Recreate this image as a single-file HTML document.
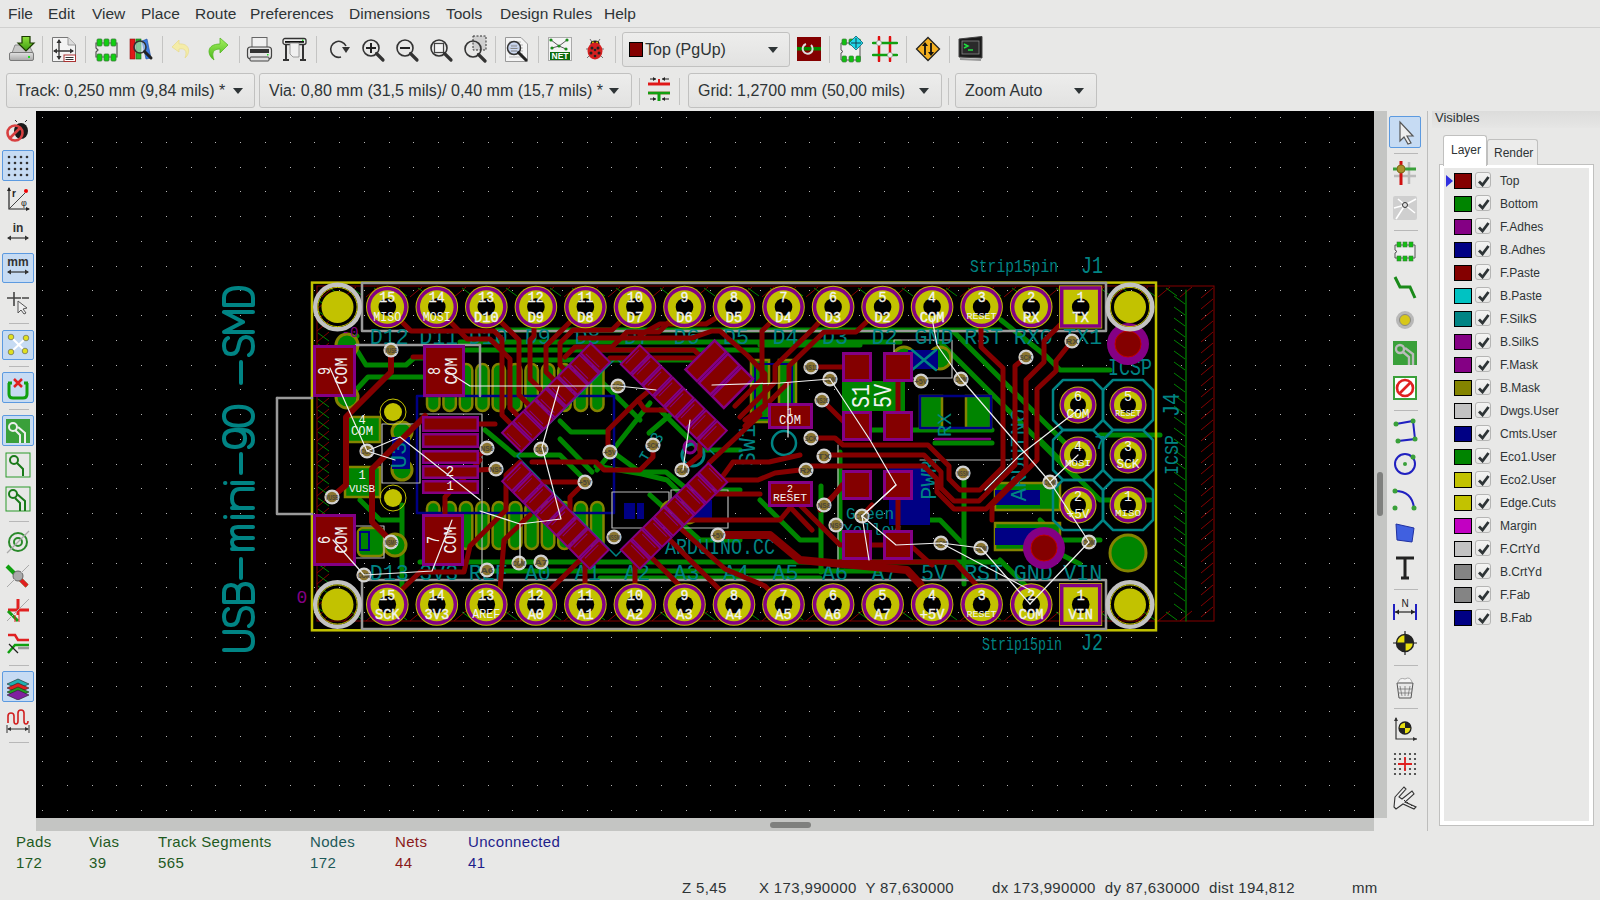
<!DOCTYPE html><html><head><meta charset="utf-8"><style>
*{margin:0;padding:0;box-sizing:border-box}
body{width:1600px;height:900px;overflow:hidden;background:#e8e8e7;font-family:"Liberation Sans",sans-serif;position:relative;color:#2e3436}
.abs{position:absolute}
.menu{position:absolute;top:0;left:0;width:1600px;height:28px;border-bottom:1px solid #d0d0cf;background:#e8e8e7}
.menu span{position:absolute;top:5px;font-size:15.5px;color:#2e3436}
.sep{position:absolute;width:1px;background:#c4c4c3}
.dd{position:absolute;border:1px solid #c1c1c0;border-radius:3px;background:linear-gradient(#ededec,#e2e2e1);font-size:16px;color:#2e3436}
.dd span{position:absolute;left:9px;top:8px;white-space:nowrap}
.dd i{position:absolute;top:14px;width:0;height:0;border-left:5px solid transparent;border-right:5px solid transparent;border-top:6px solid #2e3436}
.lay{position:absolute;left:1454px;height:16px}
.lay b{position:absolute;left:0;top:0;width:18px;height:16px;border:1px solid #000}
.lay u{position:absolute;left:21px;top:-1px;width:16px;height:16px;border:1px solid #b5b5b4;border-radius:3px;background:linear-gradient(#f4f4f3,#e6e6e5)}
.lay span{position:absolute;left:46px;top:1px;font-size:12px;color:#2e3436;white-space:nowrap}
.st{position:absolute;font-size:15px;white-space:nowrap;letter-spacing:0.35px}
</style></head><body>
<div class="menu">
<span style="left:8px">File</span>
<span style="left:48px">Edit</span>
<span style="left:92px">View</span>
<span style="left:141px">Place</span>
<span style="left:195px">Route</span>
<span style="left:250px">Preferences</span>
<span style="left:349px">Dimensions</span>
<span style="left:446px">Tools</span>
<span style="left:500px">Design Rules</span>
<span style="left:604px">Help</span>
</div>
<div class="sep" style="left:42px;top:36px;height:27px"></div>
<div class="sep" style="left:85px;top:36px;height:27px"></div>
<div class="sep" style="left:162px;top:36px;height:27px"></div>
<div class="sep" style="left:239px;top:36px;height:27px"></div>
<div class="sep" style="left:316px;top:36px;height:27px"></div>
<div class="sep" style="left:495px;top:36px;height:27px"></div>
<div class="sep" style="left:538px;top:36px;height:27px"></div>
<div class="sep" style="left:615px;top:36px;height:27px"></div>
<div class="sep" style="left:829px;top:36px;height:27px"></div>
<div class="sep" style="left:906px;top:36px;height:27px"></div>
<div class="sep" style="left:949px;top:36px;height:27px"></div>
<div class="sep" style="left:639px;top:78px;height:27px"></div>
<div class="sep" style="left:679px;top:78px;height:27px"></div>
<div class="sep" style="left:948px;top:78px;height:27px"></div>
<div class="dd" style="left:622px;top:32px;width:168px;height:35px"><b style="position:absolute;left:6px;top:9px;width:14px;height:15px;background:#840000;border:1px solid #000"></b><span style="left:22px;top:8px">Top (PgUp)</span><i style="left:145px"></i></div>
<div class="dd" style="left:6px;top:73px;width:249px;height:35px"><span>Track: 0,250 mm (9,84 mils) *</span><i style="left:226px"></i></div>
<div class="dd" style="left:259px;top:73px;width:373px;height:35px"><span>Via: 0,80 mm (31,5 mils)/ 0,40 mm (15,7 mils) *</span><i style="left:349px"></i></div>
<div class="dd" style="left:688px;top:73px;width:254px;height:35px"><span>Grid: 1,2700 mm (50,00 mils)</span><i style="left:230px"></i></div>
<div class="dd" style="left:955px;top:73px;width:142px;height:35px"><span>Zoom Auto</span><i style="left:118px"></i></div>
<svg class="abs" style="left:8px;top:35px" width="28" height="28" viewBox="0 0 28 28"><defs><linearGradient id="dg" x1="0" y1="0" x2="0" y2="1"><stop offset="0" stop-color="#e2e2e2"/><stop offset="1" stop-color="#a8a8a8"/></linearGradient><linearGradient id="ga" x1="0" y1="0" x2="0" y2="1"><stop offset="0" stop-color="#8ee03c"/><stop offset="1" stop-color="#3c9a10"/></linearGradient></defs><path d="M4 18 L7 10 L21 10 L25 18 Z" fill="#c8c8c8" stroke="#8a8a8a"/><rect x="1.5" y="17.5" width="24" height="8" rx="1.5" fill="url(#dg)" stroke="#7a7a7a"/><rect x="20" y="21" width="2" height="2" fill="#20e020"/><path d="M14 1.5 L22 1.5 L22 8 L26 8 L18 16 L10 8 L14 8 Z" fill="url(#ga)" stroke="#1a3a00" stroke-width="1.2"/></svg>
<svg class="abs" style="left:51px;top:36px" width="27" height="27" viewBox="0 0 27 27"><path d="M1.5 1.5 L17 1.5 L24.5 9 L24.5 25.5 L1.5 25.5 Z" fill="#f4f4f4" stroke="#777"/><path d="M17 1.5 L17 9 L24.5 9" fill="#ddd" stroke="#999"/><path d="M8 4 V23 M3 15 H22" stroke="#333" stroke-width="1.3"/><path d="M8 3 l-2.5 4 h5z M8 24 l-2.5 -4 h5z M2 15 l4 -2.5 v5z M23 15 l-4 -2.5 v5z" fill="#333"/><rect x="13" y="19" width="11.5" height="6.5" fill="#fff" stroke="#a33"/><path d="M14.5 21.5h8M14.5 23.5h8" stroke="#333"/></svg>
<svg class="abs" style="left:93px;top:36px" width="27" height="27" viewBox="0 0 27 27"><path d="M3 7 H24 V21 H3 V16 L5 14 L3 12 Z" fill="#e8e8e8" stroke="#555" stroke-width="1.2"/><rect x="4" y="3" width="5" height="7" rx="1" fill="#10d010" stroke="#3a7a3a" stroke-width=".8"/><rect x="4" y="18" width="5" height="7" rx="1" fill="#10d010" stroke="#3a7a3a" stroke-width=".8"/><rect x="11" y="3" width="5" height="7" rx="1" fill="#10d010" stroke="#3a7a3a" stroke-width=".8"/><rect x="11" y="18" width="5" height="7" rx="1" fill="#10d010" stroke="#3a7a3a" stroke-width=".8"/><rect x="18" y="3" width="5" height="7" rx="1" fill="#10d010" stroke="#3a7a3a" stroke-width=".8"/><rect x="18" y="18" width="5" height="7" rx="1" fill="#10d010" stroke="#3a7a3a" stroke-width=".8"/></svg>
<svg class="abs" style="left:128px;top:37px" width="27" height="26" viewBox="0 0 27 26"><rect x="2" y="2" width="5" height="20" fill="#e01818" stroke="#901010" stroke-width=".6"/><rect x="8" y="2" width="5" height="20" fill="#30b030" stroke="#107010" stroke-width=".6"/><path d="M14 4 L19 2 L23 21 L18 22 Z" fill="#3a7ae0" stroke="#1a4aa0" stroke-width=".6"/><circle cx="12" cy="10" r="6" fill="rgba(200,220,240,.55)" stroke="#333" stroke-width="1.6"/><path d="M16.5 14.5 L23 21" stroke="#222" stroke-width="3" stroke-linecap="round"/></svg>
<svg class="abs" style="left:170px;top:37px" width="24" height="24" viewBox="0 0 24 24"><path d="M9 3 L2 10 L9 15 L9 12 C14 11 18 13 15 21 C21 16 20 6 9 7 Z" fill="#f4eca8" stroke="#e8dc90" stroke-width=".8"/></svg>
<svg class="abs" style="left:205px;top:36px" width="26" height="26" viewBox="0 0 26 26"><defs><linearGradient id="gr" x1="0" y1="0" x2="0" y2="1"><stop offset="0" stop-color="#a6f060"/><stop offset="1" stop-color="#48b818"/></linearGradient></defs><path d="M15 2 L23 9 L15 17 L15 13 C9 13 6 16 9 24 C2 19 1 8 15 8 Z" fill="url(#gr)" stroke="#58b828" stroke-width=".8"/></svg>
<svg class="abs" style="left:246px;top:36px" width="27" height="27" viewBox="0 0 27 27"><rect x="6" y="1.5" width="15" height="12" fill="#f0f0f0" stroke="#666"/><rect x="1.5" y="11" width="24" height="12" rx="3" fill="#e4e4e4" stroke="#444" stroke-width="1.2"/><rect x="4" y="13" width="19" height="4" fill="#333"/><rect x="4" y="21" width="19" height="4" rx="1" fill="#ddd" stroke="#444"/><rect x="21" y="18" width="1.5" height="1.5" fill="#2d2"/></svg>
<svg class="abs" style="left:281px;top:37px" width="27" height="26" viewBox="0 0 27 26"><rect x="2" y="1.5" width="23" height="6" rx="2" fill="#eee" stroke="#333" stroke-width="1.3"/><rect x="4" y="4" width="19" height="1.8" fill="#111"/><rect x="21" y="2.5" width="1.5" height="1.5" fill="#2d2"/><path d="M5 7 V22 M22 7 V22" stroke="#333" stroke-width="2"/><path d="M2 23 H8 M19 23 H25" stroke="#333" stroke-width="2.2"/><path d="M9 6 H18 V20 H12 L9 17 Z" fill="#f0f0f0" stroke="#888" stroke-width=".8"/></svg>
<svg class="abs" style="left:327px;top:38px" width="24" height="24" viewBox="0 0 24 24"><path d="M14 19 A8 8 0 1 1 19 8" fill="none" stroke="#333" stroke-width="1.6"/><path d="M15 9 L23 9 L19 15 Z" fill="#333"/></svg>
<svg class="abs" style="left:361px;top:38px" width="26" height="26" viewBox="0 0 26 26"><circle cx="10" cy="10" r="8" fill="none" stroke="#333" stroke-width="1.6"/><path d="M10 5 V15 M5 10 H15" stroke="#222" stroke-width="2"/><path d="M15.5 15.5 L22 22" stroke="#333" stroke-width="3.2" stroke-linecap="round"/></svg>
<svg class="abs" style="left:395px;top:38px" width="26" height="26" viewBox="0 0 26 26"><circle cx="10" cy="10" r="8" fill="none" stroke="#333" stroke-width="1.6"/><path d="M5 10 H15" stroke="#222" stroke-width="2"/><path d="M15.5 15.5 L22 22" stroke="#333" stroke-width="3.2" stroke-linecap="round"/></svg>
<svg class="abs" style="left:429px;top:38px" width="26" height="26" viewBox="0 0 26 26"><circle cx="10" cy="10" r="8" fill="none" stroke="#333" stroke-width="1.6"/><rect x="5.5" y="5.5" width="9" height="9" fill="#f4f4f4" stroke="#444" stroke-width="1.2"/><path d="M15.5 15.5 L22 22" stroke="#333" stroke-width="3.2" stroke-linecap="round"/></svg>
<svg class="abs" style="left:463px;top:35px" width="28" height="28" viewBox="0 0 28 28"><rect x="10" y="1" width="13" height="14" fill="#cfcfcf" stroke="#333" stroke-dasharray="2 1.5"/><circle cx="10" cy="14" r="8" fill="none" stroke="#333" stroke-width="1.6"/><path d="M15.5 19.5 L22 26" stroke="#333" stroke-width="3.2" stroke-linecap="round"/></svg>
<svg class="abs" style="left:503px;top:36px" width="28" height="28" viewBox="0 0 28 28"><path d="M2.5 1.5 L18 1.5 L24.5 8 L24.5 25.5 L2.5 25.5 Z" fill="#f4f4f4" stroke="#999"/><path d="M6 6h12M6 9h14M6 12h14M6 15h14M6 18h14M6 21h14" stroke="#aaa" stroke-width=".8"/><circle cx="11" cy="12" r="6.5" fill="rgba(180,200,240,.6)" stroke="#333" stroke-width="1.5"/><path d="M8 10h6M7.5 12.5h7M8 15h6" stroke="#888"/><path d="M15.5 16.5 L23 24" stroke="#222" stroke-width="3" stroke-linecap="round"/></svg>
<svg class="abs" style="left:547px;top:36px" width="26" height="26" viewBox="0 0 26 26"><rect x="1.5" y="1.5" width="23" height="23" fill="#f4f4f4" stroke="#aaa"/><path d="M4 4 L12 10 L20 4 M5 12 L12 10 L19 13" stroke="#333" stroke-width=".8" fill="none"/><circle cx="4" cy="4" r="1.6" fill="#1a8a1a"/><circle cx="20" cy="4" r="1.6" fill="#1a8a1a"/><circle cx="12" cy="10" r="1.6" fill="#1a8a1a"/><circle cx="5" cy="12" r="1.6" fill="#1a8a1a"/><circle cx="19" cy="13" r="1.6" fill="#1a8a1a"/><rect x="3" y="16" width="20" height="8" fill="#0c6a0c"/><text x="13" y="23" font-family="Liberation Sans" font-weight="bold" font-size="8.5" fill="#fff" text-anchor="middle">NET</text></svg>
<svg class="abs" style="left:582px;top:36px" width="26" height="26" viewBox="0 0 26 26"><path d="M8 3 L10 6 M18 3 L16 6 M4 13 L7 13 M22 13 L19 13 M5 22 L8 19 M21 22 L18 19" stroke="#555" stroke-width=".8"/><ellipse cx="13" cy="7.5" rx="4.5" ry="3" fill="#222"/><circle cx="11" cy="6.5" r=".9" fill="#ee0"/><circle cx="15" cy="6.5" r=".9" fill="#ee0"/><ellipse cx="13" cy="15" rx="7.5" ry="8.5" fill="#d42020"/><circle cx="10" cy="12" r="1.5" fill="#222"/><circle cx="16" cy="12" r="1.5" fill="#222"/><circle cx="9" cy="17" r="1.5" fill="#222"/><circle cx="17" cy="17" r="1.5" fill="#222"/><circle cx="13" cy="20" r="1.3" fill="#222"/><circle cx="13" cy="14" r="1.3" fill="#222"/></svg>
<svg class="abs" style="left:796px;top:36px" width="26" height="26" viewBox="0 0 26 26"><rect x="1" y="1" width="24" height="24" fill="#840000"/><rect x="1" y="11" width="24" height="3.5" fill="#008a00"/><path d="M10 8 A5 5 0 1 0 15 9" fill="none" stroke="#ddd" stroke-width="2"/></svg>
<svg class="abs" style="left:838px;top:35px" width="28" height="28" viewBox="0 0 28 28"><path d="M3 8 H22 V25 H3 V18 L5 16.5 L3 15 Z" fill="#eee" stroke="#555" stroke-width="1"/><rect x="4" y="4" width="4.5" height="6" rx="1" fill="#10c010" stroke="#3a7a3a" stroke-width=".7"/><rect x="4" y="21" width="4.5" height="6" rx="1" fill="#10c010" stroke="#3a7a3a" stroke-width=".7"/><rect x="11" y="4" width="4.5" height="6" rx="1" fill="#10c010" stroke="#3a7a3a" stroke-width=".7"/><rect x="11" y="21" width="4.5" height="6" rx="1" fill="#10c010" stroke="#3a7a3a" stroke-width=".7"/><rect x="18" y="4" width="4.5" height="6" rx="1" fill="#10c010" stroke="#3a7a3a" stroke-width=".7"/><rect x="18" y="21" width="4.5" height="6" rx="1" fill="#10c010" stroke="#3a7a3a" stroke-width=".7"/><path d="M18 1 L25 8 L18 15 L11 8 Z" fill="#20d8e8" stroke="#106070" stroke-width=".8"/><path d="M18 3 V13 M13 8 H23" stroke="#104050" stroke-width="1"/></svg>
<svg class="abs" style="left:872px;top:36px" width="26" height="26" viewBox="0 0 26 26"><path d="M7 1 V25 M18 1 V25" stroke="#e01010" stroke-width="2.5" stroke-linecap="round"/><path d="M1 7 H25 M1 19 H25" stroke="#10a010" stroke-width="2.5" stroke-linecap="round"/><circle cx="7" cy="7" r="2.6" fill="#eee" stroke="#888" stroke-width=".6"/><circle cx="18" cy="19" r="2.6" fill="#eee" stroke="#888" stroke-width=".6"/></svg>
<svg class="abs" style="left:915px;top:36px" width="26" height="26" viewBox="0 0 26 26"><path d="M13 1.5 L24.5 13 L13 24.5 L1.5 13 Z" fill="#f4b020" stroke="#222" stroke-width="1.3"/><path d="M10 8 V19 M16 7 V18" stroke="#111" stroke-width="1.8"/><path d="M10 6 L7 10 H13Z M16 20 L13 16 H19Z" fill="#111"/></svg>
<svg class="abs" style="left:957px;top:35px" width="28" height="28" viewBox="0 0 28 28"><path d="M2 4 L25 1.5 L25 23 L2 22 Z" fill="#1a1a1a" stroke="#444"/><rect x="5" y="6" width="17" height="13" fill="#2a2a2a" stroke="#888" stroke-width=".8"/><path d="M7 9 L11 11 L7 13" stroke="#20e040" stroke-width="1.5" fill="none"/><path d="M11 15 H16" stroke="#20e040" stroke-width="1.5"/><path d="M3 24 L24 25" stroke="#999" stroke-width="2"/></svg>
<svg class="abs" style="left:646px;top:76px" width="28" height="28" viewBox="0 0 28 28"><path d="M2 8 H24 M2 17 H24" stroke="#e01818" stroke-width="2.6"/><path d="M2 17 H24" stroke="#10a010" stroke-width="2.6"/><path d="M2 8 H24" stroke="#e01818" stroke-width="2.6"/><path d="M13 8 V3" stroke="#e01818" stroke-width="2"/><path d="M13 17 V25" stroke="#10a010" stroke-width="3"/><path d="M4 3 H10 M16 3 H23 M4 23 H10 M16 23 H23" stroke="#222" stroke-width="1.2"/><path d="M10 3 l-3 -2 v4z M16 3 l3 -2 v4z M10 23 l-3 -2 v4z M16 23 l3 -2 v4z" fill="#222"/></svg>
<div class="abs" style="left:2px;top:150px;width:32px;height:31px;background:#c6dbf3;border:1px solid #5c9ae0;border-radius:2px"></div>
<div class="abs" style="left:2px;top:253px;width:32px;height:30px;background:#c6dbf3;border:1px solid #5c9ae0;border-radius:2px"></div>
<div class="abs" style="left:2px;top:330px;width:32px;height:30px;background:#c6dbf3;border:1px solid #5c9ae0;border-radius:2px"></div>
<div class="abs" style="left:2px;top:372px;width:32px;height:31px;background:#c6dbf3;border:1px solid #5c9ae0;border-radius:2px"></div>
<div class="abs" style="left:2px;top:415px;width:32px;height:31px;background:#c6dbf3;border:1px solid #5c9ae0;border-radius:2px"></div>
<div class="abs" style="left:2px;top:671px;width:32px;height:31px;background:#c6dbf3;border:1px solid #5c9ae0;border-radius:2px"></div>
<div class="abs" style="left:9px;top:323px;width:20px;height:1px;background:#b8b8b8"></div>
<div class="abs" style="left:9px;top:366px;width:20px;height:1px;background:#b8b8b8"></div>
<div class="abs" style="left:9px;top:409px;width:20px;height:1px;background:#b8b8b8"></div>
<div class="abs" style="left:9px;top:521px;width:20px;height:1px;background:#b8b8b8"></div>
<div class="abs" style="left:9px;top:665px;width:20px;height:1px;background:#b8b8b8"></div>
<div class="abs" style="left:9px;top:742px;width:20px;height:1px;background:#b8b8b8"></div>
<svg class="abs" style="left:5px;top:119px" width="26" height="26" viewBox="0 0 26 26"><ellipse cx="16" cy="12" rx="7" ry="8" fill="#1a1a1a"/><path d="M12 3 l-2 -2 M20 3 l2 -2" stroke="#333"/><circle cx="10" cy="14" r="7.5" fill="none" stroke="#d84040" stroke-width="2.6"/><path d="M5 19 L15 9" stroke="#d84040" stroke-width="2.6"/></svg>
<svg class="abs" style="left:5px;top:153px" width="26" height="26" viewBox="0 0 26 26"><circle cx="4" cy="4" r="1.3" fill="#333"/><circle cx="4" cy="10" r="1.3" fill="#333"/><circle cx="4" cy="16" r="1.3" fill="#333"/><circle cx="4" cy="22" r="1.3" fill="#333"/><circle cx="10" cy="4" r="1.3" fill="#333"/><circle cx="10" cy="10" r="1.3" fill="#333"/><circle cx="10" cy="16" r="1.3" fill="#333"/><circle cx="10" cy="22" r="1.3" fill="#333"/><circle cx="16" cy="4" r="1.3" fill="#333"/><circle cx="16" cy="10" r="1.3" fill="#333"/><circle cx="16" cy="16" r="1.3" fill="#333"/><circle cx="16" cy="22" r="1.3" fill="#333"/><circle cx="22" cy="4" r="1.3" fill="#333"/><circle cx="22" cy="10" r="1.3" fill="#333"/><circle cx="22" cy="16" r="1.3" fill="#333"/><circle cx="22" cy="22" r="1.3" fill="#333"/></svg>
<svg class="abs" style="left:5px;top:186px" width="26" height="26" viewBox="0 0 26 26"><path d="M4 2 V23 H24" fill="none" stroke="#222" stroke-width="1.2"/><path d="M4 1 l-2 4 h4z M25 23 l-4 -2 v4z" fill="#222"/><path d="M4 23 L20 7" stroke="#444" stroke-width="1"/><circle cx="21" cy="5" r="2" fill="#e00"/><text x="7" y="11" font-family="Liberation Sans" font-size="10" font-weight="bold" fill="#222">r</text><text x="16" y="20" font-family="Liberation Sans" font-size="9" fill="#222">φ</text></svg>
<svg class="abs" style="left:5px;top:220px" width="26" height="26" viewBox="0 0 26 26"><text x="13" y="12" font-family="Liberation Sans" font-size="12" font-weight="bold" fill="#333" text-anchor="middle">in</text><path d="M3 18 H23" stroke="#333" stroke-width="1.2"/><path d="M2 18 l4 -2.5 v5z M24 18 l-4 -2.5 v5z" fill="#333"/></svg>
<svg class="abs" style="left:5px;top:254px" width="26" height="26" viewBox="0 0 26 26"><text x="13" y="12" font-family="Liberation Sans" font-size="12" font-weight="bold" fill="#333" text-anchor="middle">mm</text><path d="M3 18 H23" stroke="#333" stroke-width="1.2"/><path d="M2 18 l4 -2.5 v5z M24 18 l-4 -2.5 v5z" fill="#333"/></svg>
<svg class="abs" style="left:5px;top:289px" width="26" height="26" viewBox="0 0 26 26"><path d="M9 3 V17 M2 9 H16 M17 9 H24" stroke="#444" stroke-width="1.6"/><path d="M13 12 L13 24 L16 21 L19 25 L21 24 L18 20 L22 19 Z" fill="#eee" stroke="#555"/></svg>
<svg class="abs" style="left:5px;top:332px" width="26" height="26" viewBox="0 0 26 26"><path d="M6 5 L20 19 M21 6 L6 20" stroke="#fff" stroke-width="2"/><circle cx="6" cy="5" r="2.8" fill="#e0e020" stroke="#555" stroke-width=".6"/><circle cx="21" cy="6" r="2.8" fill="#e0e020" stroke="#555" stroke-width=".6"/><circle cx="6" cy="20" r="2.8" fill="#e0e020" stroke="#555" stroke-width=".6"/><circle cx="20" cy="19" r="2.8" fill="#e0e020" stroke="#555" stroke-width=".6"/></svg>
<svg class="abs" style="left:5px;top:375px" width="26" height="26" viewBox="0 0 26 26"><path d="M4 8 V19 Q4 23 8 23 H18 Q22 23 22 19 V8" fill="none" stroke="#10a010" stroke-width="3"/><path d="M3 8 H7 M19 8 H23" stroke="#10a010" stroke-width="3"/><path d="M9 4 L17 12 M17 4 L9 12" stroke="#e02020" stroke-width="2.5"/></svg>
<svg class="abs" style="left:5px;top:418px" width="26" height="26" viewBox="0 0 26 26"><rect x="1" y="1" width="24" height="24" fill="#3aa03a"/><circle cx="8" cy="9" r="4" fill="none" stroke="#eee" stroke-width="2"/><path d="M10 12 L15 17 V25 M13 9 L20 15 V25" stroke="#eee" stroke-width="2" fill="none"/></svg>
<svg class="abs" style="left:5px;top:452px" width="26" height="26" viewBox="0 0 26 26"><rect x="1" y="1" width="24" height="24" fill="none" stroke="#2a9a2a"/><circle cx="9" cy="8" r="4" fill="none" stroke="#1a7a1a" stroke-width="2"/><path d="M12 11 L18 17 V24" stroke="#1a7a1a" stroke-width="2" fill="none"/></svg>
<svg class="abs" style="left:5px;top:486px" width="26" height="26" viewBox="0 0 26 26"><rect x="1" y="1" width="24" height="24" fill="none" stroke="#2a9a2a"/><circle cx="8" cy="8" r="4" fill="none" stroke="#1a7a1a" stroke-width="2"/><path d="M10 12 L15 17 V25 M12 8 L20 15 V25" stroke="#1a7a1a" stroke-width="2" fill="none"/></svg>
<svg class="abs" style="left:5px;top:529px" width="26" height="26" viewBox="0 0 26 26"><circle cx="13" cy="13" r="9" fill="none" stroke="#2a8a2a" stroke-width="2"/><circle cx="13" cy="13" r="4" fill="none" stroke="#2a8a2a" stroke-width="2"/><path d="M2 24 L24 2" stroke="#aaa" stroke-width="1.3"/></svg>
<svg class="abs" style="left:5px;top:563px" width="26" height="26" viewBox="0 0 26 26"><path d="M2 3 L22 23" stroke="#10a010" stroke-width="4"/><path d="M13 14 L22 23" stroke="#e02020" stroke-width="4"/><circle cx="13" cy="13" r="5" fill="#aaa" stroke="#666"/><path d="M2 24 L24 2" stroke="#aaa" stroke-width="1"/></svg>
<svg class="abs" style="left:5px;top:597px" width="26" height="26" viewBox="0 0 26 26"><path d="M13 2 V18 M3 13 H24" stroke="#e02020" stroke-width="3"/><path d="M3 14 L13 24" stroke="#10a010" stroke-width="3"/><path d="M10 18 V25 M14 18 V25" stroke="#e02020" stroke-width="1"/><path d="M2 24 L24 2" stroke="#aaa" stroke-width="1"/></svg>
<svg class="abs" style="left:5px;top:631px" width="26" height="26" viewBox="0 0 26 26"><path d="M3 4 L10 4 L13 9 L24 9" stroke="#e02020" stroke-width="2.5" fill="none"/><path d="M3 22 L10 14 L24 14" stroke="#10a010" stroke-width="2.5" fill="none"/><path d="M4 13 L13 22" stroke="#222" stroke-width="1.3"/><path d="M13 17 H24" stroke="#999" stroke-width="2.5"/></svg>
<svg class="abs" style="left:5px;top:674px" width="26" height="26" viewBox="0 0 26 26"><path d="M2 10 L13 5 L24 10 L13 15 Z" fill="#20b0b0" stroke="#222" stroke-width=".6"/><path d="M2 14 L13 9 L24 14 L13 19 Z" fill="#e02020" stroke="#222" stroke-width=".6"/><path d="M2 18 L13 13 L24 18 L13 23 Z" fill="#20a020" stroke="#222" stroke-width=".6"/><path d="M2 21 L13 16 L24 21 L13 26 Z" fill="#8020a0" stroke="#222" stroke-width=".6"/></svg>
<svg class="abs" style="left:5px;top:708px" width="26" height="26" viewBox="0 0 26 26"><path d="M3 15 V8 Q3 5 6 5 Q9 5 9 8 V13 Q9 16 11 16 Q13 16 13 13 V5 Q13 2 16 2 Q19 2 19 5 V13 Q19 16 21 16 Q23 16 23 13" fill="none" stroke="#d02020" stroke-width="1.6"/><path d="M3 21 H23" stroke="#333"/><path d="M2 21 l4 -2 v4z M24 21 l-4 -2 v4z" fill="#333"/><path d="M2 17 V25 M24 17 V25" stroke="#333"/></svg>
<div class="abs" style="left:1389px;top:116px;width:32px;height:32px;background:#c6dbf3;border:1px solid #5c9ae0;border-radius:2px"></div>
<div class="abs" style="left:1394px;top:153px;width:24px;height:1px;background:#b8b8b8"></div>
<div class="abs" style="left:1394px;top:230px;width:24px;height:1px;background:#b8b8b8"></div>
<div class="abs" style="left:1394px;top:410px;width:24px;height:1px;background:#b8b8b8"></div>
<div class="abs" style="left:1394px;top:589px;width:24px;height:1px;background:#b8b8b8"></div>
<div class="abs" style="left:1394px;top:665px;width:24px;height:1px;background:#b8b8b8"></div>
<div class="abs" style="left:1394px;top:708px;width:24px;height:1px;background:#b8b8b8"></div>
<svg class="abs" style="left:1392px;top:119px" width="26" height="26" viewBox="0 0 26 26"><path d="M8 3 L8 22 L12 18 L16 25 L19 24 L15 17 L21 17 Z" fill="#eee" stroke="#555" stroke-width="1.2"/></svg>
<svg class="abs" style="left:1392px;top:160px" width="26" height="26" viewBox="0 0 26 26"><path d="M2 16 H24 M17 2 V24" stroke="#bbb" stroke-width="2.5"/><path d="M9 1 V25" stroke="#d01010" stroke-width="3"/><path d="M1 9 H24" stroke="#3aa03a" stroke-width="3"/><circle cx="9" cy="9" r="4" fill="#a8902a" stroke="#806a1a"/></svg>
<svg class="abs" style="left:1392px;top:195px" width="26" height="26" viewBox="0 0 26 26"><rect x="1" y="1" width="24" height="24" rx="2" fill="#cfcfcf"/><path d="M13 10 L4 24 M13 10 L24 4 M13 10 L23 18 M13 10 L6 4 M13 10 L2 13" stroke="#fff" stroke-width="1.6"/><circle cx="13" cy="10" r="2.5" fill="#ddd" stroke="#333"/></svg>
<svg class="abs" style="left:1392px;top:238px" width="26" height="26" viewBox="0 0 26 26"><path d="M3 7 H23 V20 H3 V15 L5 13.5 L3 12 Z" fill="#eee" stroke="#555"/><rect x="5" y="4" width="4" height="5" fill="#10c010" stroke="#3a7a3a" stroke-width=".6"/><rect x="5" y="18" width="4" height="5" fill="#10c010" stroke="#3a7a3a" stroke-width=".6"/><rect x="11" y="4" width="4" height="5" fill="#10c010" stroke="#3a7a3a" stroke-width=".6"/><rect x="11" y="18" width="4" height="5" fill="#10c010" stroke="#3a7a3a" stroke-width=".6"/><rect x="17" y="4" width="4" height="5" fill="#10c010" stroke="#3a7a3a" stroke-width=".6"/><rect x="17" y="18" width="4" height="5" fill="#10c010" stroke="#3a7a3a" stroke-width=".6"/></svg>
<svg class="abs" style="left:1392px;top:274px" width="26" height="26" viewBox="0 0 26 26"><path d="M3 3 L8 13 L18 13 L23 24" stroke="#1a8a1a" stroke-width="3" fill="none"/></svg>
<svg class="abs" style="left:1392px;top:307px" width="26" height="26" viewBox="0 0 26 26"><circle cx="13" cy="13" r="9" fill="#b8b8b8"/><circle cx="13" cy="13" r="5.5" fill="#d8c818" stroke="#888"/></svg>
<svg class="abs" style="left:1392px;top:340px" width="26" height="26" viewBox="0 0 26 26"><rect x="1" y="1" width="24" height="24" fill="#3aa03a"/><circle cx="8" cy="9" r="4" fill="none" stroke="#bbb" stroke-width="2.4"/><path d="M11 12 L17 17 V25 M13 8 L21 14 V25" stroke="#bbb" stroke-width="2.4" fill="none"/></svg>
<svg class="abs" style="left:1392px;top:375px" width="26" height="26" viewBox="0 0 26 26"><rect x="1" y="1" width="24" height="24" fill="#3aa03a"/><rect x="3" y="3" width="20" height="20" fill="#fff"/><circle cx="13" cy="13" r="8" fill="none" stroke="#e02020" stroke-width="2.6"/><path d="M8 18 L18 8" stroke="#e02020" stroke-width="2.6"/></svg>
<svg class="abs" style="left:1392px;top:418px" width="26" height="26" viewBox="0 0 26 26"><path d="M4 6 L21 3 L23 21 L6 23" stroke="#2020c0" stroke-width="2" fill="none"/><circle cx="4" cy="6" r="2.5" fill="#3aa03a"/><circle cx="21" cy="3" r="2.5" fill="#3aa03a"/><circle cx="23" cy="21" r="2.5" fill="#3aa03a"/><circle cx="6" cy="23" r="2.5" fill="#3aa03a"/></svg>
<svg class="abs" style="left:1392px;top:451px" width="26" height="26" viewBox="0 0 26 26"><circle cx="13" cy="13" r="10" fill="none" stroke="#2020c0" stroke-width="2"/><circle cx="13" cy="13" r="2" fill="#3aa03a"/><circle cx="21" cy="6" r="2.5" fill="#3aa03a"/></svg>
<svg class="abs" style="left:1392px;top:486px" width="26" height="26" viewBox="0 0 26 26"><path d="M3 5 Q20 5 22 22" stroke="#2020c0" stroke-width="2" fill="none"/><circle cx="3" cy="5" r="2.5" fill="#3aa03a"/><circle cx="22" cy="22" r="2.5" fill="#3aa03a"/><circle cx="3" cy="22" r="2.5" fill="#3aa03a"/></svg>
<svg class="abs" style="left:1392px;top:520px" width="26" height="26" viewBox="0 0 26 26"><path d="M4 4 L22 8 L20 22 L5 20 Z" fill="#4060e0" stroke="#2030a0"/></svg>
<svg class="abs" style="left:1392px;top:554px" width="26" height="26" viewBox="0 0 26 26"><path d="M4 4 H22 M13 4 V24 M9 24 H17" stroke="#222" stroke-width="3"/></svg>
<svg class="abs" style="left:1392px;top:596px" width="26" height="26" viewBox="0 0 26 26"><path d="M2 8 V24 M24 8 V24" stroke="#2020c0" stroke-width="2"/><path d="M3 16 H23" stroke="#222" stroke-width="1.2"/><path d="M3 16 l4 -2.5 v5z M23 16 l-4 -2.5 v5z" fill="#222"/><text x="13" y="11" font-family="Liberation Sans" font-size="10" fill="#222" text-anchor="middle">N</text></svg>
<svg class="abs" style="left:1392px;top:630px" width="26" height="26" viewBox="0 0 26 26"><circle cx="13" cy="13" r="8.5" fill="#e8e010" stroke="#222" stroke-width="1.5"/><path d="M13 4.5 A8.5 8.5 0 0 1 21.5 13 H13Z M13 21.5 A8.5 8.5 0 0 1 4.5 13 H13Z" fill="#222"/><path d="M13 1 V25 M1 13 H25" stroke="#222" stroke-width="1.2"/></svg>
<svg class="abs" style="left:1392px;top:674px" width="26" height="26" viewBox="0 0 26 26"><path d="M5 9 H21 L19 24 H7 Z" fill="#e8e8e8" stroke="#555"/><path d="M8 12 L10 22 M13 12 V22 M18 12 L16 22 M6 15 H20 M6 19 H20" stroke="#777" stroke-width=".8"/><path d="M6 8 Q8 3 13 5 Q18 2 20 8" fill="#f4f4f4" stroke="#aaa"/></svg>
<svg class="abs" style="left:1392px;top:716px" width="26" height="26" viewBox="0 0 26 26"><path d="M4 2 V23 H25" stroke="#333" stroke-width="1.2" fill="none"/><path d="M4 1 l-2 4 h4z M25 23 l-4 -2 v4z" fill="#333"/><circle cx="13" cy="12" r="6" fill="#e8e010" stroke="#222" stroke-width="1.3"/><path d="M13 6 A6 6 0 0 1 19 12 H13Z M13 18 A6 6 0 0 1 7 12 H13Z" fill="#222"/></svg>
<svg class="abs" style="left:1392px;top:751px" width="26" height="26" viewBox="0 0 26 26"><circle cx="3" cy="3" r="1.1" fill="#333"/><circle cx="3" cy="8" r="1.1" fill="#333"/><circle cx="3" cy="13" r="1.1" fill="#333"/><circle cx="3" cy="18" r="1.1" fill="#333"/><circle cx="3" cy="23" r="1.1" fill="#333"/><circle cx="8" cy="3" r="1.1" fill="#333"/><circle cx="8" cy="8" r="1.1" fill="#333"/><circle cx="8" cy="13" r="1.1" fill="#333"/><circle cx="8" cy="18" r="1.1" fill="#333"/><circle cx="8" cy="23" r="1.1" fill="#333"/><circle cx="13" cy="3" r="1.1" fill="#333"/><circle cx="13" cy="8" r="1.1" fill="#333"/><circle cx="13" cy="13" r="1.1" fill="#333"/><circle cx="13" cy="18" r="1.1" fill="#333"/><circle cx="13" cy="23" r="1.1" fill="#333"/><circle cx="18" cy="3" r="1.1" fill="#333"/><circle cx="18" cy="8" r="1.1" fill="#333"/><circle cx="18" cy="13" r="1.1" fill="#333"/><circle cx="18" cy="18" r="1.1" fill="#333"/><circle cx="18" cy="23" r="1.1" fill="#333"/><circle cx="23" cy="3" r="1.1" fill="#333"/><circle cx="23" cy="8" r="1.1" fill="#333"/><circle cx="23" cy="13" r="1.1" fill="#333"/><circle cx="23" cy="18" r="1.1" fill="#333"/><circle cx="23" cy="23" r="1.1" fill="#333"/><path d="M13 6 V20 M6 13 H20" stroke="#e02020" stroke-width="1.8"/></svg>
<svg class="abs" style="left:1392px;top:785px" width="26" height="26" viewBox="0 0 26 26"><path d="M3 12 L12 2 L14 4 L7 12 L10 14 L20 6 L22 9 L13 17 L24 22 L22 24 L11 19 L4 24 L2 22 Z" fill="#eee" stroke="#333" stroke-width="1.1"/><path d="M12 15 l2 2 M15 17 l2 2 M18 19 l2 2" stroke="#333"/></svg>
<div class="abs" style="left:36px;top:111px;width:1338px;height:707px;background:#000;overflow:hidden">
<svg width="1338" height="707" viewBox="36 111 1338 707" style="position:absolute;left:0;top:0">
<path fill="#b4b4b4" d="M42 117h1v1h-1zM67 117h1v1h-1zM92 117h1v1h-1zM116 117h1v1h-1zM141 117h1v1h-1zM166 117h1v1h-1zM191 117h1v1h-1zM215 117h1v1h-1zM240 117h1v1h-1zM265 117h1v1h-1zM290 117h1v1h-1zM314 117h1v1h-1zM339 117h1v1h-1zM364 117h1v1h-1zM389 117h1v1h-1zM413 117h1v1h-1zM438 117h1v1h-1zM463 117h1v1h-1zM488 117h1v1h-1zM512 117h1v1h-1zM537 117h1v1h-1zM562 117h1v1h-1zM587 117h1v1h-1zM611 117h1v1h-1zM636 117h1v1h-1zM661 117h1v1h-1zM686 117h1v1h-1zM710 117h1v1h-1zM735 117h1v1h-1zM760 117h1v1h-1zM785 117h1v1h-1zM809 117h1v1h-1zM834 117h1v1h-1zM859 117h1v1h-1zM884 117h1v1h-1zM908 117h1v1h-1zM933 117h1v1h-1zM958 117h1v1h-1zM983 117h1v1h-1zM1007 117h1v1h-1zM1032 117h1v1h-1zM1057 117h1v1h-1zM1082 117h1v1h-1zM1106 117h1v1h-1zM1131 117h1v1h-1zM1156 117h1v1h-1zM1181 117h1v1h-1zM1205 117h1v1h-1zM1230 117h1v1h-1zM1255 117h1v1h-1zM1280 117h1v1h-1zM1305 117h1v1h-1zM1329 117h1v1h-1zM1354 117h1v1h-1zM42 142h1v1h-1zM67 142h1v1h-1zM92 142h1v1h-1zM116 142h1v1h-1zM141 142h1v1h-1zM166 142h1v1h-1zM191 142h1v1h-1zM215 142h1v1h-1zM240 142h1v1h-1zM265 142h1v1h-1zM290 142h1v1h-1zM314 142h1v1h-1zM339 142h1v1h-1zM364 142h1v1h-1zM389 142h1v1h-1zM413 142h1v1h-1zM438 142h1v1h-1zM463 142h1v1h-1zM488 142h1v1h-1zM512 142h1v1h-1zM537 142h1v1h-1zM562 142h1v1h-1zM587 142h1v1h-1zM611 142h1v1h-1zM636 142h1v1h-1zM661 142h1v1h-1zM686 142h1v1h-1zM710 142h1v1h-1zM735 142h1v1h-1zM760 142h1v1h-1zM785 142h1v1h-1zM809 142h1v1h-1zM834 142h1v1h-1zM859 142h1v1h-1zM884 142h1v1h-1zM908 142h1v1h-1zM933 142h1v1h-1zM958 142h1v1h-1zM983 142h1v1h-1zM1007 142h1v1h-1zM1032 142h1v1h-1zM1057 142h1v1h-1zM1082 142h1v1h-1zM1106 142h1v1h-1zM1131 142h1v1h-1zM1156 142h1v1h-1zM1181 142h1v1h-1zM1205 142h1v1h-1zM1230 142h1v1h-1zM1255 142h1v1h-1zM1280 142h1v1h-1zM1305 142h1v1h-1zM1329 142h1v1h-1zM1354 142h1v1h-1zM42 167h1v1h-1zM67 167h1v1h-1zM92 167h1v1h-1zM116 167h1v1h-1zM141 167h1v1h-1zM166 167h1v1h-1zM191 167h1v1h-1zM215 167h1v1h-1zM240 167h1v1h-1zM265 167h1v1h-1zM290 167h1v1h-1zM314 167h1v1h-1zM339 167h1v1h-1zM364 167h1v1h-1zM389 167h1v1h-1zM413 167h1v1h-1zM438 167h1v1h-1zM463 167h1v1h-1zM488 167h1v1h-1zM512 167h1v1h-1zM537 167h1v1h-1zM562 167h1v1h-1zM587 167h1v1h-1zM611 167h1v1h-1zM636 167h1v1h-1zM661 167h1v1h-1zM686 167h1v1h-1zM710 167h1v1h-1zM735 167h1v1h-1zM760 167h1v1h-1zM785 167h1v1h-1zM809 167h1v1h-1zM834 167h1v1h-1zM859 167h1v1h-1zM884 167h1v1h-1zM908 167h1v1h-1zM933 167h1v1h-1zM958 167h1v1h-1zM983 167h1v1h-1zM1007 167h1v1h-1zM1032 167h1v1h-1zM1057 167h1v1h-1zM1082 167h1v1h-1zM1106 167h1v1h-1zM1131 167h1v1h-1zM1156 167h1v1h-1zM1181 167h1v1h-1zM1205 167h1v1h-1zM1230 167h1v1h-1zM1255 167h1v1h-1zM1280 167h1v1h-1zM1305 167h1v1h-1zM1329 167h1v1h-1zM1354 167h1v1h-1zM42 191h1v1h-1zM67 191h1v1h-1zM92 191h1v1h-1zM116 191h1v1h-1zM141 191h1v1h-1zM166 191h1v1h-1zM191 191h1v1h-1zM215 191h1v1h-1zM240 191h1v1h-1zM265 191h1v1h-1zM290 191h1v1h-1zM314 191h1v1h-1zM339 191h1v1h-1zM364 191h1v1h-1zM389 191h1v1h-1zM413 191h1v1h-1zM438 191h1v1h-1zM463 191h1v1h-1zM488 191h1v1h-1zM512 191h1v1h-1zM537 191h1v1h-1zM562 191h1v1h-1zM587 191h1v1h-1zM611 191h1v1h-1zM636 191h1v1h-1zM661 191h1v1h-1zM686 191h1v1h-1zM710 191h1v1h-1zM735 191h1v1h-1zM760 191h1v1h-1zM785 191h1v1h-1zM809 191h1v1h-1zM834 191h1v1h-1zM859 191h1v1h-1zM884 191h1v1h-1zM908 191h1v1h-1zM933 191h1v1h-1zM958 191h1v1h-1zM983 191h1v1h-1zM1007 191h1v1h-1zM1032 191h1v1h-1zM1057 191h1v1h-1zM1082 191h1v1h-1zM1106 191h1v1h-1zM1131 191h1v1h-1zM1156 191h1v1h-1zM1181 191h1v1h-1zM1205 191h1v1h-1zM1230 191h1v1h-1zM1255 191h1v1h-1zM1280 191h1v1h-1zM1305 191h1v1h-1zM1329 191h1v1h-1zM1354 191h1v1h-1zM42 216h1v1h-1zM67 216h1v1h-1zM92 216h1v1h-1zM116 216h1v1h-1zM141 216h1v1h-1zM166 216h1v1h-1zM191 216h1v1h-1zM215 216h1v1h-1zM240 216h1v1h-1zM265 216h1v1h-1zM290 216h1v1h-1zM314 216h1v1h-1zM339 216h1v1h-1zM364 216h1v1h-1zM389 216h1v1h-1zM413 216h1v1h-1zM438 216h1v1h-1zM463 216h1v1h-1zM488 216h1v1h-1zM512 216h1v1h-1zM537 216h1v1h-1zM562 216h1v1h-1zM587 216h1v1h-1zM611 216h1v1h-1zM636 216h1v1h-1zM661 216h1v1h-1zM686 216h1v1h-1zM710 216h1v1h-1zM735 216h1v1h-1zM760 216h1v1h-1zM785 216h1v1h-1zM809 216h1v1h-1zM834 216h1v1h-1zM859 216h1v1h-1zM884 216h1v1h-1zM908 216h1v1h-1zM933 216h1v1h-1zM958 216h1v1h-1zM983 216h1v1h-1zM1007 216h1v1h-1zM1032 216h1v1h-1zM1057 216h1v1h-1zM1082 216h1v1h-1zM1106 216h1v1h-1zM1131 216h1v1h-1zM1156 216h1v1h-1zM1181 216h1v1h-1zM1205 216h1v1h-1zM1230 216h1v1h-1zM1255 216h1v1h-1zM1280 216h1v1h-1zM1305 216h1v1h-1zM1329 216h1v1h-1zM1354 216h1v1h-1zM42 241h1v1h-1zM67 241h1v1h-1zM92 241h1v1h-1zM116 241h1v1h-1zM141 241h1v1h-1zM166 241h1v1h-1zM191 241h1v1h-1zM215 241h1v1h-1zM240 241h1v1h-1zM265 241h1v1h-1zM290 241h1v1h-1zM314 241h1v1h-1zM339 241h1v1h-1zM364 241h1v1h-1zM389 241h1v1h-1zM413 241h1v1h-1zM438 241h1v1h-1zM463 241h1v1h-1zM488 241h1v1h-1zM512 241h1v1h-1zM537 241h1v1h-1zM562 241h1v1h-1zM587 241h1v1h-1zM611 241h1v1h-1zM636 241h1v1h-1zM661 241h1v1h-1zM686 241h1v1h-1zM710 241h1v1h-1zM735 241h1v1h-1zM760 241h1v1h-1zM785 241h1v1h-1zM809 241h1v1h-1zM834 241h1v1h-1zM859 241h1v1h-1zM884 241h1v1h-1zM908 241h1v1h-1zM933 241h1v1h-1zM958 241h1v1h-1zM983 241h1v1h-1zM1007 241h1v1h-1zM1032 241h1v1h-1zM1057 241h1v1h-1zM1082 241h1v1h-1zM1106 241h1v1h-1zM1131 241h1v1h-1zM1156 241h1v1h-1zM1181 241h1v1h-1zM1205 241h1v1h-1zM1230 241h1v1h-1zM1255 241h1v1h-1zM1280 241h1v1h-1zM1305 241h1v1h-1zM1329 241h1v1h-1zM1354 241h1v1h-1zM42 266h1v1h-1zM67 266h1v1h-1zM92 266h1v1h-1zM116 266h1v1h-1zM141 266h1v1h-1zM166 266h1v1h-1zM191 266h1v1h-1zM215 266h1v1h-1zM240 266h1v1h-1zM265 266h1v1h-1zM290 266h1v1h-1zM314 266h1v1h-1zM339 266h1v1h-1zM364 266h1v1h-1zM389 266h1v1h-1zM413 266h1v1h-1zM438 266h1v1h-1zM463 266h1v1h-1zM488 266h1v1h-1zM512 266h1v1h-1zM537 266h1v1h-1zM562 266h1v1h-1zM587 266h1v1h-1zM611 266h1v1h-1zM636 266h1v1h-1zM661 266h1v1h-1zM686 266h1v1h-1zM710 266h1v1h-1zM735 266h1v1h-1zM760 266h1v1h-1zM785 266h1v1h-1zM809 266h1v1h-1zM834 266h1v1h-1zM859 266h1v1h-1zM884 266h1v1h-1zM908 266h1v1h-1zM933 266h1v1h-1zM958 266h1v1h-1zM983 266h1v1h-1zM1007 266h1v1h-1zM1032 266h1v1h-1zM1057 266h1v1h-1zM1082 266h1v1h-1zM1106 266h1v1h-1zM1131 266h1v1h-1zM1156 266h1v1h-1zM1181 266h1v1h-1zM1205 266h1v1h-1zM1230 266h1v1h-1zM1255 266h1v1h-1zM1280 266h1v1h-1zM1305 266h1v1h-1zM1329 266h1v1h-1zM1354 266h1v1h-1zM42 290h1v1h-1zM67 290h1v1h-1zM92 290h1v1h-1zM116 290h1v1h-1zM141 290h1v1h-1zM166 290h1v1h-1zM191 290h1v1h-1zM215 290h1v1h-1zM240 290h1v1h-1zM265 290h1v1h-1zM290 290h1v1h-1zM314 290h1v1h-1zM339 290h1v1h-1zM364 290h1v1h-1zM389 290h1v1h-1zM413 290h1v1h-1zM438 290h1v1h-1zM463 290h1v1h-1zM488 290h1v1h-1zM512 290h1v1h-1zM537 290h1v1h-1zM562 290h1v1h-1zM587 290h1v1h-1zM611 290h1v1h-1zM636 290h1v1h-1zM661 290h1v1h-1zM686 290h1v1h-1zM710 290h1v1h-1zM735 290h1v1h-1zM760 290h1v1h-1zM785 290h1v1h-1zM809 290h1v1h-1zM834 290h1v1h-1zM859 290h1v1h-1zM884 290h1v1h-1zM908 290h1v1h-1zM933 290h1v1h-1zM958 290h1v1h-1zM983 290h1v1h-1zM1007 290h1v1h-1zM1032 290h1v1h-1zM1057 290h1v1h-1zM1082 290h1v1h-1zM1106 290h1v1h-1zM1131 290h1v1h-1zM1156 290h1v1h-1zM1181 290h1v1h-1zM1205 290h1v1h-1zM1230 290h1v1h-1zM1255 290h1v1h-1zM1280 290h1v1h-1zM1305 290h1v1h-1zM1329 290h1v1h-1zM1354 290h1v1h-1zM42 315h1v1h-1zM67 315h1v1h-1zM92 315h1v1h-1zM116 315h1v1h-1zM141 315h1v1h-1zM166 315h1v1h-1zM191 315h1v1h-1zM215 315h1v1h-1zM240 315h1v1h-1zM265 315h1v1h-1zM290 315h1v1h-1zM314 315h1v1h-1zM339 315h1v1h-1zM364 315h1v1h-1zM389 315h1v1h-1zM413 315h1v1h-1zM438 315h1v1h-1zM463 315h1v1h-1zM488 315h1v1h-1zM512 315h1v1h-1zM537 315h1v1h-1zM562 315h1v1h-1zM587 315h1v1h-1zM611 315h1v1h-1zM636 315h1v1h-1zM661 315h1v1h-1zM686 315h1v1h-1zM710 315h1v1h-1zM735 315h1v1h-1zM760 315h1v1h-1zM785 315h1v1h-1zM809 315h1v1h-1zM834 315h1v1h-1zM859 315h1v1h-1zM884 315h1v1h-1zM908 315h1v1h-1zM933 315h1v1h-1zM958 315h1v1h-1zM983 315h1v1h-1zM1007 315h1v1h-1zM1032 315h1v1h-1zM1057 315h1v1h-1zM1082 315h1v1h-1zM1106 315h1v1h-1zM1131 315h1v1h-1zM1156 315h1v1h-1zM1181 315h1v1h-1zM1205 315h1v1h-1zM1230 315h1v1h-1zM1255 315h1v1h-1zM1280 315h1v1h-1zM1305 315h1v1h-1zM1329 315h1v1h-1zM1354 315h1v1h-1zM42 340h1v1h-1zM67 340h1v1h-1zM92 340h1v1h-1zM116 340h1v1h-1zM141 340h1v1h-1zM166 340h1v1h-1zM191 340h1v1h-1zM215 340h1v1h-1zM240 340h1v1h-1zM265 340h1v1h-1zM290 340h1v1h-1zM314 340h1v1h-1zM339 340h1v1h-1zM364 340h1v1h-1zM389 340h1v1h-1zM413 340h1v1h-1zM438 340h1v1h-1zM463 340h1v1h-1zM488 340h1v1h-1zM512 340h1v1h-1zM537 340h1v1h-1zM562 340h1v1h-1zM587 340h1v1h-1zM611 340h1v1h-1zM636 340h1v1h-1zM661 340h1v1h-1zM686 340h1v1h-1zM710 340h1v1h-1zM735 340h1v1h-1zM760 340h1v1h-1zM785 340h1v1h-1zM809 340h1v1h-1zM834 340h1v1h-1zM859 340h1v1h-1zM884 340h1v1h-1zM908 340h1v1h-1zM933 340h1v1h-1zM958 340h1v1h-1zM983 340h1v1h-1zM1007 340h1v1h-1zM1032 340h1v1h-1zM1057 340h1v1h-1zM1082 340h1v1h-1zM1106 340h1v1h-1zM1131 340h1v1h-1zM1156 340h1v1h-1zM1181 340h1v1h-1zM1205 340h1v1h-1zM1230 340h1v1h-1zM1255 340h1v1h-1zM1280 340h1v1h-1zM1305 340h1v1h-1zM1329 340h1v1h-1zM1354 340h1v1h-1zM42 365h1v1h-1zM67 365h1v1h-1zM92 365h1v1h-1zM116 365h1v1h-1zM141 365h1v1h-1zM166 365h1v1h-1zM191 365h1v1h-1zM215 365h1v1h-1zM240 365h1v1h-1zM265 365h1v1h-1zM290 365h1v1h-1zM314 365h1v1h-1zM339 365h1v1h-1zM364 365h1v1h-1zM389 365h1v1h-1zM413 365h1v1h-1zM438 365h1v1h-1zM463 365h1v1h-1zM488 365h1v1h-1zM512 365h1v1h-1zM537 365h1v1h-1zM562 365h1v1h-1zM587 365h1v1h-1zM611 365h1v1h-1zM636 365h1v1h-1zM661 365h1v1h-1zM686 365h1v1h-1zM710 365h1v1h-1zM735 365h1v1h-1zM760 365h1v1h-1zM785 365h1v1h-1zM809 365h1v1h-1zM834 365h1v1h-1zM859 365h1v1h-1zM884 365h1v1h-1zM908 365h1v1h-1zM933 365h1v1h-1zM958 365h1v1h-1zM983 365h1v1h-1zM1007 365h1v1h-1zM1032 365h1v1h-1zM1057 365h1v1h-1zM1082 365h1v1h-1zM1106 365h1v1h-1zM1131 365h1v1h-1zM1156 365h1v1h-1zM1181 365h1v1h-1zM1205 365h1v1h-1zM1230 365h1v1h-1zM1255 365h1v1h-1zM1280 365h1v1h-1zM1305 365h1v1h-1zM1329 365h1v1h-1zM1354 365h1v1h-1zM42 389h1v1h-1zM67 389h1v1h-1zM92 389h1v1h-1zM116 389h1v1h-1zM141 389h1v1h-1zM166 389h1v1h-1zM191 389h1v1h-1zM215 389h1v1h-1zM240 389h1v1h-1zM265 389h1v1h-1zM290 389h1v1h-1zM314 389h1v1h-1zM339 389h1v1h-1zM364 389h1v1h-1zM389 389h1v1h-1zM413 389h1v1h-1zM438 389h1v1h-1zM463 389h1v1h-1zM488 389h1v1h-1zM512 389h1v1h-1zM537 389h1v1h-1zM562 389h1v1h-1zM587 389h1v1h-1zM611 389h1v1h-1zM636 389h1v1h-1zM661 389h1v1h-1zM686 389h1v1h-1zM710 389h1v1h-1zM735 389h1v1h-1zM760 389h1v1h-1zM785 389h1v1h-1zM809 389h1v1h-1zM834 389h1v1h-1zM859 389h1v1h-1zM884 389h1v1h-1zM908 389h1v1h-1zM933 389h1v1h-1zM958 389h1v1h-1zM983 389h1v1h-1zM1007 389h1v1h-1zM1032 389h1v1h-1zM1057 389h1v1h-1zM1082 389h1v1h-1zM1106 389h1v1h-1zM1131 389h1v1h-1zM1156 389h1v1h-1zM1181 389h1v1h-1zM1205 389h1v1h-1zM1230 389h1v1h-1zM1255 389h1v1h-1zM1280 389h1v1h-1zM1305 389h1v1h-1zM1329 389h1v1h-1zM1354 389h1v1h-1zM42 414h1v1h-1zM67 414h1v1h-1zM92 414h1v1h-1zM116 414h1v1h-1zM141 414h1v1h-1zM166 414h1v1h-1zM191 414h1v1h-1zM215 414h1v1h-1zM240 414h1v1h-1zM265 414h1v1h-1zM290 414h1v1h-1zM314 414h1v1h-1zM339 414h1v1h-1zM364 414h1v1h-1zM389 414h1v1h-1zM413 414h1v1h-1zM438 414h1v1h-1zM463 414h1v1h-1zM488 414h1v1h-1zM512 414h1v1h-1zM537 414h1v1h-1zM562 414h1v1h-1zM587 414h1v1h-1zM611 414h1v1h-1zM636 414h1v1h-1zM661 414h1v1h-1zM686 414h1v1h-1zM710 414h1v1h-1zM735 414h1v1h-1zM760 414h1v1h-1zM785 414h1v1h-1zM809 414h1v1h-1zM834 414h1v1h-1zM859 414h1v1h-1zM884 414h1v1h-1zM908 414h1v1h-1zM933 414h1v1h-1zM958 414h1v1h-1zM983 414h1v1h-1zM1007 414h1v1h-1zM1032 414h1v1h-1zM1057 414h1v1h-1zM1082 414h1v1h-1zM1106 414h1v1h-1zM1131 414h1v1h-1zM1156 414h1v1h-1zM1181 414h1v1h-1zM1205 414h1v1h-1zM1230 414h1v1h-1zM1255 414h1v1h-1zM1280 414h1v1h-1zM1305 414h1v1h-1zM1329 414h1v1h-1zM1354 414h1v1h-1zM42 439h1v1h-1zM67 439h1v1h-1zM92 439h1v1h-1zM116 439h1v1h-1zM141 439h1v1h-1zM166 439h1v1h-1zM191 439h1v1h-1zM215 439h1v1h-1zM240 439h1v1h-1zM265 439h1v1h-1zM290 439h1v1h-1zM314 439h1v1h-1zM339 439h1v1h-1zM364 439h1v1h-1zM389 439h1v1h-1zM413 439h1v1h-1zM438 439h1v1h-1zM463 439h1v1h-1zM488 439h1v1h-1zM512 439h1v1h-1zM537 439h1v1h-1zM562 439h1v1h-1zM587 439h1v1h-1zM611 439h1v1h-1zM636 439h1v1h-1zM661 439h1v1h-1zM686 439h1v1h-1zM710 439h1v1h-1zM735 439h1v1h-1zM760 439h1v1h-1zM785 439h1v1h-1zM809 439h1v1h-1zM834 439h1v1h-1zM859 439h1v1h-1zM884 439h1v1h-1zM908 439h1v1h-1zM933 439h1v1h-1zM958 439h1v1h-1zM983 439h1v1h-1zM1007 439h1v1h-1zM1032 439h1v1h-1zM1057 439h1v1h-1zM1082 439h1v1h-1zM1106 439h1v1h-1zM1131 439h1v1h-1zM1156 439h1v1h-1zM1181 439h1v1h-1zM1205 439h1v1h-1zM1230 439h1v1h-1zM1255 439h1v1h-1zM1280 439h1v1h-1zM1305 439h1v1h-1zM1329 439h1v1h-1zM1354 439h1v1h-1zM42 464h1v1h-1zM67 464h1v1h-1zM92 464h1v1h-1zM116 464h1v1h-1zM141 464h1v1h-1zM166 464h1v1h-1zM191 464h1v1h-1zM215 464h1v1h-1zM240 464h1v1h-1zM265 464h1v1h-1zM290 464h1v1h-1zM314 464h1v1h-1zM339 464h1v1h-1zM364 464h1v1h-1zM389 464h1v1h-1zM413 464h1v1h-1zM438 464h1v1h-1zM463 464h1v1h-1zM488 464h1v1h-1zM512 464h1v1h-1zM537 464h1v1h-1zM562 464h1v1h-1zM587 464h1v1h-1zM611 464h1v1h-1zM636 464h1v1h-1zM661 464h1v1h-1zM686 464h1v1h-1zM710 464h1v1h-1zM735 464h1v1h-1zM760 464h1v1h-1zM785 464h1v1h-1zM809 464h1v1h-1zM834 464h1v1h-1zM859 464h1v1h-1zM884 464h1v1h-1zM908 464h1v1h-1zM933 464h1v1h-1zM958 464h1v1h-1zM983 464h1v1h-1zM1007 464h1v1h-1zM1032 464h1v1h-1zM1057 464h1v1h-1zM1082 464h1v1h-1zM1106 464h1v1h-1zM1131 464h1v1h-1zM1156 464h1v1h-1zM1181 464h1v1h-1zM1205 464h1v1h-1zM1230 464h1v1h-1zM1255 464h1v1h-1zM1280 464h1v1h-1zM1305 464h1v1h-1zM1329 464h1v1h-1zM1354 464h1v1h-1zM42 488h1v1h-1zM67 488h1v1h-1zM92 488h1v1h-1zM116 488h1v1h-1zM141 488h1v1h-1zM166 488h1v1h-1zM191 488h1v1h-1zM215 488h1v1h-1zM240 488h1v1h-1zM265 488h1v1h-1zM290 488h1v1h-1zM314 488h1v1h-1zM339 488h1v1h-1zM364 488h1v1h-1zM389 488h1v1h-1zM413 488h1v1h-1zM438 488h1v1h-1zM463 488h1v1h-1zM488 488h1v1h-1zM512 488h1v1h-1zM537 488h1v1h-1zM562 488h1v1h-1zM587 488h1v1h-1zM611 488h1v1h-1zM636 488h1v1h-1zM661 488h1v1h-1zM686 488h1v1h-1zM710 488h1v1h-1zM735 488h1v1h-1zM760 488h1v1h-1zM785 488h1v1h-1zM809 488h1v1h-1zM834 488h1v1h-1zM859 488h1v1h-1zM884 488h1v1h-1zM908 488h1v1h-1zM933 488h1v1h-1zM958 488h1v1h-1zM983 488h1v1h-1zM1007 488h1v1h-1zM1032 488h1v1h-1zM1057 488h1v1h-1zM1082 488h1v1h-1zM1106 488h1v1h-1zM1131 488h1v1h-1zM1156 488h1v1h-1zM1181 488h1v1h-1zM1205 488h1v1h-1zM1230 488h1v1h-1zM1255 488h1v1h-1zM1280 488h1v1h-1zM1305 488h1v1h-1zM1329 488h1v1h-1zM1354 488h1v1h-1zM42 513h1v1h-1zM67 513h1v1h-1zM92 513h1v1h-1zM116 513h1v1h-1zM141 513h1v1h-1zM166 513h1v1h-1zM191 513h1v1h-1zM215 513h1v1h-1zM240 513h1v1h-1zM265 513h1v1h-1zM290 513h1v1h-1zM314 513h1v1h-1zM339 513h1v1h-1zM364 513h1v1h-1zM389 513h1v1h-1zM413 513h1v1h-1zM438 513h1v1h-1zM463 513h1v1h-1zM488 513h1v1h-1zM512 513h1v1h-1zM537 513h1v1h-1zM562 513h1v1h-1zM587 513h1v1h-1zM611 513h1v1h-1zM636 513h1v1h-1zM661 513h1v1h-1zM686 513h1v1h-1zM710 513h1v1h-1zM735 513h1v1h-1zM760 513h1v1h-1zM785 513h1v1h-1zM809 513h1v1h-1zM834 513h1v1h-1zM859 513h1v1h-1zM884 513h1v1h-1zM908 513h1v1h-1zM933 513h1v1h-1zM958 513h1v1h-1zM983 513h1v1h-1zM1007 513h1v1h-1zM1032 513h1v1h-1zM1057 513h1v1h-1zM1082 513h1v1h-1zM1106 513h1v1h-1zM1131 513h1v1h-1zM1156 513h1v1h-1zM1181 513h1v1h-1zM1205 513h1v1h-1zM1230 513h1v1h-1zM1255 513h1v1h-1zM1280 513h1v1h-1zM1305 513h1v1h-1zM1329 513h1v1h-1zM1354 513h1v1h-1zM42 538h1v1h-1zM67 538h1v1h-1zM92 538h1v1h-1zM116 538h1v1h-1zM141 538h1v1h-1zM166 538h1v1h-1zM191 538h1v1h-1zM215 538h1v1h-1zM240 538h1v1h-1zM265 538h1v1h-1zM290 538h1v1h-1zM314 538h1v1h-1zM339 538h1v1h-1zM364 538h1v1h-1zM389 538h1v1h-1zM413 538h1v1h-1zM438 538h1v1h-1zM463 538h1v1h-1zM488 538h1v1h-1zM512 538h1v1h-1zM537 538h1v1h-1zM562 538h1v1h-1zM587 538h1v1h-1zM611 538h1v1h-1zM636 538h1v1h-1zM661 538h1v1h-1zM686 538h1v1h-1zM710 538h1v1h-1zM735 538h1v1h-1zM760 538h1v1h-1zM785 538h1v1h-1zM809 538h1v1h-1zM834 538h1v1h-1zM859 538h1v1h-1zM884 538h1v1h-1zM908 538h1v1h-1zM933 538h1v1h-1zM958 538h1v1h-1zM983 538h1v1h-1zM1007 538h1v1h-1zM1032 538h1v1h-1zM1057 538h1v1h-1zM1082 538h1v1h-1zM1106 538h1v1h-1zM1131 538h1v1h-1zM1156 538h1v1h-1zM1181 538h1v1h-1zM1205 538h1v1h-1zM1230 538h1v1h-1zM1255 538h1v1h-1zM1280 538h1v1h-1zM1305 538h1v1h-1zM1329 538h1v1h-1zM1354 538h1v1h-1zM42 563h1v1h-1zM67 563h1v1h-1zM92 563h1v1h-1zM116 563h1v1h-1zM141 563h1v1h-1zM166 563h1v1h-1zM191 563h1v1h-1zM215 563h1v1h-1zM240 563h1v1h-1zM265 563h1v1h-1zM290 563h1v1h-1zM314 563h1v1h-1zM339 563h1v1h-1zM364 563h1v1h-1zM389 563h1v1h-1zM413 563h1v1h-1zM438 563h1v1h-1zM463 563h1v1h-1zM488 563h1v1h-1zM512 563h1v1h-1zM537 563h1v1h-1zM562 563h1v1h-1zM587 563h1v1h-1zM611 563h1v1h-1zM636 563h1v1h-1zM661 563h1v1h-1zM686 563h1v1h-1zM710 563h1v1h-1zM735 563h1v1h-1zM760 563h1v1h-1zM785 563h1v1h-1zM809 563h1v1h-1zM834 563h1v1h-1zM859 563h1v1h-1zM884 563h1v1h-1zM908 563h1v1h-1zM933 563h1v1h-1zM958 563h1v1h-1zM983 563h1v1h-1zM1007 563h1v1h-1zM1032 563h1v1h-1zM1057 563h1v1h-1zM1082 563h1v1h-1zM1106 563h1v1h-1zM1131 563h1v1h-1zM1156 563h1v1h-1zM1181 563h1v1h-1zM1205 563h1v1h-1zM1230 563h1v1h-1zM1255 563h1v1h-1zM1280 563h1v1h-1zM1305 563h1v1h-1zM1329 563h1v1h-1zM1354 563h1v1h-1zM42 587h1v1h-1zM67 587h1v1h-1zM92 587h1v1h-1zM116 587h1v1h-1zM141 587h1v1h-1zM166 587h1v1h-1zM191 587h1v1h-1zM215 587h1v1h-1zM240 587h1v1h-1zM265 587h1v1h-1zM290 587h1v1h-1zM314 587h1v1h-1zM339 587h1v1h-1zM364 587h1v1h-1zM389 587h1v1h-1zM413 587h1v1h-1zM438 587h1v1h-1zM463 587h1v1h-1zM488 587h1v1h-1zM512 587h1v1h-1zM537 587h1v1h-1zM562 587h1v1h-1zM587 587h1v1h-1zM611 587h1v1h-1zM636 587h1v1h-1zM661 587h1v1h-1zM686 587h1v1h-1zM710 587h1v1h-1zM735 587h1v1h-1zM760 587h1v1h-1zM785 587h1v1h-1zM809 587h1v1h-1zM834 587h1v1h-1zM859 587h1v1h-1zM884 587h1v1h-1zM908 587h1v1h-1zM933 587h1v1h-1zM958 587h1v1h-1zM983 587h1v1h-1zM1007 587h1v1h-1zM1032 587h1v1h-1zM1057 587h1v1h-1zM1082 587h1v1h-1zM1106 587h1v1h-1zM1131 587h1v1h-1zM1156 587h1v1h-1zM1181 587h1v1h-1zM1205 587h1v1h-1zM1230 587h1v1h-1zM1255 587h1v1h-1zM1280 587h1v1h-1zM1305 587h1v1h-1zM1329 587h1v1h-1zM1354 587h1v1h-1zM42 612h1v1h-1zM67 612h1v1h-1zM92 612h1v1h-1zM116 612h1v1h-1zM141 612h1v1h-1zM166 612h1v1h-1zM191 612h1v1h-1zM215 612h1v1h-1zM240 612h1v1h-1zM265 612h1v1h-1zM290 612h1v1h-1zM314 612h1v1h-1zM339 612h1v1h-1zM364 612h1v1h-1zM389 612h1v1h-1zM413 612h1v1h-1zM438 612h1v1h-1zM463 612h1v1h-1zM488 612h1v1h-1zM512 612h1v1h-1zM537 612h1v1h-1zM562 612h1v1h-1zM587 612h1v1h-1zM611 612h1v1h-1zM636 612h1v1h-1zM661 612h1v1h-1zM686 612h1v1h-1zM710 612h1v1h-1zM735 612h1v1h-1zM760 612h1v1h-1zM785 612h1v1h-1zM809 612h1v1h-1zM834 612h1v1h-1zM859 612h1v1h-1zM884 612h1v1h-1zM908 612h1v1h-1zM933 612h1v1h-1zM958 612h1v1h-1zM983 612h1v1h-1zM1007 612h1v1h-1zM1032 612h1v1h-1zM1057 612h1v1h-1zM1082 612h1v1h-1zM1106 612h1v1h-1zM1131 612h1v1h-1zM1156 612h1v1h-1zM1181 612h1v1h-1zM1205 612h1v1h-1zM1230 612h1v1h-1zM1255 612h1v1h-1zM1280 612h1v1h-1zM1305 612h1v1h-1zM1329 612h1v1h-1zM1354 612h1v1h-1zM42 637h1v1h-1zM67 637h1v1h-1zM92 637h1v1h-1zM116 637h1v1h-1zM141 637h1v1h-1zM166 637h1v1h-1zM191 637h1v1h-1zM215 637h1v1h-1zM240 637h1v1h-1zM265 637h1v1h-1zM290 637h1v1h-1zM314 637h1v1h-1zM339 637h1v1h-1zM364 637h1v1h-1zM389 637h1v1h-1zM413 637h1v1h-1zM438 637h1v1h-1zM463 637h1v1h-1zM488 637h1v1h-1zM512 637h1v1h-1zM537 637h1v1h-1zM562 637h1v1h-1zM587 637h1v1h-1zM611 637h1v1h-1zM636 637h1v1h-1zM661 637h1v1h-1zM686 637h1v1h-1zM710 637h1v1h-1zM735 637h1v1h-1zM760 637h1v1h-1zM785 637h1v1h-1zM809 637h1v1h-1zM834 637h1v1h-1zM859 637h1v1h-1zM884 637h1v1h-1zM908 637h1v1h-1zM933 637h1v1h-1zM958 637h1v1h-1zM983 637h1v1h-1zM1007 637h1v1h-1zM1032 637h1v1h-1zM1057 637h1v1h-1zM1082 637h1v1h-1zM1106 637h1v1h-1zM1131 637h1v1h-1zM1156 637h1v1h-1zM1181 637h1v1h-1zM1205 637h1v1h-1zM1230 637h1v1h-1zM1255 637h1v1h-1zM1280 637h1v1h-1zM1305 637h1v1h-1zM1329 637h1v1h-1zM1354 637h1v1h-1zM42 662h1v1h-1zM67 662h1v1h-1zM92 662h1v1h-1zM116 662h1v1h-1zM141 662h1v1h-1zM166 662h1v1h-1zM191 662h1v1h-1zM215 662h1v1h-1zM240 662h1v1h-1zM265 662h1v1h-1zM290 662h1v1h-1zM314 662h1v1h-1zM339 662h1v1h-1zM364 662h1v1h-1zM389 662h1v1h-1zM413 662h1v1h-1zM438 662h1v1h-1zM463 662h1v1h-1zM488 662h1v1h-1zM512 662h1v1h-1zM537 662h1v1h-1zM562 662h1v1h-1zM587 662h1v1h-1zM611 662h1v1h-1zM636 662h1v1h-1zM661 662h1v1h-1zM686 662h1v1h-1zM710 662h1v1h-1zM735 662h1v1h-1zM760 662h1v1h-1zM785 662h1v1h-1zM809 662h1v1h-1zM834 662h1v1h-1zM859 662h1v1h-1zM884 662h1v1h-1zM908 662h1v1h-1zM933 662h1v1h-1zM958 662h1v1h-1zM983 662h1v1h-1zM1007 662h1v1h-1zM1032 662h1v1h-1zM1057 662h1v1h-1zM1082 662h1v1h-1zM1106 662h1v1h-1zM1131 662h1v1h-1zM1156 662h1v1h-1zM1181 662h1v1h-1zM1205 662h1v1h-1zM1230 662h1v1h-1zM1255 662h1v1h-1zM1280 662h1v1h-1zM1305 662h1v1h-1zM1329 662h1v1h-1zM1354 662h1v1h-1zM42 686h1v1h-1zM67 686h1v1h-1zM92 686h1v1h-1zM116 686h1v1h-1zM141 686h1v1h-1zM166 686h1v1h-1zM191 686h1v1h-1zM215 686h1v1h-1zM240 686h1v1h-1zM265 686h1v1h-1zM290 686h1v1h-1zM314 686h1v1h-1zM339 686h1v1h-1zM364 686h1v1h-1zM389 686h1v1h-1zM413 686h1v1h-1zM438 686h1v1h-1zM463 686h1v1h-1zM488 686h1v1h-1zM512 686h1v1h-1zM537 686h1v1h-1zM562 686h1v1h-1zM587 686h1v1h-1zM611 686h1v1h-1zM636 686h1v1h-1zM661 686h1v1h-1zM686 686h1v1h-1zM710 686h1v1h-1zM735 686h1v1h-1zM760 686h1v1h-1zM785 686h1v1h-1zM809 686h1v1h-1zM834 686h1v1h-1zM859 686h1v1h-1zM884 686h1v1h-1zM908 686h1v1h-1zM933 686h1v1h-1zM958 686h1v1h-1zM983 686h1v1h-1zM1007 686h1v1h-1zM1032 686h1v1h-1zM1057 686h1v1h-1zM1082 686h1v1h-1zM1106 686h1v1h-1zM1131 686h1v1h-1zM1156 686h1v1h-1zM1181 686h1v1h-1zM1205 686h1v1h-1zM1230 686h1v1h-1zM1255 686h1v1h-1zM1280 686h1v1h-1zM1305 686h1v1h-1zM1329 686h1v1h-1zM1354 686h1v1h-1zM42 711h1v1h-1zM67 711h1v1h-1zM92 711h1v1h-1zM116 711h1v1h-1zM141 711h1v1h-1zM166 711h1v1h-1zM191 711h1v1h-1zM215 711h1v1h-1zM240 711h1v1h-1zM265 711h1v1h-1zM290 711h1v1h-1zM314 711h1v1h-1zM339 711h1v1h-1zM364 711h1v1h-1zM389 711h1v1h-1zM413 711h1v1h-1zM438 711h1v1h-1zM463 711h1v1h-1zM488 711h1v1h-1zM512 711h1v1h-1zM537 711h1v1h-1zM562 711h1v1h-1zM587 711h1v1h-1zM611 711h1v1h-1zM636 711h1v1h-1zM661 711h1v1h-1zM686 711h1v1h-1zM710 711h1v1h-1zM735 711h1v1h-1zM760 711h1v1h-1zM785 711h1v1h-1zM809 711h1v1h-1zM834 711h1v1h-1zM859 711h1v1h-1zM884 711h1v1h-1zM908 711h1v1h-1zM933 711h1v1h-1zM958 711h1v1h-1zM983 711h1v1h-1zM1007 711h1v1h-1zM1032 711h1v1h-1zM1057 711h1v1h-1zM1082 711h1v1h-1zM1106 711h1v1h-1zM1131 711h1v1h-1zM1156 711h1v1h-1zM1181 711h1v1h-1zM1205 711h1v1h-1zM1230 711h1v1h-1zM1255 711h1v1h-1zM1280 711h1v1h-1zM1305 711h1v1h-1zM1329 711h1v1h-1zM1354 711h1v1h-1zM42 736h1v1h-1zM67 736h1v1h-1zM92 736h1v1h-1zM116 736h1v1h-1zM141 736h1v1h-1zM166 736h1v1h-1zM191 736h1v1h-1zM215 736h1v1h-1zM240 736h1v1h-1zM265 736h1v1h-1zM290 736h1v1h-1zM314 736h1v1h-1zM339 736h1v1h-1zM364 736h1v1h-1zM389 736h1v1h-1zM413 736h1v1h-1zM438 736h1v1h-1zM463 736h1v1h-1zM488 736h1v1h-1zM512 736h1v1h-1zM537 736h1v1h-1zM562 736h1v1h-1zM587 736h1v1h-1zM611 736h1v1h-1zM636 736h1v1h-1zM661 736h1v1h-1zM686 736h1v1h-1zM710 736h1v1h-1zM735 736h1v1h-1zM760 736h1v1h-1zM785 736h1v1h-1zM809 736h1v1h-1zM834 736h1v1h-1zM859 736h1v1h-1zM884 736h1v1h-1zM908 736h1v1h-1zM933 736h1v1h-1zM958 736h1v1h-1zM983 736h1v1h-1zM1007 736h1v1h-1zM1032 736h1v1h-1zM1057 736h1v1h-1zM1082 736h1v1h-1zM1106 736h1v1h-1zM1131 736h1v1h-1zM1156 736h1v1h-1zM1181 736h1v1h-1zM1205 736h1v1h-1zM1230 736h1v1h-1zM1255 736h1v1h-1zM1280 736h1v1h-1zM1305 736h1v1h-1zM1329 736h1v1h-1zM1354 736h1v1h-1zM42 761h1v1h-1zM67 761h1v1h-1zM92 761h1v1h-1zM116 761h1v1h-1zM141 761h1v1h-1zM166 761h1v1h-1zM191 761h1v1h-1zM215 761h1v1h-1zM240 761h1v1h-1zM265 761h1v1h-1zM290 761h1v1h-1zM314 761h1v1h-1zM339 761h1v1h-1zM364 761h1v1h-1zM389 761h1v1h-1zM413 761h1v1h-1zM438 761h1v1h-1zM463 761h1v1h-1zM488 761h1v1h-1zM512 761h1v1h-1zM537 761h1v1h-1zM562 761h1v1h-1zM587 761h1v1h-1zM611 761h1v1h-1zM636 761h1v1h-1zM661 761h1v1h-1zM686 761h1v1h-1zM710 761h1v1h-1zM735 761h1v1h-1zM760 761h1v1h-1zM785 761h1v1h-1zM809 761h1v1h-1zM834 761h1v1h-1zM859 761h1v1h-1zM884 761h1v1h-1zM908 761h1v1h-1zM933 761h1v1h-1zM958 761h1v1h-1zM983 761h1v1h-1zM1007 761h1v1h-1zM1032 761h1v1h-1zM1057 761h1v1h-1zM1082 761h1v1h-1zM1106 761h1v1h-1zM1131 761h1v1h-1zM1156 761h1v1h-1zM1181 761h1v1h-1zM1205 761h1v1h-1zM1230 761h1v1h-1zM1255 761h1v1h-1zM1280 761h1v1h-1zM1305 761h1v1h-1zM1329 761h1v1h-1zM1354 761h1v1h-1zM42 785h1v1h-1zM67 785h1v1h-1zM92 785h1v1h-1zM116 785h1v1h-1zM141 785h1v1h-1zM166 785h1v1h-1zM191 785h1v1h-1zM215 785h1v1h-1zM240 785h1v1h-1zM265 785h1v1h-1zM290 785h1v1h-1zM314 785h1v1h-1zM339 785h1v1h-1zM364 785h1v1h-1zM389 785h1v1h-1zM413 785h1v1h-1zM438 785h1v1h-1zM463 785h1v1h-1zM488 785h1v1h-1zM512 785h1v1h-1zM537 785h1v1h-1zM562 785h1v1h-1zM587 785h1v1h-1zM611 785h1v1h-1zM636 785h1v1h-1zM661 785h1v1h-1zM686 785h1v1h-1zM710 785h1v1h-1zM735 785h1v1h-1zM760 785h1v1h-1zM785 785h1v1h-1zM809 785h1v1h-1zM834 785h1v1h-1zM859 785h1v1h-1zM884 785h1v1h-1zM908 785h1v1h-1zM933 785h1v1h-1zM958 785h1v1h-1zM983 785h1v1h-1zM1007 785h1v1h-1zM1032 785h1v1h-1zM1057 785h1v1h-1zM1082 785h1v1h-1zM1106 785h1v1h-1zM1131 785h1v1h-1zM1156 785h1v1h-1zM1181 785h1v1h-1zM1205 785h1v1h-1zM1230 785h1v1h-1zM1255 785h1v1h-1zM1280 785h1v1h-1zM1305 785h1v1h-1zM1329 785h1v1h-1zM1354 785h1v1h-1zM42 810h1v1h-1zM67 810h1v1h-1zM92 810h1v1h-1zM116 810h1v1h-1zM141 810h1v1h-1zM166 810h1v1h-1zM191 810h1v1h-1zM215 810h1v1h-1zM240 810h1v1h-1zM265 810h1v1h-1zM290 810h1v1h-1zM314 810h1v1h-1zM339 810h1v1h-1zM364 810h1v1h-1zM389 810h1v1h-1zM413 810h1v1h-1zM438 810h1v1h-1zM463 810h1v1h-1zM488 810h1v1h-1zM512 810h1v1h-1zM537 810h1v1h-1zM562 810h1v1h-1zM587 810h1v1h-1zM611 810h1v1h-1zM636 810h1v1h-1zM661 810h1v1h-1zM686 810h1v1h-1zM710 810h1v1h-1zM735 810h1v1h-1zM760 810h1v1h-1zM785 810h1v1h-1zM809 810h1v1h-1zM834 810h1v1h-1zM859 810h1v1h-1zM884 810h1v1h-1zM908 810h1v1h-1zM933 810h1v1h-1zM958 810h1v1h-1zM983 810h1v1h-1zM1007 810h1v1h-1zM1032 810h1v1h-1zM1057 810h1v1h-1zM1082 810h1v1h-1zM1106 810h1v1h-1zM1131 810h1v1h-1zM1156 810h1v1h-1zM1181 810h1v1h-1zM1205 810h1v1h-1zM1230 810h1v1h-1zM1255 810h1v1h-1zM1280 810h1v1h-1zM1305 810h1v1h-1zM1329 810h1v1h-1zM1354 810h1v1h-1z"/>
<rect x="317" y="286" width="897" height="335" fill="none" stroke="#840000" stroke-width="1" />
<path d="M317 298l12 -10M317 309l12 -10M317 320l12 -10M317 331l12 -10M317 342l12 -10M317 353l12 -10M317 364l12 -10M317 375l12 -10M317 386l12 -10M317 397l12 -10M317 408l12 -10M317 419l12 -10M317 430l12 -10M317 441l12 -10M317 452l12 -10M317 463l12 -10M317 474l12 -10M317 485l12 -10M317 496l12 -10M317 507l12 -10M317 518l12 -10M317 529l12 -10M317 540l12 -10M317 551l12 -10M317 562l12 -10M317 573l12 -10M317 584l12 -10M317 595l12 -10M317 606l12 -10M317 617l12 -10M322 297l12 -10M322 621l12 -10M344 297l12 -10M344 621l12 -10M366 297l12 -10M366 621l12 -10M388 297l12 -10M388 621l12 -10M410 297l12 -10M410 621l12 -10M432 297l12 -10M432 621l12 -10M454 297l12 -10M454 621l12 -10M476 297l12 -10M476 621l12 -10M498 297l12 -10M498 621l12 -10M520 297l12 -10M520 621l12 -10M542 297l12 -10M542 621l12 -10M564 297l12 -10M564 621l12 -10M586 297l12 -10M586 621l12 -10M608 297l12 -10M608 621l12 -10M630 297l12 -10M630 621l12 -10M652 297l12 -10M652 621l12 -10M674 297l12 -10M674 621l12 -10M696 297l12 -10M696 621l12 -10M718 297l12 -10M718 621l12 -10M740 297l12 -10M740 621l12 -10M762 297l12 -10M762 621l12 -10M784 297l12 -10M784 621l12 -10M806 297l12 -10M806 621l12 -10M828 297l12 -10M828 621l12 -10M850 297l12 -10M850 621l12 -10M872 297l12 -10M872 621l12 -10M894 297l12 -10M894 621l12 -10M916 297l12 -10M916 621l12 -10M938 297l12 -10M938 621l12 -10M960 297l12 -10M960 621l12 -10M982 297l12 -10M982 621l12 -10M1004 297l12 -10M1004 621l12 -10M1026 297l12 -10M1026 621l12 -10M1048 297l12 -10M1048 621l12 -10M1070 297l12 -10M1070 621l12 -10M1092 297l12 -10M1092 621l12 -10M1114 297l12 -10M1114 621l12 -10M1136 297l12 -10M1136 621l12 -10M1158 297l12 -10M1158 621l12 -10M1180 297l12 -10M1180 621l12 -10M1201 298l12 -10M1201 309l12 -10M1201 320l12 -10M1201 331l12 -10M1201 342l12 -10M1201 353l12 -10M1201 364l12 -10M1201 375l12 -10M1201 386l12 -10M1201 397l12 -10M1201 408l12 -10M1201 419l12 -10M1201 430l12 -10M1201 441l12 -10M1201 452l12 -10M1201 463l12 -10M1201 474l12 -10M1201 485l12 -10M1201 496l12 -10M1201 507l12 -10M1201 518l12 -10M1201 529l12 -10M1201 540l12 -10M1201 551l12 -10M1201 562l12 -10M1201 573l12 -10M1201 584l12 -10M1201 595l12 -10M1201 606l12 -10M1201 617l12 -10" stroke="#840000" stroke-width="1" fill="none"/>
<path d="M1174 296l11 8M1174 307l11 8M1174 318l11 8M1174 329l11 8M1174 340l11 8M1174 351l11 8M1174 362l11 8M1174 373l11 8M1174 384l11 8M1174 395l11 8M1174 406l11 8M1174 417l11 8M1174 428l11 8M1174 439l11 8M1174 450l11 8M1174 461l11 8M1174 472l11 8M1174 483l11 8M1174 494l11 8M1174 505l11 8M1174 516l11 8M1174 527l11 8M1174 538l11 8M1174 549l11 8M1174 560l11 8M1174 571l11 8M1174 582l11 8M1174 593l11 8M1174 604l11 8M330 288l11 8M330 612l11 8M352 288l11 8M352 612l11 8M374 288l11 8M374 612l11 8M396 288l11 8M396 612l11 8M418 288l11 8M418 612l11 8M440 288l11 8M440 612l11 8M462 288l11 8M462 612l11 8M484 288l11 8M484 612l11 8M506 288l11 8M506 612l11 8M528 288l11 8M528 612l11 8M550 288l11 8M550 612l11 8M572 288l11 8M572 612l11 8M594 288l11 8M594 612l11 8M616 288l11 8M616 612l11 8M638 288l11 8M638 612l11 8M660 288l11 8M660 612l11 8M682 288l11 8M682 612l11 8M704 288l11 8M704 612l11 8M726 288l11 8M726 612l11 8M748 288l11 8M748 612l11 8M770 288l11 8M770 612l11 8M792 288l11 8M792 612l11 8M814 288l11 8M814 612l11 8M836 288l11 8M836 612l11 8M858 288l11 8M858 612l11 8M880 288l11 8M880 612l11 8M902 288l11 8M902 612l11 8M924 288l11 8M924 612l11 8M946 288l11 8M946 612l11 8M968 288l11 8M968 612l11 8M990 288l11 8M990 612l11 8M1012 288l11 8M1012 612l11 8M1034 288l11 8M1034 612l11 8M1056 288l11 8M1056 612l11 8M1078 288l11 8M1078 612l11 8M1100 288l11 8M1100 612l11 8M1122 288l11 8M1122 612l11 8M1144 288l11 8M1144 612l11 8M1166 288l11 8M1166 612l11 8M318 300l11 8M318 311l11 8M318 322l11 8M318 333l11 8M318 344l11 8M318 355l11 8M318 366l11 8M318 377l11 8M318 388l11 8M318 399l11 8M318 410l11 8M318 421l11 8M318 432l11 8M318 443l11 8M318 454l11 8M318 465l11 8M318 476l11 8M318 487l11 8M318 498l11 8M318 509l11 8M318 520l11 8M318 531l11 8M318 542l11 8M318 553l11 8M318 564l11 8M318 575l11 8M318 586l11 8M318 597l11 8M318 608l11 8" stroke="#008400" stroke-width="1" fill="none"/>
<path d="M1186.0 290.0 L1186.0 621.0" stroke="#008400" stroke-width="1.2" fill="none" stroke-linejoin="round" stroke-linecap="round" />
<path d="M497.0 330.0 L1000.0 330.0" stroke="#008400" stroke-width="5" fill="none" stroke-linejoin="round" stroke-linecap="round" />
<path d="M460.0 342.0 L900.0 342.0" stroke="#008400" stroke-width="5" fill="none" stroke-linejoin="round" stroke-linecap="round" />
<path d="M465.0 350.0 L760.0 350.0" stroke="#008400" stroke-width="5" fill="none" stroke-linejoin="round" stroke-linecap="round" />
<path d="M522.0 360.0 L700.0 360.0" stroke="#008400" stroke-width="5" fill="none" stroke-linejoin="round" stroke-linecap="round" />
<path d="M760.0 345.0 L860.0 345.0" stroke="#008400" stroke-width="5" fill="none" stroke-linejoin="round" stroke-linecap="round" />
<path d="M357.0 336.0 L340.0 352.0 L340.0 392.0" stroke="#008400" stroke-width="5" fill="none" stroke-linejoin="round" stroke-linecap="round" />
<path d="M358.0 352.0 L366.0 365.0 L406.0 365.0 L414.0 358.0 L423.0 358.0" stroke="#008400" stroke-width="5" fill="none" stroke-linejoin="round" stroke-linecap="round" />
<path d="M356.0 390.0 L368.0 377.0 L422.0 377.0" stroke="#008400" stroke-width="5" fill="none" stroke-linejoin="round" stroke-linecap="round" />
<path d="M350.0 520.0 L350.0 560.0" stroke="#008400" stroke-width="5" fill="none" stroke-linejoin="round" stroke-linecap="round" />
<path d="M402.0 505.0 L402.0 590.0" stroke="#008400" stroke-width="5" fill="none" stroke-linejoin="round" stroke-linecap="round" />
<path d="M360.0 500.0 L380.0 520.0 L400.0 520.0" stroke="#008400" stroke-width="5" fill="none" stroke-linejoin="round" stroke-linecap="round" />
<path d="M420.0 562.0 L1000.0 562.0" stroke="#008400" stroke-width="5" fill="none" stroke-linejoin="round" stroke-linecap="round" />
<path d="M480.0 571.0 L880.0 571.0" stroke="#008400" stroke-width="5" fill="none" stroke-linejoin="round" stroke-linecap="round" />
<path d="M600.0 578.0 L820.0 578.0" stroke="#008400" stroke-width="5" fill="none" stroke-linejoin="round" stroke-linecap="round" />
<path d="M485.0 430.0 L515.0 455.0 L560.0 455.0 L585.0 480.0" stroke="#008400" stroke-width="5" fill="none" stroke-linejoin="round" stroke-linecap="round" />
<path d="M600.0 380.0 L640.0 420.0" stroke="#008400" stroke-width="5" fill="none" stroke-linejoin="round" stroke-linecap="round" />
<path d="M610.0 450.0 L640.0 472.0 L666.0 472.0 L688.0 490.0 L740.0 490.0" stroke="#008400" stroke-width="5" fill="none" stroke-linejoin="round" stroke-linecap="round" />
<path d="M560.0 439.0 L592.0 472.0" stroke="#008400" stroke-width="5" fill="none" stroke-linejoin="round" stroke-linecap="round" />
<path d="M596.0 466.0 L642.0 474.0 L667.0 480.0 L690.0 503.0" stroke="#008400" stroke-width="5" fill="none" stroke-linejoin="round" stroke-linecap="round" />
<path d="M597.0 470.0 L650.0 403.0" stroke="#008400" stroke-width="5" fill="none" stroke-linejoin="round" stroke-linecap="round" />
<path d="M649.0 433.0 L670.0 415.0" stroke="#008400" stroke-width="5" fill="none" stroke-linejoin="round" stroke-linecap="round" />
<path d="M560.0 421.0 L571.0 432.0 L606.0 432.0" stroke="#008400" stroke-width="5" fill="none" stroke-linejoin="round" stroke-linecap="round" />
<path d="M660.0 410.0 L700.0 450.0 L740.0 450.0" stroke="#008400" stroke-width="5" fill="none" stroke-linejoin="round" stroke-linecap="round" />
<path d="M650.0 495.0 L700.0 540.0 L740.0 540.0" stroke="#008400" stroke-width="5" fill="none" stroke-linejoin="round" stroke-linecap="round" />
<path d="M760.0 500.0 L800.0 540.0 L820.0 540.0" stroke="#008400" stroke-width="5" fill="none" stroke-linejoin="round" stroke-linecap="round" />
<path d="M821.0 486.0 L821.0 572.0" stroke="#008400" stroke-width="5" fill="none" stroke-linejoin="round" stroke-linecap="round" />
<path d="M840.0 452.0 L840.0 562.0" stroke="#008400" stroke-width="5" fill="none" stroke-linejoin="round" stroke-linecap="round" />
<path d="M964.0 480.0 L964.0 584.0" stroke="#008400" stroke-width="5" fill="none" stroke-linejoin="round" stroke-linecap="round" />
<path d="M860.0 430.0 L935.0 430.0 L992.0 430.0" stroke="#008400" stroke-width="5" fill="none" stroke-linejoin="round" stroke-linecap="round" />
<path d="M953.0 331.0 L1078.0 456.0" stroke="#008400" stroke-width="5" fill="none" stroke-linejoin="round" stroke-linecap="round" />
<path d="M941.0 343.0 L1060.0 462.0 L1075.0 477.0" stroke="#008400" stroke-width="5" fill="none" stroke-linejoin="round" stroke-linecap="round" />
<path d="M935.0 443.0 L992.0 443.0" stroke="#008400" stroke-width="5" fill="none" stroke-linejoin="round" stroke-linecap="round" />
<path d="M1001.0 320.0 L1046.0 356.0 L1060.0 370.0 L1110.0 370.0" stroke="#008400" stroke-width="5" fill="none" stroke-linejoin="round" stroke-linecap="round" />
<path d="M1040.0 440.0 L1100.0 500.0 L1150.0 500.0" stroke="#008400" stroke-width="5" fill="none" stroke-linejoin="round" stroke-linecap="round" />
<path d="M1100.0 435.0 L1160.0 435.0" stroke="#008400" stroke-width="5" fill="none" stroke-linejoin="round" stroke-linecap="round" />
<path d="M1056.0 552.0 L1080.0 564.0" stroke="#008400" stroke-width="5" fill="none" stroke-linejoin="round" stroke-linecap="round" />
<path d="M1040.0 520.0 L1060.0 540.0 L1100.0 540.0" stroke="#008400" stroke-width="5" fill="none" stroke-linejoin="round" stroke-linecap="round" />
<path d="M900.0 520.0 L940.0 520.0 L964.0 545.0" stroke="#008400" stroke-width="5" fill="none" stroke-linejoin="round" stroke-linecap="round" />
<path d="M1000.0 560.0 L1030.0 590.0" stroke="#008400" stroke-width="5" fill="none" stroke-linejoin="round" stroke-linecap="round" />
<rect x="842" y="381" width="63" height="30" fill="#008400" stroke="none" stroke-width="1" />
<rect x="427.0" y="364" width="12.5" height="47" rx="6.25" fill="#008400" stroke="#848400" stroke-width="2.5"/>
<rect x="443.4" y="364" width="12.5" height="47" rx="6.25" fill="#008400" stroke="#848400" stroke-width="2.5"/>
<rect x="459.8" y="364" width="12.5" height="47" rx="6.25" fill="#008400" stroke="#848400" stroke-width="2.5"/>
<rect x="476.2" y="364" width="12.5" height="47" rx="6.25" fill="#008400" stroke="#848400" stroke-width="2.5"/>
<rect x="492.6" y="364" width="12.5" height="47" rx="6.25" fill="#008400" stroke="#848400" stroke-width="2.5"/>
<rect x="509.0" y="364" width="12.5" height="47" rx="6.25" fill="#008400" stroke="#848400" stroke-width="2.5"/>
<rect x="525.4" y="364" width="12.5" height="47" rx="6.25" fill="#008400" stroke="#848400" stroke-width="2.5"/>
<rect x="541.8" y="364" width="12.5" height="47" rx="6.25" fill="#008400" stroke="#848400" stroke-width="2.5"/>
<rect x="558.2" y="364" width="12.5" height="47" rx="6.25" fill="#008400" stroke="#848400" stroke-width="2.5"/>
<rect x="574.6" y="364" width="12.5" height="47" rx="6.25" fill="#008400" stroke="#848400" stroke-width="2.5"/>
<rect x="591.0" y="364" width="12.5" height="47" rx="6.25" fill="#008400" stroke="#848400" stroke-width="2.5"/>
<rect x="427.0" y="502" width="12.5" height="47" rx="6.25" fill="#008400" stroke="#848400" stroke-width="2.5"/>
<rect x="443.4" y="502" width="12.5" height="47" rx="6.25" fill="#008400" stroke="#848400" stroke-width="2.5"/>
<rect x="459.8" y="502" width="12.5" height="47" rx="6.25" fill="#008400" stroke="#848400" stroke-width="2.5"/>
<rect x="476.2" y="502" width="12.5" height="47" rx="6.25" fill="#008400" stroke="#848400" stroke-width="2.5"/>
<rect x="492.6" y="502" width="12.5" height="47" rx="6.25" fill="#008400" stroke="#848400" stroke-width="2.5"/>
<rect x="509.0" y="502" width="12.5" height="47" rx="6.25" fill="#008400" stroke="#848400" stroke-width="2.5"/>
<rect x="525.4" y="502" width="12.5" height="47" rx="6.25" fill="#008400" stroke="#848400" stroke-width="2.5"/>
<rect x="541.8" y="502" width="12.5" height="47" rx="6.25" fill="#008400" stroke="#848400" stroke-width="2.5"/>
<rect x="558.2" y="502" width="12.5" height="47" rx="6.25" fill="#008400" stroke="#848400" stroke-width="2.5"/>
<rect x="574.6" y="502" width="12.5" height="47" rx="6.25" fill="#008400" stroke="#848400" stroke-width="2.5"/>
<rect x="591.0" y="502" width="12.5" height="47" rx="6.25" fill="#008400" stroke="#848400" stroke-width="2.5"/>
<rect x="347" y="417" width="33" height="25" fill="#008400" stroke="#848400" stroke-width="2.5" />
<rect x="345" y="467" width="35" height="30" fill="#008400" stroke="#848400" stroke-width="2.5" />
<rect x="358" y="528" width="26" height="28" fill="#008400" stroke="#848400" stroke-width="2.5" rx="5"/>
<rect x="360" y="532" width="9" height="18" fill="none" stroke="#000084" stroke-width="2" />
<circle cx="402.0" cy="432.0" r="10" fill="#008400" stroke="#848400" stroke-width="3"/>
<circle cx="402.0" cy="470.0" r="10" fill="#008400" stroke="#848400" stroke-width="3"/>
<rect x="392" y="437" width="18" height="32" fill="#000084" stroke="none" stroke-width="1" />
<rect x="751" y="360" width="18" height="62" fill="#008400" stroke="#848400" stroke-width="2.5" />
<rect x="779" y="360" width="17" height="62" fill="#008400" stroke="#848400" stroke-width="2.5" />
<rect x="755" y="364" width="37" height="54" fill="none" stroke="#000084" stroke-width="2" />
<rect x="920" y="396" width="22" height="32" fill="#008400" stroke="#848400" stroke-width="2.5" />
<rect x="966" y="396" width="25" height="32" fill="#008400" stroke="#848400" stroke-width="2.5" />
<rect x="995" y="483" width="65" height="27" fill="#008400" stroke="#848400" stroke-width="2.5" />
<rect x="995" y="523" width="65" height="27" fill="#008400" stroke="#848400" stroke-width="2.5" />
<circle cx="347.0" cy="345.0" r="11" fill="#008400" stroke="#848400" stroke-width="3"/>
<circle cx="347.0" cy="397.0" r="11" fill="#008400" stroke="#848400" stroke-width="3"/>
<circle cx="395.0" cy="545.0" r="11" fill="#008400" stroke="#848400" stroke-width="3"/>
<circle cx="672.0" cy="512.0" r="11" fill="#008400" stroke="#848400" stroke-width="3"/>
<circle cx="688.0" cy="512.0" r="11" fill="#008400" stroke="#848400" stroke-width="3"/>
<circle cx="1128.0" cy="553.0" r="18" fill="#008400" stroke="#848400" stroke-width="3"/>
<circle cx="904.0" cy="358.0" r="11" fill="#008400" stroke="#848400" stroke-width="3"/>
<circle cx="940.0" cy="358.0" r="11" fill="#008400" stroke="#848400" stroke-width="3"/>
<path d="M417.0 396.0 L614.0 396.0 L614.0 513.0 L417.0 513.0 L417.0 396.0" stroke="#000084" stroke-width="2.5" fill="none" stroke-linejoin="round" stroke-linecap="round" />
<path d="M920.0 396.0 L991.0 396.0 L991.0 428.0 L920.0 428.0 L920.0 396.0" stroke="#000084" stroke-width="2.5" fill="none" stroke-linejoin="round" stroke-linecap="round" />
<rect x="624" y="503" width="11" height="16" fill="#000084" stroke="none" stroke-width="1" />
<rect x="637" y="503" width="7" height="16" fill="#000084" stroke="none" stroke-width="1" />
<rect x="690" y="500" width="22" height="18" fill="#000084" stroke="none" stroke-width="1" />
<rect x="889" y="468" width="41" height="57" fill="#000084" stroke="none" stroke-width="1" />
<rect x="908" y="350" width="30" height="19" fill="#000084" stroke="none" stroke-width="1" />
<path d="M894.0 340.0 L952.0 340.0 L952.0 378.0 L894.0 378.0 L894.0 340.0" stroke="#b8b8b8" stroke-width="1.2" fill="none" stroke-linejoin="round" stroke-linecap="round" />
<path d="M912.0 350.0 L936.0 370.0" stroke="#008484" stroke-width="2.5" fill="none" stroke-linejoin="round" stroke-linecap="round" />
<path d="M936.0 350.0 L912.0 370.0" stroke="#008484" stroke-width="2.5" fill="none" stroke-linejoin="round" stroke-linecap="round" />
<path d="M935.0 439.0 L990.0 439.0" stroke="#840084" stroke-width="2.5" fill="none" stroke-linejoin="round" stroke-linecap="round" />
<rect x="995" y="490" width="45" height="15" fill="#000084" stroke="none" stroke-width="1" />
<rect x="995" y="528" width="45" height="17" fill="#000084" stroke="none" stroke-width="1" />
<rect x="312" y="282.6" width="844" height="347.69999999999993" fill="none" stroke="#c2c200" stroke-width="2.5" />
<path d="M362.0 283.0 L1106.0 283.0" stroke="#9a9a9a" stroke-width="2.5" fill="none" stroke-linejoin="round" stroke-linecap="round" />
<path d="M362.0 283.0 L362.0 331.0 L1106.0 331.0 L1106.0 283.0" stroke="#9a9a9a" stroke-width="2.5" fill="none" stroke-linejoin="round" stroke-linecap="round" />
<path d="M362.0 629.0 L1106.0 629.0" stroke="#9a9a9a" stroke-width="2.5" fill="none" stroke-linejoin="round" stroke-linecap="round" />
<path d="M362.0 629.0 L362.0 580.0 L1106.0 580.0 L1106.0 629.0" stroke="#9a9a9a" stroke-width="2.5" fill="none" stroke-linejoin="round" stroke-linecap="round" />
<path d="M277.0 398.0 L312.0 398.0" stroke="#9a9a9a" stroke-width="2.5" fill="none" stroke-linejoin="round" stroke-linecap="round" />
<path d="M277.0 398.0 L277.0 514.0 L312.0 514.0" stroke="#9a9a9a" stroke-width="2.5" fill="none" stroke-linejoin="round" stroke-linecap="round" />
<path d="M356.0 345.0 L480.0 345.0" stroke="#9a9a9a" stroke-width="2.5" fill="none" stroke-linejoin="round" stroke-linecap="round" />
<path d="M480.0 345.0 L480.0 396.0" stroke="#9a9a9a" stroke-width="2.5" fill="none" stroke-linejoin="round" stroke-linecap="round" />
<path d="M420.0 414.0 L482.0 414.0 L482.0 572.0" stroke="#b8b8b8" stroke-width="1.2" fill="none" stroke-linejoin="round" stroke-linecap="round" />
<path d="M382.0 424.0 L420.0 424.0 L420.0 483.0 L382.0 483.0 L382.0 424.0" stroke="#b8b8b8" stroke-width="1.2" fill="none" stroke-linejoin="round" stroke-linecap="round" />
<path d="M356.0 526.0 L384.0 526.0 L384.0 558.0 L356.0 558.0" stroke="#b8b8b8" stroke-width="1.2" fill="none" stroke-linejoin="round" stroke-linecap="round" />
<path d="M612.0 492.0 L669.0 492.0 L669.0 528.0 L612.0 528.0 L612.0 492.0" stroke="#b8b8b8" stroke-width="1.2" fill="none" stroke-linejoin="round" stroke-linecap="round" />
<path d="M671.0 490.0 L728.0 490.0 L728.0 528.0 L671.0 528.0 L671.0 490.0" stroke="#b8b8b8" stroke-width="1.2" fill="none" stroke-linejoin="round" stroke-linecap="round" />
<path d="M920.0 460.0 L1010.0 460.0" stroke="#b8b8b8" stroke-width="1.2" fill="none" stroke-linejoin="round" stroke-linecap="round" />
<path d="M838.0 445.0 L838.0 572.0" stroke="#b8b8b8" stroke-width="1.2" fill="none" stroke-linejoin="round" stroke-linecap="round" />
<text x="1082.7" y="338" font-family="Liberation Mono" font-size="22" fill="#008484" text-anchor="middle" dominant-baseline="central" textLength="39" lengthAdjust="spacingAndGlyphs" >TX1</text>
<text x="1033.17" y="338" font-family="Liberation Mono" font-size="22" fill="#008484" text-anchor="middle" dominant-baseline="central" textLength="39" lengthAdjust="spacingAndGlyphs" >RX0</text>
<text x="983.6400000000001" y="338" font-family="Liberation Mono" font-size="22" fill="#008484" text-anchor="middle" dominant-baseline="central" textLength="39" lengthAdjust="spacingAndGlyphs" >RST</text>
<text x="934.11" y="338" font-family="Liberation Mono" font-size="22" fill="#008484" text-anchor="middle" dominant-baseline="central" textLength="39" lengthAdjust="spacingAndGlyphs" >GND</text>
<text x="884.58" y="338" font-family="Liberation Mono" font-size="22" fill="#008484" text-anchor="middle" dominant-baseline="central" textLength="26" lengthAdjust="spacingAndGlyphs" >D2</text>
<text x="835.0500000000001" y="338" font-family="Liberation Mono" font-size="22" fill="#008484" text-anchor="middle" dominant-baseline="central" textLength="26" lengthAdjust="spacingAndGlyphs" >D3</text>
<text x="785.52" y="338" font-family="Liberation Mono" font-size="22" fill="#008484" text-anchor="middle" dominant-baseline="central" textLength="26" lengthAdjust="spacingAndGlyphs" >D4</text>
<text x="735.99" y="338" font-family="Liberation Mono" font-size="22" fill="#008484" text-anchor="middle" dominant-baseline="central" textLength="26" lengthAdjust="spacingAndGlyphs" >D5</text>
<text x="686.46" y="338" font-family="Liberation Mono" font-size="22" fill="#008484" text-anchor="middle" dominant-baseline="central" textLength="26" lengthAdjust="spacingAndGlyphs" >D6</text>
<text x="636.9300000000001" y="338" font-family="Liberation Mono" font-size="22" fill="#008484" text-anchor="middle" dominant-baseline="central" textLength="26" lengthAdjust="spacingAndGlyphs" >D7</text>
<text x="587.4000000000001" y="338" font-family="Liberation Mono" font-size="22" fill="#008484" text-anchor="middle" dominant-baseline="central" textLength="26" lengthAdjust="spacingAndGlyphs" >D8</text>
<text x="537.87" y="338" font-family="Liberation Mono" font-size="22" fill="#008484" text-anchor="middle" dominant-baseline="central" textLength="26" lengthAdjust="spacingAndGlyphs" >D9</text>
<text x="488.34000000000003" y="338" font-family="Liberation Mono" font-size="22" fill="#008484" text-anchor="middle" dominant-baseline="central" textLength="39" lengthAdjust="spacingAndGlyphs" >D10</text>
<text x="438.81000000000006" y="338" font-family="Liberation Mono" font-size="22" fill="#008484" text-anchor="middle" dominant-baseline="central" textLength="39" lengthAdjust="spacingAndGlyphs" >D11</text>
<text x="389.28" y="338" font-family="Liberation Mono" font-size="22" fill="#008484" text-anchor="middle" dominant-baseline="central" textLength="39" lengthAdjust="spacingAndGlyphs" >D12</text>
<text x="1082.7" y="574" font-family="Liberation Mono" font-size="22" fill="#008484" text-anchor="middle" dominant-baseline="central" textLength="39" lengthAdjust="spacingAndGlyphs" >VIN</text>
<text x="1033.17" y="574" font-family="Liberation Mono" font-size="22" fill="#008484" text-anchor="middle" dominant-baseline="central" textLength="39" lengthAdjust="spacingAndGlyphs" >GND</text>
<text x="983.6400000000001" y="574" font-family="Liberation Mono" font-size="22" fill="#008484" text-anchor="middle" dominant-baseline="central" textLength="39" lengthAdjust="spacingAndGlyphs" >RST</text>
<text x="934.11" y="574" font-family="Liberation Mono" font-size="22" fill="#008484" text-anchor="middle" dominant-baseline="central" textLength="26" lengthAdjust="spacingAndGlyphs" >5V</text>
<text x="884.58" y="574" font-family="Liberation Mono" font-size="22" fill="#008484" text-anchor="middle" dominant-baseline="central" textLength="26" lengthAdjust="spacingAndGlyphs" >A7</text>
<text x="835.0500000000001" y="574" font-family="Liberation Mono" font-size="22" fill="#008484" text-anchor="middle" dominant-baseline="central" textLength="26" lengthAdjust="spacingAndGlyphs" >A6</text>
<text x="785.52" y="574" font-family="Liberation Mono" font-size="22" fill="#008484" text-anchor="middle" dominant-baseline="central" textLength="26" lengthAdjust="spacingAndGlyphs" >A5</text>
<text x="735.99" y="574" font-family="Liberation Mono" font-size="22" fill="#008484" text-anchor="middle" dominant-baseline="central" textLength="26" lengthAdjust="spacingAndGlyphs" >A4</text>
<text x="686.46" y="574" font-family="Liberation Mono" font-size="22" fill="#008484" text-anchor="middle" dominant-baseline="central" textLength="26" lengthAdjust="spacingAndGlyphs" >A3</text>
<text x="636.9300000000001" y="574" font-family="Liberation Mono" font-size="22" fill="#008484" text-anchor="middle" dominant-baseline="central" textLength="26" lengthAdjust="spacingAndGlyphs" >A2</text>
<text x="587.4000000000001" y="574" font-family="Liberation Mono" font-size="22" fill="#008484" text-anchor="middle" dominant-baseline="central" textLength="26" lengthAdjust="spacingAndGlyphs" >A1</text>
<text x="537.87" y="574" font-family="Liberation Mono" font-size="22" fill="#008484" text-anchor="middle" dominant-baseline="central" textLength="26" lengthAdjust="spacingAndGlyphs" >A0</text>
<text x="488.34000000000003" y="574" font-family="Liberation Mono" font-size="22" fill="#008484" text-anchor="middle" dominant-baseline="central" textLength="39" lengthAdjust="spacingAndGlyphs" >REF</text>
<text x="438.81000000000006" y="574" font-family="Liberation Mono" font-size="22" fill="#008484" text-anchor="middle" dominant-baseline="central" textLength="39" lengthAdjust="spacingAndGlyphs" >3V3</text>
<text x="389.28" y="574" font-family="Liberation Mono" font-size="22" fill="#008484" text-anchor="middle" dominant-baseline="central" textLength="39" lengthAdjust="spacingAndGlyphs" >D13</text>
<text x="1014" y="267" font-family="Liberation Mono" font-size="19" fill="#008484" text-anchor="middle" dominant-baseline="central" textLength="88" lengthAdjust="spacingAndGlyphs" >Strip15pin</text>
<text x="1092" y="266" font-family="Liberation Mono" font-size="24" fill="#008484" text-anchor="middle" dominant-baseline="central" textLength="22" lengthAdjust="spacingAndGlyphs" >J1</text>
<text x="1022" y="645" font-family="Liberation Mono" font-size="19" fill="#008484" text-anchor="middle" dominant-baseline="central" textLength="80" lengthAdjust="spacingAndGlyphs" >Strip15pin</text>
<text x="1092" y="643" font-family="Liberation Mono" font-size="24" fill="#008484" text-anchor="middle" dominant-baseline="central" textLength="22" lengthAdjust="spacingAndGlyphs" >J2</text>
<path transform="translate(253 651) rotate(-90)" d="M1 -29 V-8 Q1 0 10 0 Q19 0 19 -8 V-29 M42 -25 Q40 -29 34 -29 Q26 -29 26 -22 Q26 -15.5 34 -14.5 Q43 -13 43 -7 Q43 0 34 0 Q27 0 25 -4 M49 0 V-29 H58 Q66 -29 66 -22 Q66 -15 58 -15 H49 M58 -15 Q67 -15 67 -7.5 Q67 0 58 0 H49 M73 -12 H92 M102 0 V-21 M102 -15 Q104 -21 109 -21 Q113 -21 113 -15 V0 M113 -15 Q115 -21 120 -21 Q124 -21 124 -15 V0 M134 0 V-21 M134 -28 V-27.6 M143 0 V-21 M143 -14 Q145 -21 152 -21 Q162 -21 162 -13 V0 M168 0 V-21 M168 -28 V-27.6 M178 -12 H197 M221 -18 Q221 -8 212.5 -8 Q204 -8 204 -18 Q204 -29 212.5 -29 Q221 -29 221 -18 V-10 Q221 0 211 0 Q206 0 204 -4 M234.7 -29 Q225.3 -29 225.3 -14.5 Q225.3 0 234.7 0 Q244.3 0 244.3 -14.5 Q244.3 -29 234.7 -29 Z M268 -12 H289 M313 -25 Q311 -29 305 -29 Q297 -29 297 -22 Q297 -15.5 305 -14.5 Q314 -13 314 -7 Q314 0 305 0 Q298 0 296 -4 M319 0 V-29 L329 -10 L339 -29 V0 M346 0 V-29 H353 Q363 -29 363 -14.5 Q363 0 353 0 Z" fill="none" stroke="#008484" stroke-width="4" stroke-linecap="round" stroke-linejoin="round"/>
<text x="1130" y="368" font-family="Liberation Mono" font-size="24" fill="#008484" text-anchor="middle" dominant-baseline="central" textLength="44" lengthAdjust="spacingAndGlyphs" >ICSP</text>
<text x="1172" y="455" font-family="Liberation Mono" font-size="20" fill="#008484" text-anchor="middle" dominant-baseline="central" transform="rotate(-90 1172 455)" textLength="40" lengthAdjust="spacingAndGlyphs" >ICSP</text>
<text x="1172" y="405" font-family="Liberation Mono" font-size="24" fill="#008484" text-anchor="middle" dominant-baseline="central" transform="rotate(-90 1172 405)" textLength="24" lengthAdjust="spacingAndGlyphs" >J4</text>
<text x="748" y="445" font-family="Liberation Mono" font-size="24" fill="#008484" text-anchor="middle" dominant-baseline="central" transform="rotate(-90 748 445)" textLength="42" lengthAdjust="spacingAndGlyphs" >SW1</text>
<circle cx="784.0" cy="443.0" r="12" fill="none" stroke="#008484" stroke-width="2.5"/>
<text x="720" y="548" font-family="Liberation Mono" font-size="22" fill="#008484" text-anchor="middle" dominant-baseline="central" textLength="110" lengthAdjust="spacingAndGlyphs" >ARDUINO.CC</text>
<text x="870" y="515" font-family="Liberation Mono" font-size="16" fill="#008484" text-anchor="middle" dominant-baseline="central" >Green</text>
<text x="872" y="531" font-family="Liberation Mono" font-size="16" fill="#008484" text-anchor="middle" dominant-baseline="central" >Yellow</text>
<text x="930" y="480" font-family="Liberation Mono" font-size="22" fill="#008484" text-anchor="middle" dominant-baseline="central" transform="rotate(-90 930 480)" >PWR</text>
<text x="1020" y="455" font-family="Liberation Mono" font-size="22" fill="#008484" text-anchor="middle" dominant-baseline="central" transform="rotate(-90 1020 455)" >ARDUINO</text>
<text x="945" y="425" font-family="Liberation Mono" font-size="20" fill="#008484" text-anchor="middle" dominant-baseline="central" transform="rotate(-90 945 425)" >RX</text>
<text x="400" y="455" font-family="Liberation Mono" font-size="22" fill="#008484" text-anchor="middle" dominant-baseline="central" transform="rotate(-90 400 455)" >U3</text>
<circle cx="693.0" cy="455.0" r="11" fill="none" stroke="#008484" stroke-width="3"/>
<circle cx="690.0" cy="447.0" r="6" fill="none" stroke="#840084" stroke-width="3"/>
<text x="652" y="448" font-family="Liberation Mono" font-size="18" fill="#008484" text-anchor="middle" dominant-baseline="central" transform="rotate(-60 652 448)" >IC3</text>
<path d="M517.0 456.0 L616.0 358.0 L716.0 456.0 L616.0 556.0 L517.0 456.0" stroke="#008484" stroke-width="1.5" fill="none" stroke-linejoin="round" stroke-linecap="round" />
<text x="1100" y="443" font-family="Liberation Mono" font-size="20" fill="#008484" text-anchor="middle" dominant-baseline="central" >7</text>
<path d="M1063.0 380.0 L1093.0 380.0 L1103.0 390.0 L1103.0 420.0 L1093.0 430.0 L1063.0 430.0 L1053.0 420.0 L1053.0 390.0 L1063.0 380.0" stroke="#008484" stroke-width="2.5" fill="none" stroke-linejoin="round" stroke-linecap="round" />
<path d="M1063.0 430.0 L1093.0 430.0 L1103.0 440.0 L1103.0 470.0 L1093.0 480.0 L1063.0 480.0 L1053.0 470.0 L1053.0 440.0 L1063.0 430.0" stroke="#008484" stroke-width="2.5" fill="none" stroke-linejoin="round" stroke-linecap="round" />
<path d="M1063.0 480.0 L1093.0 480.0 L1103.0 490.0 L1103.0 520.0 L1093.0 530.0 L1063.0 530.0 L1053.0 520.0 L1053.0 490.0 L1063.0 480.0" stroke="#008484" stroke-width="2.5" fill="none" stroke-linejoin="round" stroke-linecap="round" />
<path d="M1113.0 380.0 L1143.0 380.0 L1153.0 390.0 L1153.0 420.0 L1143.0 430.0 L1113.0 430.0 L1103.0 420.0 L1103.0 390.0 L1113.0 380.0" stroke="#008484" stroke-width="2.5" fill="none" stroke-linejoin="round" stroke-linecap="round" />
<path d="M1113.0 430.0 L1143.0 430.0 L1153.0 440.0 L1153.0 470.0 L1143.0 480.0 L1113.0 480.0 L1103.0 470.0 L1103.0 440.0 L1113.0 430.0" stroke="#008484" stroke-width="2.5" fill="none" stroke-linejoin="round" stroke-linecap="round" />
<path d="M1113.0 480.0 L1143.0 480.0 L1153.0 490.0 L1153.0 520.0 L1143.0 530.0 L1113.0 530.0 L1103.0 520.0 L1103.0 490.0 L1113.0 480.0" stroke="#008484" stroke-width="2.5" fill="none" stroke-linejoin="round" stroke-linecap="round" />
<path d="M1134.0 352.0 L1126.0 360.0 L1142.0 360.0 L1134.0 352.0" stroke="#008484" stroke-width="2.5" fill="none" stroke-linejoin="round" stroke-linecap="round" />
<text x="350" y="333" font-family="Liberation Mono" font-size="14" fill="#840084" text-anchor="middle" dominant-baseline="central" >-0</text>
<text x="302" y="598" font-family="Liberation Mono" font-size="18" fill="#840084" text-anchor="middle" dominant-baseline="central" >0</text>
<path d="M387.0 307.0 L411.0 331.0 L494.0 331.0 L502.0 339.0 L502.0 415.0 L510.0 423.0" stroke="#840000" stroke-width="5" fill="none" stroke-linejoin="round" stroke-linecap="round" />
<path d="M436.0 307.0 L467.0 339.0 L490.0 339.0 L510.0 359.0 L510.0 408.0 L518.0 416.0" stroke="#840000" stroke-width="5" fill="none" stroke-linejoin="round" stroke-linecap="round" />
<path d="M486.0 307.0 L519.0 340.0 L519.0 395.0 L528.0 404.0" stroke="#840000" stroke-width="5" fill="none" stroke-linejoin="round" stroke-linecap="round" />
<path d="M536.0 307.0 L534.0 311.0 L534.0 336.0 L530.0 340.0 L530.0 379.0 L540.0 389.0" stroke="#840000" stroke-width="5" fill="none" stroke-linejoin="round" stroke-linecap="round" />
<path d="M585.0 307.0 L546.0 346.0 L546.0 372.0 L554.0 380.0" stroke="#840000" stroke-width="5" fill="none" stroke-linejoin="round" stroke-linecap="round" />
<path d="M635.0 307.0 L612.0 330.0 L573.0 330.0 L560.0 343.0 L560.0 365.0 L568.0 373.0" stroke="#840000" stroke-width="5" fill="none" stroke-linejoin="round" stroke-linecap="round" />
<path d="M684.0 307.0 L659.0 332.0 L627.0 332.0 L612.0 347.0 L575.0 347.0 L565.0 357.0" stroke="#840000" stroke-width="5" fill="none" stroke-linejoin="round" stroke-linecap="round" />
<path d="M580.0 338.0 L692.0 338.0 L712.0 331.0 L720.0 331.0 L748.0 356.0 L765.0 374.0 L765.0 405.0 L745.0 420.0" stroke="#840000" stroke-width="5" fill="none" stroke-linejoin="round" stroke-linecap="round" />
<path d="M600.0 350.0 L694.0 350.0 L705.0 361.0" stroke="#840000" stroke-width="5" fill="none" stroke-linejoin="round" stroke-linecap="round" />
<path d="M610.0 358.0 L695.0 358.0" stroke="#840000" stroke-width="5" fill="none" stroke-linejoin="round" stroke-linecap="round" />
<path d="M734.0 307.0 L706.0 324.0 L660.0 324.0 L640.0 335.0" stroke="#840000" stroke-width="5" fill="none" stroke-linejoin="round" stroke-linecap="round" />
<path d="M783.0 307.0 L770.0 323.0 L762.0 331.0 L762.0 379.0 L735.0 406.0" stroke="#840000" stroke-width="5" fill="none" stroke-linejoin="round" stroke-linecap="round" />
<path d="M833.0 307.0 L812.0 330.0 L775.0 366.0 L775.0 382.0 L740.0 417.0" stroke="#840000" stroke-width="5" fill="none" stroke-linejoin="round" stroke-linecap="round" />
<path d="M882.0 307.0 L856.0 332.0 L824.0 332.0 L789.0 366.0 L789.0 382.0 L745.0 426.0" stroke="#840000" stroke-width="5" fill="none" stroke-linejoin="round" stroke-linecap="round" />
<path d="M822.0 400.0 L860.0 438.0" stroke="#840000" stroke-width="5" fill="none" stroke-linejoin="round" stroke-linecap="round" />
<path d="M811.0 367.0 L842.0 367.0" stroke="#840000" stroke-width="5" fill="none" stroke-linejoin="round" stroke-linecap="round" />
<path d="M898.0 382.0 L898.0 411.0" stroke="#840000" stroke-width="5" fill="none" stroke-linejoin="round" stroke-linecap="round" />
<path d="M898.0 500.0 L898.0 530.0" stroke="#840000" stroke-width="5" fill="none" stroke-linejoin="round" stroke-linecap="round" />
<path d="M811.0 438.0 L835.0 438.0 L843.0 445.0 L928.0 445.0 L949.0 466.0 L949.0 479.0 L960.0 490.0 L980.0 490.0 L1003.0 467.0 L1003.0 368.0 L981.0 347.0 L981.0 307.0" stroke="#840000" stroke-width="5" fill="none" stroke-linejoin="round" stroke-linecap="round" />
<path d="M824.0 455.0 L924.0 455.0 L941.0 472.0 L941.0 488.0 L954.0 501.0 L979.0 501.0 L1015.0 465.0 L1015.0 366.0 L1026.0 357.0" stroke="#840000" stroke-width="5" fill="none" stroke-linejoin="round" stroke-linecap="round" />
<path d="M806.0 466.0 L924.0 466.0 L937.0 479.0 L937.0 492.0 L954.0 509.0 L986.0 509.0 L1026.0 469.0 L1026.0 380.0 L1044.0 362.0 L1044.0 341.0 L1060.0 325.0 L1080.0 307.0" stroke="#840000" stroke-width="5" fill="none" stroke-linejoin="round" stroke-linecap="round" />
<path d="M1072.0 341.0 L1056.0 361.0 L1056.0 371.0 L1037.0 389.0 L1037.0 460.0 L992.0 505.0 L992.0 520.0" stroke="#840000" stroke-width="5" fill="none" stroke-linejoin="round" stroke-linecap="round" />
<path d="M800.0 455.0 L769.0 462.0 L733.0 462.0 L720.0 480.0" stroke="#840000" stroke-width="5" fill="none" stroke-linejoin="round" stroke-linecap="round" />
<path d="M800.0 470.0 L775.0 473.0 L758.0 480.0 L720.0 480.0" stroke="#840000" stroke-width="5" fill="none" stroke-linejoin="round" stroke-linecap="round" />
<path d="M824.0 505.0 L843.0 486.0" stroke="#840000" stroke-width="5" fill="none" stroke-linejoin="round" stroke-linecap="round" />
<path d="M790.0 507.0 L812.0 530.0" stroke="#840000" stroke-width="5" fill="none" stroke-linejoin="round" stroke-linecap="round" />
<path d="M413.0 357.0 L423.0 357.0" stroke="#840000" stroke-width="5" fill="none" stroke-linejoin="round" stroke-linecap="round" />
<path d="M445.0 514.0 L445.0 497.0 L452.0 490.0" stroke="#840000" stroke-width="5" fill="none" stroke-linejoin="round" stroke-linecap="round" />
<path d="M387.0 604.0 L420.0 572.0 L464.0 572.0 L470.0 546.0 L506.0 510.0 L506.0 475.0 L520.0 462.0" stroke="#840000" stroke-width="5" fill="none" stroke-linejoin="round" stroke-linecap="round" />
<path d="M486.0 604.0 L500.0 590.0 L504.0 540.0 L530.0 515.0" stroke="#840000" stroke-width="5" fill="none" stroke-linejoin="round" stroke-linecap="round" />
<path d="M452.0 490.0 L470.0 472.0 L480.0 460.0" stroke="#840000" stroke-width="5" fill="none" stroke-linejoin="round" stroke-linecap="round" />
<path d="M479.0 424.0 L495.0 424.0" stroke="#840000" stroke-width="5" fill="none" stroke-linejoin="round" stroke-linecap="round" />
<path d="M479.0 455.0 L490.0 448.0" stroke="#840000" stroke-width="5" fill="none" stroke-linejoin="round" stroke-linecap="round" />
<path d="M479.0 470.0 L496.0 469.0" stroke="#840000" stroke-width="5" fill="none" stroke-linejoin="round" stroke-linecap="round" />
<path d="M585.0 604.0 L585.0 562.0" stroke="#840000" stroke-width="5" fill="none" stroke-linejoin="round" stroke-linecap="round" />
<path d="M635.0 604.0 L635.0 562.0" stroke="#840000" stroke-width="5" fill="none" stroke-linejoin="round" stroke-linecap="round" />
<path d="M684.0 604.0 L684.0 590.0 L660.0 566.0 L640.0 546.0" stroke="#840000" stroke-width="5" fill="none" stroke-linejoin="round" stroke-linecap="round" />
<path d="M734.0 604.0 L710.0 580.0 L670.0 540.0" stroke="#840000" stroke-width="5" fill="none" stroke-linejoin="round" stroke-linecap="round" />
<path d="M783.0 604.0 L765.0 586.0 L725.0 569.0 L680.0 528.0" stroke="#840000" stroke-width="5" fill="none" stroke-linejoin="round" stroke-linecap="round" />
<path d="M536.0 604.0 L560.0 580.0 L580.0 560.0" stroke="#840000" stroke-width="5" fill="none" stroke-linejoin="round" stroke-linecap="round" />
<path d="M532.0 462.0 L596.0 462.0 L604.0 470.0 L640.0 470.0 L653.0 457.0 L653.0 445.0" stroke="#840000" stroke-width="5" fill="none" stroke-linejoin="round" stroke-linecap="round" />
<path d="M538.0 482.0 L585.0 482.0" stroke="#840000" stroke-width="5" fill="none" stroke-linejoin="round" stroke-linecap="round" />
<path d="M688.0 520.0 L780.0 520.0 L790.0 508.0" stroke="#840000" stroke-width="5" fill="none" stroke-linejoin="round" stroke-linecap="round" />
<path d="M790.0 494.0 L800.0 505.0 L840.0 545.0 L910.0 545.0 L932.0 565.0" stroke="#840000" stroke-width="5" fill="none" stroke-linejoin="round" stroke-linecap="round" />
<path d="M585.0 482.0 L570.0 497.0 L570.0 525.0" stroke="#840000" stroke-width="5" fill="none" stroke-linejoin="round" stroke-linecap="round" />
<path d="M700.0 430.0 L700.0 455.0 L682.0 470.0" stroke="#840000" stroke-width="5" fill="none" stroke-linejoin="round" stroke-linecap="round" />
<path d="M670.0 410.0 L645.0 410.0 L638.0 400.0 L608.0 430.0 L608.0 452.0" stroke="#840000" stroke-width="5" fill="none" stroke-linejoin="round" stroke-linecap="round" />
<path d="M638.0 400.0 L650.0 390.0" stroke="#840000" stroke-width="5" fill="none" stroke-linejoin="round" stroke-linecap="round" />
<path d="M709.0 463.0 L760.0 415.0" stroke="#840000" stroke-width="5" fill="none" stroke-linejoin="round" stroke-linecap="round" />
<path d="M716.0 494.0 L760.0 494.0" stroke="#840000" stroke-width="5" fill="none" stroke-linejoin="round" stroke-linecap="round" />
<path d="M842.0 485.0 L832.0 498.0 L820.0 510.0" stroke="#840000" stroke-width="5" fill="none" stroke-linejoin="round" stroke-linecap="round" />
<path d="M840.0 562.0 L955.0 562.0 L981.0 590.0" stroke="#840000" stroke-width="5" fill="none" stroke-linejoin="round" stroke-linecap="round" />
<path d="M391.0 350.0 L391.0 372.0 L346.0 417.0 L346.0 485.0 L332.0 497.0" stroke="#840000" stroke-width="6" fill="none" stroke-linejoin="round" stroke-linecap="round" />
<path d="M425.0 416.0 L372.0 469.0 L372.0 522.0 L391.0 541.0" stroke="#840000" stroke-width="6" fill="none" stroke-linejoin="round" stroke-linecap="round" />
<path d="M718.0 535.0 L770.0 535.0 L800.0 560.0 L907.0 570.0 L920.0 584.0 L932.0 604.0" stroke="#840000" stroke-width="8" fill="none" stroke-linejoin="round" stroke-linecap="round" />
<path d="M862.0 516.0 L872.0 505.0" stroke="#840000" stroke-width="5" fill="none" stroke-linejoin="round" stroke-linecap="round" />
<rect x="314.5" y="346.5" width="40.0" height="49.0" fill="#840000" stroke="#840084" stroke-width="3" />
<rect x="424.5" y="346.5" width="39.0" height="49.0" fill="#840000" stroke="#840084" stroke-width="3" />
<rect x="314.5" y="515.5" width="40.0" height="49.0" fill="#840000" stroke="#840084" stroke-width="3" />
<rect x="423.5" y="515.5" width="39.0" height="49.0" fill="#840000" stroke="#840084" stroke-width="3" />
<rect x="769.5" y="404.5" width="42.0" height="23.0" fill="#840000" stroke="#840084" stroke-width="3" />
<rect x="769.5" y="482.5" width="42.0" height="23.0" fill="#840000" stroke="#840084" stroke-width="3" />
<rect x="843.5" y="353.5" width="27.0" height="27.0" fill="#840000" stroke="#840084" stroke-width="3" />
<rect x="884.5" y="353.5" width="27.0" height="27.0" fill="#840000" stroke="#840084" stroke-width="3" />
<rect x="843.5" y="412.5" width="27.0" height="27.0" fill="#840000" stroke="#840084" stroke-width="3" />
<rect x="884.5" y="412.5" width="27.0" height="27.0" fill="#840000" stroke="#840084" stroke-width="3" />
<rect x="843.5" y="471.5" width="27.0" height="27.0" fill="#840000" stroke="#840084" stroke-width="3" />
<rect x="884.5" y="471.5" width="27.0" height="27.0" fill="#840000" stroke="#840084" stroke-width="3" />
<rect x="843.5" y="531.5" width="27.0" height="27.0" fill="#840000" stroke="#840084" stroke-width="3" />
<rect x="884.5" y="531.5" width="27.0" height="27.0" fill="#840000" stroke="#840084" stroke-width="3" />
<rect x="423.25" y="417.25" width="54.5" height="13.5" fill="#840000" stroke="#840084" stroke-width="2.5" />
<rect x="423.25" y="434.25" width="54.5" height="12.5" fill="#840000" stroke="#840084" stroke-width="2.5" />
<rect x="423.25" y="451.25" width="54.5" height="11.5" fill="#840000" stroke="#840084" stroke-width="2.5" />
<rect x="423.25" y="466.25" width="54.5" height="11.5" fill="#840000" stroke="#840084" stroke-width="2.5" />
<rect x="423.25" y="481.25" width="54.5" height="11.5" fill="#840000" stroke="#840084" stroke-width="2.5" />
<g transform="translate(556.0 397.5) rotate(-45.3)"><rect x="-63.0" y="-13.5" width="14.0" height="27" fill="#840000" stroke="#840084" stroke-width="2"/><line x1="-60.0" y1="-9.5" x2="-60.0" y2="9.5" stroke="#840084" stroke-width="1"/><rect x="-47.0" y="-13.5" width="14.0" height="27" fill="#840000" stroke="#840084" stroke-width="2"/><line x1="-44.0" y1="-9.5" x2="-44.0" y2="9.5" stroke="#840084" stroke-width="1"/><rect x="-31.0" y="-13.5" width="14.0" height="27" fill="#840000" stroke="#840084" stroke-width="2"/><line x1="-28.0" y1="-9.5" x2="-28.0" y2="9.5" stroke="#840084" stroke-width="1"/><rect x="-15.0" y="-13.5" width="14.0" height="27" fill="#840000" stroke="#840084" stroke-width="2"/><line x1="-12.0" y1="-9.5" x2="-12.0" y2="9.5" stroke="#840084" stroke-width="1"/><rect x="1.0" y="-13.5" width="14.0" height="27" fill="#840000" stroke="#840084" stroke-width="2"/><line x1="4.0" y1="-9.5" x2="4.0" y2="9.5" stroke="#840084" stroke-width="1"/><rect x="17.0" y="-13.5" width="14.0" height="27" fill="#840000" stroke="#840084" stroke-width="2"/><line x1="20.0" y1="-9.5" x2="20.0" y2="9.5" stroke="#840084" stroke-width="1"/><rect x="33.0" y="-13.5" width="14.0" height="27" fill="#840000" stroke="#840084" stroke-width="2"/><line x1="36.0" y1="-9.5" x2="36.0" y2="9.5" stroke="#840084" stroke-width="1"/><rect x="49.0" y="-13.5" width="14.0" height="27" fill="#840000" stroke="#840084" stroke-width="2"/><line x1="52.0" y1="-9.5" x2="52.0" y2="9.5" stroke="#840084" stroke-width="1"/></g>
<g transform="translate(673.8 397.5) rotate(44.5)"><rect x="-61.1" y="-13.5" width="13.5" height="27" fill="#840000" stroke="#840084" stroke-width="2"/><line x1="-58.1" y1="-9.5" x2="-58.1" y2="9.5" stroke="#840084" stroke-width="1"/><rect x="-45.5" y="-13.5" width="13.5" height="27" fill="#840000" stroke="#840084" stroke-width="2"/><line x1="-42.5" y1="-9.5" x2="-42.5" y2="9.5" stroke="#840084" stroke-width="1"/><rect x="-30.0" y="-13.5" width="13.5" height="27" fill="#840000" stroke="#840084" stroke-width="2"/><line x1="-27.0" y1="-9.5" x2="-27.0" y2="9.5" stroke="#840084" stroke-width="1"/><rect x="-14.5" y="-13.5" width="13.5" height="27" fill="#840000" stroke="#840084" stroke-width="2"/><line x1="-11.5" y1="-9.5" x2="-11.5" y2="9.5" stroke="#840084" stroke-width="1"/><rect x="1.0" y="-13.5" width="13.5" height="27" fill="#840000" stroke="#840084" stroke-width="2"/><line x1="4.0" y1="-9.5" x2="4.0" y2="9.5" stroke="#840084" stroke-width="1"/><rect x="16.5" y="-13.5" width="13.5" height="27" fill="#840000" stroke="#840084" stroke-width="2"/><line x1="19.5" y1="-9.5" x2="19.5" y2="9.5" stroke="#840084" stroke-width="1"/><rect x="32.0" y="-13.5" width="13.5" height="27" fill="#840000" stroke="#840084" stroke-width="2"/><line x1="35.0" y1="-9.5" x2="35.0" y2="9.5" stroke="#840084" stroke-width="1"/><rect x="47.5" y="-13.5" width="13.5" height="27" fill="#840000" stroke="#840084" stroke-width="2"/><line x1="50.5" y1="-9.5" x2="50.5" y2="9.5" stroke="#840084" stroke-width="1"/></g>
<g transform="translate(674.0 516.0) rotate(135.3)"><rect x="-61.6" y="-13.5" width="13.6" height="27" fill="#840000" stroke="#840084" stroke-width="2"/><line x1="-58.6" y1="-9.5" x2="-58.6" y2="9.5" stroke="#840084" stroke-width="1"/><rect x="-45.9" y="-13.5" width="13.6" height="27" fill="#840000" stroke="#840084" stroke-width="2"/><line x1="-42.9" y1="-9.5" x2="-42.9" y2="9.5" stroke="#840084" stroke-width="1"/><rect x="-30.3" y="-13.5" width="13.6" height="27" fill="#840000" stroke="#840084" stroke-width="2"/><line x1="-27.3" y1="-9.5" x2="-27.3" y2="9.5" stroke="#840084" stroke-width="1"/><rect x="-14.6" y="-13.5" width="13.6" height="27" fill="#840000" stroke="#840084" stroke-width="2"/><line x1="-11.6" y1="-9.5" x2="-11.6" y2="9.5" stroke="#840084" stroke-width="1"/><rect x="1.0" y="-13.5" width="13.6" height="27" fill="#840000" stroke="#840084" stroke-width="2"/><line x1="4.0" y1="-9.5" x2="4.0" y2="9.5" stroke="#840084" stroke-width="1"/><rect x="16.6" y="-13.5" width="13.6" height="27" fill="#840000" stroke="#840084" stroke-width="2"/><line x1="19.6" y1="-9.5" x2="19.6" y2="9.5" stroke="#840084" stroke-width="1"/><rect x="32.3" y="-13.5" width="13.6" height="27" fill="#840000" stroke="#840084" stroke-width="2"/><line x1="35.3" y1="-9.5" x2="35.3" y2="9.5" stroke="#840084" stroke-width="1"/><rect x="47.9" y="-13.5" width="13.6" height="27" fill="#840000" stroke="#840084" stroke-width="2"/><line x1="50.9" y1="-9.5" x2="50.9" y2="9.5" stroke="#840084" stroke-width="1"/></g>
<g transform="translate(555.5 515.5) rotate(45.0)"><rect x="-61.9" y="-13.5" width="13.7" height="27" fill="#840000" stroke="#840084" stroke-width="2"/><line x1="-58.9" y1="-9.5" x2="-58.9" y2="9.5" stroke="#840084" stroke-width="1"/><rect x="-46.2" y="-13.5" width="13.7" height="27" fill="#840000" stroke="#840084" stroke-width="2"/><line x1="-43.2" y1="-9.5" x2="-43.2" y2="9.5" stroke="#840084" stroke-width="1"/><rect x="-30.5" y="-13.5" width="13.7" height="27" fill="#840000" stroke="#840084" stroke-width="2"/><line x1="-27.5" y1="-9.5" x2="-27.5" y2="9.5" stroke="#840084" stroke-width="1"/><rect x="-14.7" y="-13.5" width="13.7" height="27" fill="#840000" stroke="#840084" stroke-width="2"/><line x1="-11.7" y1="-9.5" x2="-11.7" y2="9.5" stroke="#840084" stroke-width="1"/><rect x="1.0" y="-13.5" width="13.7" height="27" fill="#840000" stroke="#840084" stroke-width="2"/><line x1="4.0" y1="-9.5" x2="4.0" y2="9.5" stroke="#840084" stroke-width="1"/><rect x="16.7" y="-13.5" width="13.7" height="27" fill="#840000" stroke="#840084" stroke-width="2"/><line x1="19.7" y1="-9.5" x2="19.7" y2="9.5" stroke="#840084" stroke-width="1"/><rect x="32.5" y="-13.5" width="13.7" height="27" fill="#840000" stroke="#840084" stroke-width="2"/><line x1="35.5" y1="-9.5" x2="35.5" y2="9.5" stroke="#840084" stroke-width="1"/><rect x="48.2" y="-13.5" width="13.7" height="27" fill="#840000" stroke="#840084" stroke-width="2"/><line x1="51.2" y1="-9.5" x2="51.2" y2="9.5" stroke="#840084" stroke-width="1"/></g>
<g transform="translate(719 374) rotate(45)"><rect x="-26.8" y="-20.6" width="16.4" height="41.2" fill="#840000" stroke="#840084" stroke-width="2.5"/><rect x="-7.9" y="-20.6" width="16.4" height="41.2" fill="#840000" stroke="#840084" stroke-width="2.5"/><rect x="11.0" y="-20.6" width="16.4" height="41.2" fill="#840000" stroke="#840084" stroke-width="2.5"/></g>
<circle cx="1128.0" cy="344.0" r="21" fill="#840084" stroke="none" stroke-width="1"/>
<circle cx="1128.0" cy="344.0" r="13" fill="#840000" stroke="#c00000" stroke-width="1"/>
<circle cx="1044.0" cy="548.0" r="21" fill="#840084" stroke="none" stroke-width="1"/>
<circle cx="1044.0" cy="548.0" r="13" fill="#840000" stroke="#c00000" stroke-width="1"/>
<rect x="1059.2" y="285.5" width="43.0" height="43.0" fill="#c2c200" stroke="none" stroke-width="1" />
<rect x="1061.7" y="288" width="38.0" height="38" fill="#c2c200" stroke="#840084" stroke-width="3.5" />
<circle cx="1080.7" cy="307.0" r="8.8" fill="#000" stroke="none" stroke-width="1"/>
<text x="1080.7" y="298.5" font-family="Liberation Mono" font-size="15" fill="#f2f2f2" text-anchor="middle" dominant-baseline="central" textLength="8" lengthAdjust="spacingAndGlyphs" stroke="#f2f2f2" stroke-width="0.4">1</text>
<text x="1080.7" y="317.5" font-family="Liberation Mono" font-size="14" fill="#f2f2f2" text-anchor="middle" dominant-baseline="central" textLength="16.4" lengthAdjust="spacingAndGlyphs" stroke="#f2f2f2" stroke-width="0.4">TX</text>
<rect x="1059.2" y="583.0" width="43.0" height="43.0" fill="#c2c200" stroke="none" stroke-width="1" />
<rect x="1061.7" y="585.5" width="38.0" height="38.0" fill="#c2c200" stroke="#840084" stroke-width="3.5" />
<circle cx="1080.7" cy="604.5" r="8.8" fill="#000" stroke="none" stroke-width="1"/>
<text x="1080.7" y="596.0" font-family="Liberation Mono" font-size="15" fill="#f2f2f2" text-anchor="middle" dominant-baseline="central" textLength="8" lengthAdjust="spacingAndGlyphs" stroke="#f2f2f2" stroke-width="0.4">1</text>
<text x="1080.7" y="615.0" font-family="Liberation Mono" font-size="14" fill="#f2f2f2" text-anchor="middle" dominant-baseline="central" textLength="24.599999999999998" lengthAdjust="spacingAndGlyphs" stroke="#f2f2f2" stroke-width="0.4">VIN</text>
<circle cx="1031.2" cy="307.0" r="21.3" fill="#c2c200" stroke="none" stroke-width="1"/>
<circle cx="1031.2" cy="307.0" r="20.3" fill="#840084" stroke="none" stroke-width="1"/>
<circle cx="1031.2" cy="307.0" r="16.8" fill="#c2c200" stroke="none" stroke-width="1"/>
<circle cx="1031.2" cy="307.0" r="8.8" fill="#000" stroke="none" stroke-width="1"/>
<text x="1031.17" y="298.5" font-family="Liberation Mono" font-size="15" fill="#f2f2f2" text-anchor="middle" dominant-baseline="central" textLength="8" lengthAdjust="spacingAndGlyphs" stroke="#f2f2f2" stroke-width="0.4">2</text>
<text x="1031.17" y="317.5" font-family="Liberation Mono" font-size="14" fill="#f2f2f2" text-anchor="middle" dominant-baseline="central" textLength="16.4" lengthAdjust="spacingAndGlyphs" stroke="#f2f2f2" stroke-width="0.4">RX</text>
<circle cx="1031.2" cy="604.5" r="21.3" fill="#c2c200" stroke="none" stroke-width="1"/>
<circle cx="1031.2" cy="604.5" r="20.3" fill="#840084" stroke="none" stroke-width="1"/>
<circle cx="1031.2" cy="604.5" r="16.8" fill="#c2c200" stroke="none" stroke-width="1"/>
<circle cx="1031.2" cy="604.5" r="8.8" fill="#000" stroke="none" stroke-width="1"/>
<text x="1031.17" y="596.0" font-family="Liberation Mono" font-size="15" fill="#f2f2f2" text-anchor="middle" dominant-baseline="central" textLength="8" lengthAdjust="spacingAndGlyphs" stroke="#f2f2f2" stroke-width="0.4">2</text>
<text x="1031.17" y="615.0" font-family="Liberation Mono" font-size="14" fill="#f2f2f2" text-anchor="middle" dominant-baseline="central" textLength="24.599999999999998" lengthAdjust="spacingAndGlyphs" stroke="#f2f2f2" stroke-width="0.4">COM</text>
<circle cx="981.6" cy="307.0" r="21.3" fill="#c2c200" stroke="none" stroke-width="1"/>
<circle cx="981.6" cy="307.0" r="20.3" fill="#840084" stroke="none" stroke-width="1"/>
<circle cx="981.6" cy="307.0" r="16.8" fill="#c2c200" stroke="none" stroke-width="1"/>
<circle cx="981.6" cy="307.0" r="8.8" fill="#000" stroke="none" stroke-width="1"/>
<text x="981.6400000000001" y="298.5" font-family="Liberation Mono" font-size="15" fill="#f2f2f2" text-anchor="middle" dominant-baseline="central" textLength="8" lengthAdjust="spacingAndGlyphs" stroke="#f2f2f2" stroke-width="0.4">3</text>
<text x="981.6400000000001" y="317" font-family="Liberation Mono" font-size="9" fill="#f2f2f2" text-anchor="middle" dominant-baseline="central" textLength="30" lengthAdjust="spacingAndGlyphs" >RESET</text>
<circle cx="981.6" cy="604.5" r="21.3" fill="#c2c200" stroke="none" stroke-width="1"/>
<circle cx="981.6" cy="604.5" r="20.3" fill="#840084" stroke="none" stroke-width="1"/>
<circle cx="981.6" cy="604.5" r="16.8" fill="#c2c200" stroke="none" stroke-width="1"/>
<circle cx="981.6" cy="604.5" r="8.8" fill="#000" stroke="none" stroke-width="1"/>
<text x="981.6400000000001" y="596.0" font-family="Liberation Mono" font-size="15" fill="#f2f2f2" text-anchor="middle" dominant-baseline="central" textLength="8" lengthAdjust="spacingAndGlyphs" stroke="#f2f2f2" stroke-width="0.4">3</text>
<text x="981.6400000000001" y="614.5" font-family="Liberation Mono" font-size="9" fill="#f2f2f2" text-anchor="middle" dominant-baseline="central" textLength="30" lengthAdjust="spacingAndGlyphs" >RESET</text>
<circle cx="932.1" cy="307.0" r="21.3" fill="#c2c200" stroke="none" stroke-width="1"/>
<circle cx="932.1" cy="307.0" r="20.3" fill="#840084" stroke="none" stroke-width="1"/>
<circle cx="932.1" cy="307.0" r="16.8" fill="#c2c200" stroke="none" stroke-width="1"/>
<circle cx="932.1" cy="307.0" r="8.8" fill="#000" stroke="none" stroke-width="1"/>
<text x="932.11" y="298.5" font-family="Liberation Mono" font-size="15" fill="#f2f2f2" text-anchor="middle" dominant-baseline="central" textLength="8" lengthAdjust="spacingAndGlyphs" stroke="#f2f2f2" stroke-width="0.4">4</text>
<text x="932.11" y="317.5" font-family="Liberation Mono" font-size="14" fill="#f2f2f2" text-anchor="middle" dominant-baseline="central" textLength="24.599999999999998" lengthAdjust="spacingAndGlyphs" stroke="#f2f2f2" stroke-width="0.4">COM</text>
<circle cx="932.1" cy="604.5" r="21.3" fill="#c2c200" stroke="none" stroke-width="1"/>
<circle cx="932.1" cy="604.5" r="20.3" fill="#840084" stroke="none" stroke-width="1"/>
<circle cx="932.1" cy="604.5" r="16.8" fill="#c2c200" stroke="none" stroke-width="1"/>
<circle cx="932.1" cy="604.5" r="8.8" fill="#000" stroke="none" stroke-width="1"/>
<text x="932.11" y="596.0" font-family="Liberation Mono" font-size="15" fill="#f2f2f2" text-anchor="middle" dominant-baseline="central" textLength="8" lengthAdjust="spacingAndGlyphs" stroke="#f2f2f2" stroke-width="0.4">4</text>
<text x="932.11" y="615.0" font-family="Liberation Mono" font-size="14" fill="#f2f2f2" text-anchor="middle" dominant-baseline="central" textLength="24.599999999999998" lengthAdjust="spacingAndGlyphs" stroke="#f2f2f2" stroke-width="0.4">+5V</text>
<circle cx="882.6" cy="307.0" r="21.3" fill="#c2c200" stroke="none" stroke-width="1"/>
<circle cx="882.6" cy="307.0" r="20.3" fill="#840084" stroke="none" stroke-width="1"/>
<circle cx="882.6" cy="307.0" r="16.8" fill="#c2c200" stroke="none" stroke-width="1"/>
<circle cx="882.6" cy="307.0" r="8.8" fill="#000" stroke="none" stroke-width="1"/>
<text x="882.58" y="298.5" font-family="Liberation Mono" font-size="15" fill="#f2f2f2" text-anchor="middle" dominant-baseline="central" textLength="8" lengthAdjust="spacingAndGlyphs" stroke="#f2f2f2" stroke-width="0.4">5</text>
<text x="882.58" y="317.5" font-family="Liberation Mono" font-size="14" fill="#f2f2f2" text-anchor="middle" dominant-baseline="central" textLength="16.4" lengthAdjust="spacingAndGlyphs" stroke="#f2f2f2" stroke-width="0.4">D2</text>
<circle cx="882.6" cy="604.5" r="21.3" fill="#c2c200" stroke="none" stroke-width="1"/>
<circle cx="882.6" cy="604.5" r="20.3" fill="#840084" stroke="none" stroke-width="1"/>
<circle cx="882.6" cy="604.5" r="16.8" fill="#c2c200" stroke="none" stroke-width="1"/>
<circle cx="882.6" cy="604.5" r="8.8" fill="#000" stroke="none" stroke-width="1"/>
<text x="882.58" y="596.0" font-family="Liberation Mono" font-size="15" fill="#f2f2f2" text-anchor="middle" dominant-baseline="central" textLength="8" lengthAdjust="spacingAndGlyphs" stroke="#f2f2f2" stroke-width="0.4">5</text>
<text x="882.58" y="615.0" font-family="Liberation Mono" font-size="14" fill="#f2f2f2" text-anchor="middle" dominant-baseline="central" textLength="16.4" lengthAdjust="spacingAndGlyphs" stroke="#f2f2f2" stroke-width="0.4">A7</text>
<circle cx="833.1" cy="307.0" r="21.3" fill="#c2c200" stroke="none" stroke-width="1"/>
<circle cx="833.1" cy="307.0" r="20.3" fill="#840084" stroke="none" stroke-width="1"/>
<circle cx="833.1" cy="307.0" r="16.8" fill="#c2c200" stroke="none" stroke-width="1"/>
<circle cx="833.1" cy="307.0" r="8.8" fill="#000" stroke="none" stroke-width="1"/>
<text x="833.0500000000001" y="298.5" font-family="Liberation Mono" font-size="15" fill="#f2f2f2" text-anchor="middle" dominant-baseline="central" textLength="8" lengthAdjust="spacingAndGlyphs" stroke="#f2f2f2" stroke-width="0.4">6</text>
<text x="833.0500000000001" y="317.5" font-family="Liberation Mono" font-size="14" fill="#f2f2f2" text-anchor="middle" dominant-baseline="central" textLength="16.4" lengthAdjust="spacingAndGlyphs" stroke="#f2f2f2" stroke-width="0.4">D3</text>
<circle cx="833.1" cy="604.5" r="21.3" fill="#c2c200" stroke="none" stroke-width="1"/>
<circle cx="833.1" cy="604.5" r="20.3" fill="#840084" stroke="none" stroke-width="1"/>
<circle cx="833.1" cy="604.5" r="16.8" fill="#c2c200" stroke="none" stroke-width="1"/>
<circle cx="833.1" cy="604.5" r="8.8" fill="#000" stroke="none" stroke-width="1"/>
<text x="833.0500000000001" y="596.0" font-family="Liberation Mono" font-size="15" fill="#f2f2f2" text-anchor="middle" dominant-baseline="central" textLength="8" lengthAdjust="spacingAndGlyphs" stroke="#f2f2f2" stroke-width="0.4">6</text>
<text x="833.0500000000001" y="615.0" font-family="Liberation Mono" font-size="14" fill="#f2f2f2" text-anchor="middle" dominant-baseline="central" textLength="16.4" lengthAdjust="spacingAndGlyphs" stroke="#f2f2f2" stroke-width="0.4">A6</text>
<circle cx="783.5" cy="307.0" r="21.3" fill="#c2c200" stroke="none" stroke-width="1"/>
<circle cx="783.5" cy="307.0" r="20.3" fill="#840084" stroke="none" stroke-width="1"/>
<circle cx="783.5" cy="307.0" r="16.8" fill="#c2c200" stroke="none" stroke-width="1"/>
<circle cx="783.5" cy="307.0" r="8.8" fill="#000" stroke="none" stroke-width="1"/>
<text x="783.52" y="298.5" font-family="Liberation Mono" font-size="15" fill="#f2f2f2" text-anchor="middle" dominant-baseline="central" textLength="8" lengthAdjust="spacingAndGlyphs" stroke="#f2f2f2" stroke-width="0.4">7</text>
<text x="783.52" y="317.5" font-family="Liberation Mono" font-size="14" fill="#f2f2f2" text-anchor="middle" dominant-baseline="central" textLength="16.4" lengthAdjust="spacingAndGlyphs" stroke="#f2f2f2" stroke-width="0.4">D4</text>
<circle cx="783.5" cy="604.5" r="21.3" fill="#c2c200" stroke="none" stroke-width="1"/>
<circle cx="783.5" cy="604.5" r="20.3" fill="#840084" stroke="none" stroke-width="1"/>
<circle cx="783.5" cy="604.5" r="16.8" fill="#c2c200" stroke="none" stroke-width="1"/>
<circle cx="783.5" cy="604.5" r="8.8" fill="#000" stroke="none" stroke-width="1"/>
<text x="783.52" y="596.0" font-family="Liberation Mono" font-size="15" fill="#f2f2f2" text-anchor="middle" dominant-baseline="central" textLength="8" lengthAdjust="spacingAndGlyphs" stroke="#f2f2f2" stroke-width="0.4">7</text>
<text x="783.52" y="615.0" font-family="Liberation Mono" font-size="14" fill="#f2f2f2" text-anchor="middle" dominant-baseline="central" textLength="16.4" lengthAdjust="spacingAndGlyphs" stroke="#f2f2f2" stroke-width="0.4">A5</text>
<circle cx="734.0" cy="307.0" r="21.3" fill="#c2c200" stroke="none" stroke-width="1"/>
<circle cx="734.0" cy="307.0" r="20.3" fill="#840084" stroke="none" stroke-width="1"/>
<circle cx="734.0" cy="307.0" r="16.8" fill="#c2c200" stroke="none" stroke-width="1"/>
<circle cx="734.0" cy="307.0" r="8.8" fill="#000" stroke="none" stroke-width="1"/>
<text x="733.99" y="298.5" font-family="Liberation Mono" font-size="15" fill="#f2f2f2" text-anchor="middle" dominant-baseline="central" textLength="8" lengthAdjust="spacingAndGlyphs" stroke="#f2f2f2" stroke-width="0.4">8</text>
<text x="733.99" y="317.5" font-family="Liberation Mono" font-size="14" fill="#f2f2f2" text-anchor="middle" dominant-baseline="central" textLength="16.4" lengthAdjust="spacingAndGlyphs" stroke="#f2f2f2" stroke-width="0.4">D5</text>
<circle cx="734.0" cy="604.5" r="21.3" fill="#c2c200" stroke="none" stroke-width="1"/>
<circle cx="734.0" cy="604.5" r="20.3" fill="#840084" stroke="none" stroke-width="1"/>
<circle cx="734.0" cy="604.5" r="16.8" fill="#c2c200" stroke="none" stroke-width="1"/>
<circle cx="734.0" cy="604.5" r="8.8" fill="#000" stroke="none" stroke-width="1"/>
<text x="733.99" y="596.0" font-family="Liberation Mono" font-size="15" fill="#f2f2f2" text-anchor="middle" dominant-baseline="central" textLength="8" lengthAdjust="spacingAndGlyphs" stroke="#f2f2f2" stroke-width="0.4">8</text>
<text x="733.99" y="615.0" font-family="Liberation Mono" font-size="14" fill="#f2f2f2" text-anchor="middle" dominant-baseline="central" textLength="16.4" lengthAdjust="spacingAndGlyphs" stroke="#f2f2f2" stroke-width="0.4">A4</text>
<circle cx="684.5" cy="307.0" r="21.3" fill="#c2c200" stroke="none" stroke-width="1"/>
<circle cx="684.5" cy="307.0" r="20.3" fill="#840084" stroke="none" stroke-width="1"/>
<circle cx="684.5" cy="307.0" r="16.8" fill="#c2c200" stroke="none" stroke-width="1"/>
<circle cx="684.5" cy="307.0" r="8.8" fill="#000" stroke="none" stroke-width="1"/>
<text x="684.46" y="298.5" font-family="Liberation Mono" font-size="15" fill="#f2f2f2" text-anchor="middle" dominant-baseline="central" textLength="8" lengthAdjust="spacingAndGlyphs" stroke="#f2f2f2" stroke-width="0.4">9</text>
<text x="684.46" y="317.5" font-family="Liberation Mono" font-size="14" fill="#f2f2f2" text-anchor="middle" dominant-baseline="central" textLength="16.4" lengthAdjust="spacingAndGlyphs" stroke="#f2f2f2" stroke-width="0.4">D6</text>
<circle cx="684.5" cy="604.5" r="21.3" fill="#c2c200" stroke="none" stroke-width="1"/>
<circle cx="684.5" cy="604.5" r="20.3" fill="#840084" stroke="none" stroke-width="1"/>
<circle cx="684.5" cy="604.5" r="16.8" fill="#c2c200" stroke="none" stroke-width="1"/>
<circle cx="684.5" cy="604.5" r="8.8" fill="#000" stroke="none" stroke-width="1"/>
<text x="684.46" y="596.0" font-family="Liberation Mono" font-size="15" fill="#f2f2f2" text-anchor="middle" dominant-baseline="central" textLength="8" lengthAdjust="spacingAndGlyphs" stroke="#f2f2f2" stroke-width="0.4">9</text>
<text x="684.46" y="615.0" font-family="Liberation Mono" font-size="14" fill="#f2f2f2" text-anchor="middle" dominant-baseline="central" textLength="16.4" lengthAdjust="spacingAndGlyphs" stroke="#f2f2f2" stroke-width="0.4">A3</text>
<circle cx="634.9" cy="307.0" r="21.3" fill="#c2c200" stroke="none" stroke-width="1"/>
<circle cx="634.9" cy="307.0" r="20.3" fill="#840084" stroke="none" stroke-width="1"/>
<circle cx="634.9" cy="307.0" r="16.8" fill="#c2c200" stroke="none" stroke-width="1"/>
<circle cx="634.9" cy="307.0" r="8.8" fill="#000" stroke="none" stroke-width="1"/>
<text x="634.9300000000001" y="298.5" font-family="Liberation Mono" font-size="15" fill="#f2f2f2" text-anchor="middle" dominant-baseline="central" textLength="16" lengthAdjust="spacingAndGlyphs" stroke="#f2f2f2" stroke-width="0.4">10</text>
<text x="634.9300000000001" y="317.5" font-family="Liberation Mono" font-size="14" fill="#f2f2f2" text-anchor="middle" dominant-baseline="central" textLength="16.4" lengthAdjust="spacingAndGlyphs" stroke="#f2f2f2" stroke-width="0.4">D7</text>
<circle cx="634.9" cy="604.5" r="21.3" fill="#c2c200" stroke="none" stroke-width="1"/>
<circle cx="634.9" cy="604.5" r="20.3" fill="#840084" stroke="none" stroke-width="1"/>
<circle cx="634.9" cy="604.5" r="16.8" fill="#c2c200" stroke="none" stroke-width="1"/>
<circle cx="634.9" cy="604.5" r="8.8" fill="#000" stroke="none" stroke-width="1"/>
<text x="634.9300000000001" y="596.0" font-family="Liberation Mono" font-size="15" fill="#f2f2f2" text-anchor="middle" dominant-baseline="central" textLength="16" lengthAdjust="spacingAndGlyphs" stroke="#f2f2f2" stroke-width="0.4">10</text>
<text x="634.9300000000001" y="615.0" font-family="Liberation Mono" font-size="14" fill="#f2f2f2" text-anchor="middle" dominant-baseline="central" textLength="16.4" lengthAdjust="spacingAndGlyphs" stroke="#f2f2f2" stroke-width="0.4">A2</text>
<circle cx="585.4" cy="307.0" r="21.3" fill="#c2c200" stroke="none" stroke-width="1"/>
<circle cx="585.4" cy="307.0" r="20.3" fill="#840084" stroke="none" stroke-width="1"/>
<circle cx="585.4" cy="307.0" r="16.8" fill="#c2c200" stroke="none" stroke-width="1"/>
<circle cx="585.4" cy="307.0" r="8.8" fill="#000" stroke="none" stroke-width="1"/>
<text x="585.4000000000001" y="298.5" font-family="Liberation Mono" font-size="15" fill="#f2f2f2" text-anchor="middle" dominant-baseline="central" textLength="16" lengthAdjust="spacingAndGlyphs" stroke="#f2f2f2" stroke-width="0.4">11</text>
<text x="585.4000000000001" y="317.5" font-family="Liberation Mono" font-size="14" fill="#f2f2f2" text-anchor="middle" dominant-baseline="central" textLength="16.4" lengthAdjust="spacingAndGlyphs" stroke="#f2f2f2" stroke-width="0.4">D8</text>
<circle cx="585.4" cy="604.5" r="21.3" fill="#c2c200" stroke="none" stroke-width="1"/>
<circle cx="585.4" cy="604.5" r="20.3" fill="#840084" stroke="none" stroke-width="1"/>
<circle cx="585.4" cy="604.5" r="16.8" fill="#c2c200" stroke="none" stroke-width="1"/>
<circle cx="585.4" cy="604.5" r="8.8" fill="#000" stroke="none" stroke-width="1"/>
<text x="585.4000000000001" y="596.0" font-family="Liberation Mono" font-size="15" fill="#f2f2f2" text-anchor="middle" dominant-baseline="central" textLength="16" lengthAdjust="spacingAndGlyphs" stroke="#f2f2f2" stroke-width="0.4">11</text>
<text x="585.4000000000001" y="615.0" font-family="Liberation Mono" font-size="14" fill="#f2f2f2" text-anchor="middle" dominant-baseline="central" textLength="16.4" lengthAdjust="spacingAndGlyphs" stroke="#f2f2f2" stroke-width="0.4">A1</text>
<circle cx="535.9" cy="307.0" r="21.3" fill="#c2c200" stroke="none" stroke-width="1"/>
<circle cx="535.9" cy="307.0" r="20.3" fill="#840084" stroke="none" stroke-width="1"/>
<circle cx="535.9" cy="307.0" r="16.8" fill="#c2c200" stroke="none" stroke-width="1"/>
<circle cx="535.9" cy="307.0" r="8.8" fill="#000" stroke="none" stroke-width="1"/>
<text x="535.87" y="298.5" font-family="Liberation Mono" font-size="15" fill="#f2f2f2" text-anchor="middle" dominant-baseline="central" textLength="16" lengthAdjust="spacingAndGlyphs" stroke="#f2f2f2" stroke-width="0.4">12</text>
<text x="535.87" y="317.5" font-family="Liberation Mono" font-size="14" fill="#f2f2f2" text-anchor="middle" dominant-baseline="central" textLength="16.4" lengthAdjust="spacingAndGlyphs" stroke="#f2f2f2" stroke-width="0.4">D9</text>
<circle cx="535.9" cy="604.5" r="21.3" fill="#c2c200" stroke="none" stroke-width="1"/>
<circle cx="535.9" cy="604.5" r="20.3" fill="#840084" stroke="none" stroke-width="1"/>
<circle cx="535.9" cy="604.5" r="16.8" fill="#c2c200" stroke="none" stroke-width="1"/>
<circle cx="535.9" cy="604.5" r="8.8" fill="#000" stroke="none" stroke-width="1"/>
<text x="535.87" y="596.0" font-family="Liberation Mono" font-size="15" fill="#f2f2f2" text-anchor="middle" dominant-baseline="central" textLength="16" lengthAdjust="spacingAndGlyphs" stroke="#f2f2f2" stroke-width="0.4">12</text>
<text x="535.87" y="615.0" font-family="Liberation Mono" font-size="14" fill="#f2f2f2" text-anchor="middle" dominant-baseline="central" textLength="16.4" lengthAdjust="spacingAndGlyphs" stroke="#f2f2f2" stroke-width="0.4">A0</text>
<circle cx="486.3" cy="307.0" r="21.3" fill="#c2c200" stroke="none" stroke-width="1"/>
<circle cx="486.3" cy="307.0" r="20.3" fill="#840084" stroke="none" stroke-width="1"/>
<circle cx="486.3" cy="307.0" r="16.8" fill="#c2c200" stroke="none" stroke-width="1"/>
<circle cx="486.3" cy="307.0" r="8.8" fill="#000" stroke="none" stroke-width="1"/>
<text x="486.34000000000003" y="298.5" font-family="Liberation Mono" font-size="15" fill="#f2f2f2" text-anchor="middle" dominant-baseline="central" textLength="16" lengthAdjust="spacingAndGlyphs" stroke="#f2f2f2" stroke-width="0.4">13</text>
<text x="486.34000000000003" y="317.5" font-family="Liberation Mono" font-size="14" fill="#f2f2f2" text-anchor="middle" dominant-baseline="central" textLength="24.599999999999998" lengthAdjust="spacingAndGlyphs" stroke="#f2f2f2" stroke-width="0.4">D10</text>
<circle cx="486.3" cy="604.5" r="21.3" fill="#c2c200" stroke="none" stroke-width="1"/>
<circle cx="486.3" cy="604.5" r="20.3" fill="#840084" stroke="none" stroke-width="1"/>
<circle cx="486.3" cy="604.5" r="16.8" fill="#c2c200" stroke="none" stroke-width="1"/>
<circle cx="486.3" cy="604.5" r="8.8" fill="#000" stroke="none" stroke-width="1"/>
<text x="486.34000000000003" y="596.0" font-family="Liberation Mono" font-size="15" fill="#f2f2f2" text-anchor="middle" dominant-baseline="central" textLength="16" lengthAdjust="spacingAndGlyphs" stroke="#f2f2f2" stroke-width="0.4">13</text>
<text x="486.34000000000003" y="615.0" font-family="Liberation Mono" font-size="12" fill="#f2f2f2" text-anchor="middle" dominant-baseline="central" textLength="28" lengthAdjust="spacingAndGlyphs" >AREF</text>
<circle cx="436.8" cy="307.0" r="21.3" fill="#c2c200" stroke="none" stroke-width="1"/>
<circle cx="436.8" cy="307.0" r="20.3" fill="#840084" stroke="none" stroke-width="1"/>
<circle cx="436.8" cy="307.0" r="16.8" fill="#c2c200" stroke="none" stroke-width="1"/>
<circle cx="436.8" cy="307.0" r="8.8" fill="#000" stroke="none" stroke-width="1"/>
<text x="436.81000000000006" y="298.5" font-family="Liberation Mono" font-size="15" fill="#f2f2f2" text-anchor="middle" dominant-baseline="central" textLength="16" lengthAdjust="spacingAndGlyphs" stroke="#f2f2f2" stroke-width="0.4">14</text>
<text x="436.81000000000006" y="317.5" font-family="Liberation Mono" font-size="12" fill="#f2f2f2" text-anchor="middle" dominant-baseline="central" textLength="28" lengthAdjust="spacingAndGlyphs" >MOSI</text>
<circle cx="436.8" cy="604.5" r="21.3" fill="#c2c200" stroke="none" stroke-width="1"/>
<circle cx="436.8" cy="604.5" r="20.3" fill="#840084" stroke="none" stroke-width="1"/>
<circle cx="436.8" cy="604.5" r="16.8" fill="#c2c200" stroke="none" stroke-width="1"/>
<circle cx="436.8" cy="604.5" r="8.8" fill="#000" stroke="none" stroke-width="1"/>
<text x="436.81000000000006" y="596.0" font-family="Liberation Mono" font-size="15" fill="#f2f2f2" text-anchor="middle" dominant-baseline="central" textLength="16" lengthAdjust="spacingAndGlyphs" stroke="#f2f2f2" stroke-width="0.4">14</text>
<text x="436.81000000000006" y="615.0" font-family="Liberation Mono" font-size="14" fill="#f2f2f2" text-anchor="middle" dominant-baseline="central" textLength="24.599999999999998" lengthAdjust="spacingAndGlyphs" stroke="#f2f2f2" stroke-width="0.4">3V3</text>
<circle cx="387.3" cy="307.0" r="21.3" fill="#c2c200" stroke="none" stroke-width="1"/>
<circle cx="387.3" cy="307.0" r="20.3" fill="#840084" stroke="none" stroke-width="1"/>
<circle cx="387.3" cy="307.0" r="16.8" fill="#c2c200" stroke="none" stroke-width="1"/>
<circle cx="387.3" cy="307.0" r="8.8" fill="#000" stroke="none" stroke-width="1"/>
<text x="387.28" y="298.5" font-family="Liberation Mono" font-size="15" fill="#f2f2f2" text-anchor="middle" dominant-baseline="central" textLength="16" lengthAdjust="spacingAndGlyphs" stroke="#f2f2f2" stroke-width="0.4">15</text>
<text x="387.28" y="317.5" font-family="Liberation Mono" font-size="12" fill="#f2f2f2" text-anchor="middle" dominant-baseline="central" textLength="28" lengthAdjust="spacingAndGlyphs" >MISO</text>
<circle cx="387.3" cy="604.5" r="21.3" fill="#c2c200" stroke="none" stroke-width="1"/>
<circle cx="387.3" cy="604.5" r="20.3" fill="#840084" stroke="none" stroke-width="1"/>
<circle cx="387.3" cy="604.5" r="16.8" fill="#c2c200" stroke="none" stroke-width="1"/>
<circle cx="387.3" cy="604.5" r="8.8" fill="#000" stroke="none" stroke-width="1"/>
<text x="387.28" y="596.0" font-family="Liberation Mono" font-size="15" fill="#f2f2f2" text-anchor="middle" dominant-baseline="central" textLength="16" lengthAdjust="spacingAndGlyphs" stroke="#f2f2f2" stroke-width="0.4">15</text>
<text x="387.28" y="615.0" font-family="Liberation Mono" font-size="14" fill="#f2f2f2" text-anchor="middle" dominant-baseline="central" textLength="24.599999999999998" lengthAdjust="spacingAndGlyphs" stroke="#f2f2f2" stroke-width="0.4">SCK</text>
<circle cx="337.5" cy="307.0" r="22.3" fill="none" stroke="#c2c2c2" stroke-width="4.5"/>
<circle cx="337.5" cy="307.0" r="19.6" fill="none" stroke="#c2c200" stroke-width="1"/>
<circle cx="337.5" cy="307.0" r="16" fill="#c2c200" stroke="none" stroke-width="1"/>
<circle cx="1130.0" cy="307.0" r="22.3" fill="none" stroke="#c2c2c2" stroke-width="4.5"/>
<circle cx="1130.0" cy="307.0" r="19.6" fill="none" stroke="#c2c200" stroke-width="1"/>
<circle cx="1130.0" cy="307.0" r="16" fill="#c2c200" stroke="none" stroke-width="1"/>
<circle cx="337.5" cy="604.5" r="22.3" fill="none" stroke="#c2c2c2" stroke-width="4.5"/>
<circle cx="337.5" cy="604.5" r="19.6" fill="none" stroke="#c2c200" stroke-width="1"/>
<circle cx="337.5" cy="604.5" r="16" fill="#c2c200" stroke="none" stroke-width="1"/>
<circle cx="1130.0" cy="604.5" r="22.3" fill="none" stroke="#c2c2c2" stroke-width="4.5"/>
<circle cx="1130.0" cy="604.5" r="19.6" fill="none" stroke="#c2c200" stroke-width="1"/>
<circle cx="1130.0" cy="604.5" r="16" fill="#c2c200" stroke="none" stroke-width="1"/>
<circle cx="1078.0" cy="405.0" r="18.5" fill="#c2c200" stroke="none" stroke-width="1"/>
<circle cx="1078.0" cy="405.0" r="17.5" fill="#840084" stroke="none" stroke-width="1"/>
<circle cx="1078.0" cy="405.0" r="14" fill="#c2c200" stroke="none" stroke-width="1"/>
<circle cx="1078.0" cy="405.0" r="8" fill="#000" stroke="none" stroke-width="1"/>
<text x="1078" y="397" font-family="Liberation Mono" font-size="14" fill="#f2f2f2" text-anchor="middle" dominant-baseline="central" textLength="8" lengthAdjust="spacingAndGlyphs" >6</text>
<text x="1078" y="414" font-family="Liberation Mono" font-size="13" fill="#f2f2f2" text-anchor="middle" dominant-baseline="central" textLength="23" lengthAdjust="spacingAndGlyphs" >COM</text>
<circle cx="1128.0" cy="405.0" r="18.5" fill="#c2c200" stroke="none" stroke-width="1"/>
<circle cx="1128.0" cy="405.0" r="17.5" fill="#840084" stroke="none" stroke-width="1"/>
<circle cx="1128.0" cy="405.0" r="14" fill="#c2c200" stroke="none" stroke-width="1"/>
<circle cx="1128.0" cy="405.0" r="8" fill="#000" stroke="none" stroke-width="1"/>
<text x="1128" y="397" font-family="Liberation Mono" font-size="14" fill="#f2f2f2" text-anchor="middle" dominant-baseline="central" textLength="8" lengthAdjust="spacingAndGlyphs" >5</text>
<text x="1128" y="414" font-family="Liberation Mono" font-size="9" fill="#f2f2f2" text-anchor="middle" dominant-baseline="central" textLength="26" lengthAdjust="spacingAndGlyphs" >RESET</text>
<circle cx="1078.0" cy="455.0" r="18.5" fill="#c2c200" stroke="none" stroke-width="1"/>
<circle cx="1078.0" cy="455.0" r="17.5" fill="#840084" stroke="none" stroke-width="1"/>
<circle cx="1078.0" cy="455.0" r="14" fill="#c2c200" stroke="none" stroke-width="1"/>
<circle cx="1078.0" cy="455.0" r="8" fill="#000" stroke="none" stroke-width="1"/>
<text x="1078" y="447" font-family="Liberation Mono" font-size="14" fill="#f2f2f2" text-anchor="middle" dominant-baseline="central" textLength="8" lengthAdjust="spacingAndGlyphs" >4</text>
<text x="1078" y="464" font-family="Liberation Mono" font-size="9" fill="#f2f2f2" text-anchor="middle" dominant-baseline="central" textLength="26" lengthAdjust="spacingAndGlyphs" >MOSI</text>
<circle cx="1128.0" cy="455.0" r="18.5" fill="#c2c200" stroke="none" stroke-width="1"/>
<circle cx="1128.0" cy="455.0" r="17.5" fill="#840084" stroke="none" stroke-width="1"/>
<circle cx="1128.0" cy="455.0" r="14" fill="#c2c200" stroke="none" stroke-width="1"/>
<circle cx="1128.0" cy="455.0" r="8" fill="#000" stroke="none" stroke-width="1"/>
<text x="1128" y="447" font-family="Liberation Mono" font-size="14" fill="#f2f2f2" text-anchor="middle" dominant-baseline="central" textLength="8" lengthAdjust="spacingAndGlyphs" >3</text>
<text x="1128" y="464" font-family="Liberation Mono" font-size="13" fill="#f2f2f2" text-anchor="middle" dominant-baseline="central" textLength="23" lengthAdjust="spacingAndGlyphs" >SCK</text>
<circle cx="1078.0" cy="505.0" r="18.5" fill="#c2c200" stroke="none" stroke-width="1"/>
<circle cx="1078.0" cy="505.0" r="17.5" fill="#840084" stroke="none" stroke-width="1"/>
<circle cx="1078.0" cy="505.0" r="14" fill="#c2c200" stroke="none" stroke-width="1"/>
<circle cx="1078.0" cy="505.0" r="8" fill="#000" stroke="none" stroke-width="1"/>
<text x="1078" y="497" font-family="Liberation Mono" font-size="14" fill="#f2f2f2" text-anchor="middle" dominant-baseline="central" textLength="8" lengthAdjust="spacingAndGlyphs" >2</text>
<text x="1078" y="514" font-family="Liberation Mono" font-size="13" fill="#f2f2f2" text-anchor="middle" dominant-baseline="central" textLength="23" lengthAdjust="spacingAndGlyphs" >+5V</text>
<circle cx="1128.0" cy="505.0" r="18.5" fill="#c2c200" stroke="none" stroke-width="1"/>
<circle cx="1128.0" cy="505.0" r="17.5" fill="#840084" stroke="none" stroke-width="1"/>
<circle cx="1128.0" cy="505.0" r="14" fill="#c2c200" stroke="none" stroke-width="1"/>
<circle cx="1128.0" cy="505.0" r="8" fill="#000" stroke="none" stroke-width="1"/>
<text x="1128" y="497" font-family="Liberation Mono" font-size="14" fill="#f2f2f2" text-anchor="middle" dominant-baseline="central" textLength="8" lengthAdjust="spacingAndGlyphs" >1</text>
<text x="1128" y="514" font-family="Liberation Mono" font-size="9" fill="#f2f2f2" text-anchor="middle" dominant-baseline="central" textLength="26" lengthAdjust="spacingAndGlyphs" >MISO</text>
<circle cx="393.0" cy="412.0" r="13" fill="none" stroke="#c2c200" stroke-width="1"/>
<circle cx="393.0" cy="412.0" r="9" fill="#c2c200" stroke="none" stroke-width="1"/>
<circle cx="393.0" cy="498.0" r="13" fill="none" stroke="#c2c200" stroke-width="1"/>
<circle cx="393.0" cy="498.0" r="9" fill="#c2c200" stroke="none" stroke-width="1"/>
<circle cx="391.0" cy="350.0" r="7.6" fill="#d2d2d2" stroke="none" stroke-width="1"/>
<circle cx="391.0" cy="350.0" r="5.2" fill="#8a7430" stroke="none" stroke-width="1"/>
<text x="391" y="352.5" font-family="Liberation Sans" font-size="7.5" font-weight="bold" fill="#3a3a3a" text-anchor="middle" textLength="13" lengthAdjust="spacingAndGlyphs" opacity="0.8">VUSB</text>
<circle cx="367.0" cy="451.0" r="7.6" fill="#d2d2d2" stroke="none" stroke-width="1"/>
<circle cx="367.0" cy="451.0" r="5.2" fill="#8a7430" stroke="none" stroke-width="1"/>
<text x="367" y="453.5" font-family="Liberation Sans" font-size="7.5" font-weight="bold" fill="#3a3a3a" text-anchor="middle" textLength="13" lengthAdjust="spacingAndGlyphs" opacity="0.8">COM</text>
<circle cx="332.0" cy="497.0" r="7.6" fill="#d2d2d2" stroke="none" stroke-width="1"/>
<circle cx="332.0" cy="497.0" r="5.2" fill="#8a7430" stroke="none" stroke-width="1"/>
<text x="332" y="499.5" font-family="Liberation Sans" font-size="7.5" font-weight="bold" fill="#3a3a3a" text-anchor="middle" textLength="13" lengthAdjust="spacingAndGlyphs" opacity="0.8">VUSB</text>
<circle cx="391.0" cy="542.0" r="7.6" fill="#d2d2d2" stroke="none" stroke-width="1"/>
<circle cx="391.0" cy="542.0" r="5.2" fill="#8a7430" stroke="none" stroke-width="1"/>
<text x="391" y="544.5" font-family="Liberation Sans" font-size="7.5" font-weight="bold" fill="#3a3a3a" text-anchor="middle" textLength="13" lengthAdjust="spacingAndGlyphs" opacity="0.8">NSMG</text>
<circle cx="364.0" cy="575.0" r="7.6" fill="#d2d2d2" stroke="none" stroke-width="1"/>
<circle cx="364.0" cy="575.0" r="5.2" fill="#8a7430" stroke="none" stroke-width="1"/>
<text x="364" y="577.5" font-family="Liberation Sans" font-size="7.5" font-weight="bold" fill="#3a3a3a" text-anchor="middle" textLength="13" lengthAdjust="spacingAndGlyphs" opacity="0.8">COM</text>
<circle cx="487.0" cy="448.0" r="7.6" fill="#d2d2d2" stroke="none" stroke-width="1"/>
<circle cx="487.0" cy="448.0" r="5.2" fill="#8a7430" stroke="none" stroke-width="1"/>
<text x="487" y="450.5" font-family="Liberation Sans" font-size="7.5" font-weight="bold" fill="#3a3a3a" text-anchor="middle" textLength="13" lengthAdjust="spacingAndGlyphs" opacity="0.8">NS6</text>
<circle cx="496.0" cy="469.0" r="7.6" fill="#d2d2d2" stroke="none" stroke-width="1"/>
<circle cx="496.0" cy="469.0" r="5.2" fill="#8a7430" stroke="none" stroke-width="1"/>
<text x="496" y="471.5" font-family="Liberation Sans" font-size="7.5" font-weight="bold" fill="#3a3a3a" text-anchor="middle" textLength="13" lengthAdjust="spacingAndGlyphs" opacity="0.8">NS5</text>
<circle cx="541.0" cy="449.0" r="7.6" fill="#d2d2d2" stroke="none" stroke-width="1"/>
<circle cx="541.0" cy="449.0" r="5.2" fill="#8a7430" stroke="none" stroke-width="1"/>
<text x="541" y="451.5" font-family="Liberation Sans" font-size="7.5" font-weight="bold" fill="#3a3a3a" text-anchor="middle" textLength="13" lengthAdjust="spacingAndGlyphs" opacity="0.8">COM</text>
<circle cx="610.0" cy="452.0" r="7.6" fill="#d2d2d2" stroke="none" stroke-width="1"/>
<circle cx="610.0" cy="452.0" r="5.2" fill="#8a7430" stroke="none" stroke-width="1"/>
<text x="610" y="454.5" font-family="Liberation Sans" font-size="7.5" font-weight="bold" fill="#3a3a3a" text-anchor="middle" textLength="13" lengthAdjust="spacingAndGlyphs" opacity="0.8">+5V</text>
<circle cx="653.0" cy="445.0" r="7.6" fill="#d2d2d2" stroke="none" stroke-width="1"/>
<circle cx="653.0" cy="445.0" r="5.2" fill="#8a7430" stroke="none" stroke-width="1"/>
<text x="653" y="447.5" font-family="Liberation Sans" font-size="7.5" font-weight="bold" fill="#3a3a3a" text-anchor="middle" textLength="13" lengthAdjust="spacingAndGlyphs" opacity="0.8">SCK</text>
<circle cx="618.0" cy="386.0" r="7.6" fill="#d2d2d2" stroke="none" stroke-width="1"/>
<circle cx="618.0" cy="386.0" r="5.2" fill="#8a7430" stroke="none" stroke-width="1"/>
<text x="618" y="388.5" font-family="Liberation Sans" font-size="7.5" font-weight="bold" fill="#3a3a3a" text-anchor="middle" textLength="13" lengthAdjust="spacingAndGlyphs" opacity="0.8">COM</text>
<circle cx="682.0" cy="470.0" r="7.6" fill="#d2d2d2" stroke="none" stroke-width="1"/>
<circle cx="682.0" cy="470.0" r="5.2" fill="#8a7430" stroke="none" stroke-width="1"/>
<text x="682" y="472.5" font-family="Liberation Sans" font-size="7.5" font-weight="bold" fill="#3a3a3a" text-anchor="middle" textLength="13" lengthAdjust="spacingAndGlyphs" opacity="0.8">COM</text>
<circle cx="585.0" cy="482.0" r="7.6" fill="#d2d2d2" stroke="none" stroke-width="1"/>
<circle cx="585.0" cy="482.0" r="5.2" fill="#8a7430" stroke="none" stroke-width="1"/>
<text x="585" y="484.5" font-family="Liberation Sans" font-size="7.5" font-weight="bold" fill="#3a3a3a" text-anchor="middle" textLength="13" lengthAdjust="spacingAndGlyphs" opacity="0.8">+5V</text>
<circle cx="614.0" cy="537.0" r="7.6" fill="#d2d2d2" stroke="none" stroke-width="1"/>
<circle cx="614.0" cy="537.0" r="5.2" fill="#8a7430" stroke="none" stroke-width="1"/>
<text x="614" y="539.5" font-family="Liberation Sans" font-size="7.5" font-weight="bold" fill="#3a3a3a" text-anchor="middle" textLength="13" lengthAdjust="spacingAndGlyphs" opacity="0.8">NSSM</text>
<circle cx="718.0" cy="535.0" r="7.6" fill="#d2d2d2" stroke="none" stroke-width="1"/>
<circle cx="718.0" cy="535.0" r="5.2" fill="#8a7430" stroke="none" stroke-width="1"/>
<text x="718" y="537.5" font-family="Liberation Sans" font-size="7.5" font-weight="bold" fill="#3a3a3a" text-anchor="middle" textLength="13" lengthAdjust="spacingAndGlyphs" opacity="0.8">+5V</text>
<circle cx="487.0" cy="570.0" r="7.6" fill="#d2d2d2" stroke="none" stroke-width="1"/>
<circle cx="487.0" cy="570.0" r="5.2" fill="#8a7430" stroke="none" stroke-width="1"/>
<text x="487" y="572.5" font-family="Liberation Sans" font-size="7.5" font-weight="bold" fill="#3a3a3a" text-anchor="middle" textLength="13" lengthAdjust="spacingAndGlyphs" opacity="0.8">A6</text>
<circle cx="519.0" cy="563.0" r="7.6" fill="#d2d2d2" stroke="none" stroke-width="1"/>
<circle cx="519.0" cy="563.0" r="5.2" fill="#8a7430" stroke="none" stroke-width="1"/>
<text x="519" y="565.5" font-family="Liberation Sans" font-size="7.5" font-weight="bold" fill="#3a3a3a" text-anchor="middle" textLength="13" lengthAdjust="spacingAndGlyphs" opacity="0.8">COM</text>
<circle cx="541.0" cy="562.0" r="7.6" fill="#d2d2d2" stroke="none" stroke-width="1"/>
<circle cx="541.0" cy="562.0" r="5.2" fill="#8a7430" stroke="none" stroke-width="1"/>
<text x="541" y="564.5" font-family="Liberation Sans" font-size="7.5" font-weight="bold" fill="#3a3a3a" text-anchor="middle" textLength="13" lengthAdjust="spacingAndGlyphs" opacity="0.8">A7</text>
<circle cx="811.0" cy="367.0" r="7.6" fill="#d2d2d2" stroke="none" stroke-width="1"/>
<circle cx="811.0" cy="367.0" r="5.2" fill="#8a7430" stroke="none" stroke-width="1"/>
<text x="811" y="369.5" font-family="Liberation Sans" font-size="7.5" font-weight="bold" fill="#3a3a3a" text-anchor="middle" textLength="13" lengthAdjust="spacingAndGlyphs" opacity="0.8">NS11</text>
<circle cx="830.0" cy="379.0" r="7.6" fill="#d2d2d2" stroke="none" stroke-width="1"/>
<circle cx="830.0" cy="379.0" r="5.2" fill="#8a7430" stroke="none" stroke-width="1"/>
<text x="830" y="381.5" font-family="Liberation Sans" font-size="7.5" font-weight="bold" fill="#3a3a3a" text-anchor="middle" textLength="13" lengthAdjust="spacingAndGlyphs" opacity="0.8">COM</text>
<circle cx="822.0" cy="400.0" r="7.6" fill="#d2d2d2" stroke="none" stroke-width="1"/>
<circle cx="822.0" cy="400.0" r="5.2" fill="#8a7430" stroke="none" stroke-width="1"/>
<text x="822" y="402.5" font-family="Liberation Sans" font-size="7.5" font-weight="bold" fill="#3a3a3a" text-anchor="middle" textLength="13" lengthAdjust="spacingAndGlyphs" opacity="0.8">NS26</text>
<circle cx="811.0" cy="438.0" r="7.6" fill="#d2d2d2" stroke="none" stroke-width="1"/>
<circle cx="811.0" cy="438.0" r="5.2" fill="#8a7430" stroke="none" stroke-width="1"/>
<text x="811" y="440.5" font-family="Liberation Sans" font-size="7.5" font-weight="bold" fill="#3a3a3a" text-anchor="middle" textLength="13" lengthAdjust="spacingAndGlyphs" opacity="0.8">SCK</text>
<circle cx="824.0" cy="456.0" r="7.6" fill="#d2d2d2" stroke="none" stroke-width="1"/>
<circle cx="824.0" cy="456.0" r="5.2" fill="#8a7430" stroke="none" stroke-width="1"/>
<text x="824" y="458.5" font-family="Liberation Sans" font-size="7.5" font-weight="bold" fill="#3a3a3a" text-anchor="middle" textLength="13" lengthAdjust="spacingAndGlyphs" opacity="0.8">TX</text>
<circle cx="806.0" cy="470.0" r="7.6" fill="#d2d2d2" stroke="none" stroke-width="1"/>
<circle cx="806.0" cy="470.0" r="5.2" fill="#8a7430" stroke="none" stroke-width="1"/>
<text x="806" y="472.5" font-family="Liberation Sans" font-size="7.5" font-weight="bold" fill="#3a3a3a" text-anchor="middle" textLength="13" lengthAdjust="spacingAndGlyphs" opacity="0.8">RX</text>
<circle cx="824.0" cy="505.0" r="7.6" fill="#d2d2d2" stroke="none" stroke-width="1"/>
<circle cx="824.0" cy="505.0" r="5.2" fill="#8a7430" stroke="none" stroke-width="1"/>
<text x="824" y="507.5" font-family="Liberation Sans" font-size="7.5" font-weight="bold" fill="#3a3a3a" text-anchor="middle" textLength="13" lengthAdjust="spacingAndGlyphs" opacity="0.8">NS8</text>
<circle cx="836.0" cy="525.0" r="7.6" fill="#d2d2d2" stroke="none" stroke-width="1"/>
<circle cx="836.0" cy="525.0" r="5.2" fill="#8a7430" stroke="none" stroke-width="1"/>
<text x="836" y="527.5" font-family="Liberation Sans" font-size="7.5" font-weight="bold" fill="#3a3a3a" text-anchor="middle" textLength="13" lengthAdjust="spacingAndGlyphs" opacity="0.8">NS9</text>
<circle cx="921.0" cy="381.0" r="7.6" fill="#d2d2d2" stroke="none" stroke-width="1"/>
<circle cx="921.0" cy="381.0" r="5.2" fill="#8a7430" stroke="none" stroke-width="1"/>
<text x="921" y="383.5" font-family="Liberation Sans" font-size="7.5" font-weight="bold" fill="#3a3a3a" text-anchor="middle" textLength="13" lengthAdjust="spacingAndGlyphs" opacity="0.8">+5V</text>
<circle cx="961.0" cy="379.0" r="7.6" fill="#d2d2d2" stroke="none" stroke-width="1"/>
<circle cx="961.0" cy="379.0" r="5.2" fill="#8a7430" stroke="none" stroke-width="1"/>
<text x="961" y="381.5" font-family="Liberation Sans" font-size="7.5" font-weight="bold" fill="#3a3a3a" text-anchor="middle" textLength="13" lengthAdjust="spacingAndGlyphs" opacity="0.8">COM</text>
<circle cx="1026.0" cy="357.0" r="7.6" fill="#d2d2d2" stroke="none" stroke-width="1"/>
<circle cx="1026.0" cy="357.0" r="5.2" fill="#8a7430" stroke="none" stroke-width="1"/>
<text x="1026" y="359.5" font-family="Liberation Sans" font-size="7.5" font-weight="bold" fill="#3a3a3a" text-anchor="middle" textLength="13" lengthAdjust="spacingAndGlyphs" opacity="0.8">SCK</text>
<circle cx="1072.0" cy="341.0" r="7.6" fill="#d2d2d2" stroke="none" stroke-width="1"/>
<circle cx="1072.0" cy="341.0" r="5.2" fill="#8a7430" stroke="none" stroke-width="1"/>
<text x="1072" y="343.5" font-family="Liberation Sans" font-size="7.5" font-weight="bold" fill="#3a3a3a" text-anchor="middle" textLength="13" lengthAdjust="spacingAndGlyphs" opacity="0.8">RX</text>
<circle cx="963.0" cy="473.0" r="7.6" fill="#d2d2d2" stroke="none" stroke-width="1"/>
<circle cx="963.0" cy="473.0" r="5.2" fill="#8a7430" stroke="none" stroke-width="1"/>
<text x="963" y="475.5" font-family="Liberation Sans" font-size="7.5" font-weight="bold" fill="#3a3a3a" text-anchor="middle" textLength="13" lengthAdjust="spacingAndGlyphs" opacity="0.8">NSSM</text>
<circle cx="1050.0" cy="482.0" r="7.6" fill="#d2d2d2" stroke="none" stroke-width="1"/>
<circle cx="1050.0" cy="482.0" r="5.2" fill="#8a7430" stroke="none" stroke-width="1"/>
<text x="1050" y="484.5" font-family="Liberation Sans" font-size="7.5" font-weight="bold" fill="#3a3a3a" text-anchor="middle" textLength="13" lengthAdjust="spacingAndGlyphs" opacity="0.8">COM</text>
<circle cx="862.0" cy="516.0" r="7.6" fill="#d2d2d2" stroke="none" stroke-width="1"/>
<circle cx="862.0" cy="516.0" r="5.2" fill="#8a7430" stroke="none" stroke-width="1"/>
<text x="862" y="518.5" font-family="Liberation Sans" font-size="7.5" font-weight="bold" fill="#3a3a3a" text-anchor="middle" textLength="13" lengthAdjust="spacingAndGlyphs" opacity="0.8">COM</text>
<circle cx="941.0" cy="543.0" r="7.6" fill="#d2d2d2" stroke="none" stroke-width="1"/>
<circle cx="941.0" cy="543.0" r="5.2" fill="#8a7430" stroke="none" stroke-width="1"/>
<text x="941" y="545.5" font-family="Liberation Sans" font-size="7.5" font-weight="bold" fill="#3a3a3a" text-anchor="middle" textLength="13" lengthAdjust="spacingAndGlyphs" opacity="0.8">COM</text>
<circle cx="981.0" cy="548.0" r="7.6" fill="#d2d2d2" stroke="none" stroke-width="1"/>
<circle cx="981.0" cy="548.0" r="5.2" fill="#8a7430" stroke="none" stroke-width="1"/>
<text x="981" y="550.5" font-family="Liberation Sans" font-size="7.5" font-weight="bold" fill="#3a3a3a" text-anchor="middle" textLength="13" lengthAdjust="spacingAndGlyphs" opacity="0.8">COM</text>
<circle cx="1089.0" cy="542.0" r="7.6" fill="#d2d2d2" stroke="none" stroke-width="1"/>
<circle cx="1089.0" cy="542.0" r="5.2" fill="#8a7430" stroke="none" stroke-width="1"/>
<text x="1089" y="544.5" font-family="Liberation Sans" font-size="7.5" font-weight="bold" fill="#3a3a3a" text-anchor="middle" textLength="13" lengthAdjust="spacingAndGlyphs" opacity="0.8">COM</text>
<text x="325" y="371" font-family="Liberation Mono" font-size="19" fill="#f2f2f2" text-anchor="middle" dominant-baseline="central" transform="rotate(-90 325 371)" textLength="8" lengthAdjust="spacingAndGlyphs" >9</text>
<text x="342" y="371" font-family="Liberation Mono" font-size="19" fill="#f2f2f2" text-anchor="middle" dominant-baseline="central" transform="rotate(-90 342 371)" textLength="27" lengthAdjust="spacingAndGlyphs" >COM</text>
<text x="435" y="371" font-family="Liberation Mono" font-size="19" fill="#f2f2f2" text-anchor="middle" dominant-baseline="central" transform="rotate(-90 435 371)" textLength="8" lengthAdjust="spacingAndGlyphs" >8</text>
<text x="452" y="371" font-family="Liberation Mono" font-size="19" fill="#f2f2f2" text-anchor="middle" dominant-baseline="central" transform="rotate(-90 452 371)" textLength="27" lengthAdjust="spacingAndGlyphs" >COM</text>
<text x="325" y="540" font-family="Liberation Mono" font-size="19" fill="#f2f2f2" text-anchor="middle" dominant-baseline="central" transform="rotate(-90 325 540)" textLength="8" lengthAdjust="spacingAndGlyphs" >6</text>
<text x="342" y="540" font-family="Liberation Mono" font-size="19" fill="#f2f2f2" text-anchor="middle" dominant-baseline="central" transform="rotate(-90 342 540)" textLength="27" lengthAdjust="spacingAndGlyphs" >COM</text>
<text x="434" y="540" font-family="Liberation Mono" font-size="19" fill="#f2f2f2" text-anchor="middle" dominant-baseline="central" transform="rotate(-90 434 540)" textLength="8" lengthAdjust="spacingAndGlyphs" >7</text>
<text x="451" y="540" font-family="Liberation Mono" font-size="19" fill="#f2f2f2" text-anchor="middle" dominant-baseline="central" transform="rotate(-90 451 540)" textLength="27" lengthAdjust="spacingAndGlyphs" >COM</text>
<text x="790" y="412" font-family="Liberation Mono" font-size="10" fill="#f2f2f2" text-anchor="middle" dominant-baseline="central" >1</text>
<text x="790" y="421" font-family="Liberation Mono" font-size="12" fill="#f2f2f2" text-anchor="middle" dominant-baseline="central" textLength="22" lengthAdjust="spacingAndGlyphs" >COM</text>
<text x="790" y="489" font-family="Liberation Mono" font-size="10" fill="#f2f2f2" text-anchor="middle" dominant-baseline="central" >2</text>
<text x="790" y="498" font-family="Liberation Mono" font-size="11" fill="#f2f2f2" text-anchor="middle" dominant-baseline="central" textLength="34" lengthAdjust="spacingAndGlyphs" >RESET</text>
<text x="862" y="396" font-family="Liberation Mono" font-size="26" fill="#f2f2f2" text-anchor="middle" dominant-baseline="central" transform="rotate(-90 862 396)" textLength="24" lengthAdjust="spacingAndGlyphs" >S1</text>
<text x="884" y="396" font-family="Liberation Mono" font-size="26" fill="#f2f2f2" text-anchor="middle" dominant-baseline="central" transform="rotate(-90 884 396)" textLength="24" lengthAdjust="spacingAndGlyphs" >5V</text>
<text x="450" y="472" font-family="Liberation Mono" font-size="14" fill="#f2f2f2" text-anchor="middle" dominant-baseline="central" >2</text>
<text x="450" y="487" font-family="Liberation Mono" font-size="12" fill="#f2f2f2" text-anchor="middle" dominant-baseline="central" >1</text>
<text x="362" y="421" font-family="Liberation Mono" font-size="12" fill="#f2f2f2" text-anchor="middle" dominant-baseline="central" >4</text>
<text x="362" y="432" font-family="Liberation Mono" font-size="12" fill="#f2f2f2" text-anchor="middle" dominant-baseline="central" textLength="22" lengthAdjust="spacingAndGlyphs" >COM</text>
<text x="362" y="476" font-family="Liberation Mono" font-size="12" fill="#f2f2f2" text-anchor="middle" dominant-baseline="central" >1</text>
<text x="362" y="489" font-family="Liberation Mono" font-size="11" fill="#f2f2f2" text-anchor="middle" dominant-baseline="central" textLength="26" lengthAdjust="spacingAndGlyphs" >VUSB</text>
<path d="M330.0 368.0 L367.0 451.0 L400.0 437.0 L480.0 500.0" stroke="#f0f0f0" stroke-width="1.2" fill="none" stroke-linejoin="round" stroke-linecap="round" />
<path d="M445.0 370.0 L470.0 386.0 L618.0 386.0 L656.0 390.0" stroke="#f0f0f0" stroke-width="1.2" fill="none" stroke-linejoin="round" stroke-linecap="round" />
<path d="M559.0 386.0 L542.0 447.0 L561.0 519.0 L520.0 524.0 L480.0 511.0" stroke="#f0f0f0" stroke-width="1.2" fill="none" stroke-linejoin="round" stroke-linecap="round" />
<path d="M520.0 524.0 L520.0 563.0" stroke="#f0f0f0" stroke-width="1.2" fill="none" stroke-linejoin="round" stroke-linecap="round" />
<path d="M367.0 451.0 L395.0 460.0" stroke="#f0f0f0" stroke-width="1.2" fill="none" stroke-linejoin="round" stroke-linecap="round" />
<path d="M333.0 540.0 L364.0 575.0 L432.0 571.0 L452.0 520.0" stroke="#f0f0f0" stroke-width="1.2" fill="none" stroke-linejoin="round" stroke-linecap="round" />
<path d="M712.0 385.0 L780.0 383.0 L830.0 379.0" stroke="#f0f0f0" stroke-width="1.2" fill="none" stroke-linejoin="round" stroke-linecap="round" />
<path d="M932.0 318.0 L937.0 345.0 L961.0 379.0 L1050.0 482.0 L1089.0 542.0 L1030.0 604.0" stroke="#f0f0f0" stroke-width="1.2" fill="none" stroke-linejoin="round" stroke-linecap="round" />
<path d="M1078.0 410.0 L1020.0 455.0 L985.0 490.0" stroke="#f0f0f0" stroke-width="1.2" fill="none" stroke-linejoin="round" stroke-linecap="round" />
<path d="M862.0 516.0 L896.0 485.0" stroke="#f0f0f0" stroke-width="1.2" fill="none" stroke-linejoin="round" stroke-linecap="round" />
<path d="M862.0 516.0 L896.0 545.0 L941.0 543.0 L981.0 548.0 L1030.0 604.0" stroke="#f0f0f0" stroke-width="1.2" fill="none" stroke-linejoin="round" stroke-linecap="round" />
<path d="M830.0 379.0 L870.0 440.0 L896.0 485.0 L862.0 516.0" stroke="#f0f0f0" stroke-width="1.2" fill="none" stroke-linejoin="round" stroke-linecap="round" />
<path d="M788.0 383.0 L788.0 437.0" stroke="#f0f0f0" stroke-width="1.2" fill="none" stroke-linejoin="round" stroke-linecap="round" />
<path d="M683.0 470.0 L690.0 420.0" stroke="#f0f0f0" stroke-width="1.2" fill="none" stroke-linejoin="round" stroke-linecap="round" />
<path d="M1050.0 482.0 L1078.0 455.0" stroke="#f0f0f0" stroke-width="1.2" fill="none" stroke-linejoin="round" stroke-linecap="round" />
<path d="M941.0 543.0 L1030.0 590.0" stroke="#f0f0f0" stroke-width="1.2" fill="none" stroke-linejoin="round" stroke-linecap="round" />
<path d="M862.0 516.0 L869.0 560.0" stroke="#f0f0f0" stroke-width="1.2" fill="none" stroke-linejoin="round" stroke-linecap="round" />
</svg></div>
<div class="abs" style="left:1374px;top:111px;width:13px;height:707px;background:#c4c5c3"></div>
<div class="abs" style="left:36px;top:818px;width:1338px;height:13px;background:#c4c5c3"></div>
<div class="abs" style="left:770px;top:822px;width:41px;height:6px;border-radius:3px;background:#7f807e"></div>
<div class="abs" style="left:1377px;top:472px;width:6px;height:44px;border-radius:3px;background:#7f807e"></div>
<div class="sep" style="left:1427px;top:111px;height:720px;background:#bdbdbc"></div>
<div class="abs" style="left:1432px;top:111px;width:168px;height:17px;background:linear-gradient(#dcdcdb,#e6e6e5)"></div>
<div class="abs" style="left:1435px;top:110px;font-size:13px;color:#2e3436">Visibles</div>
<div class="abs" style="left:1439px;top:164px;width:155px;height:662px;border:1px solid #c0c0bf;background:#fff"></div>
<div class="abs" style="left:1444px;top:168px;width:145px;height:653px;background:#e8e8e7"></div>
<div class="abs" style="left:1487px;top:139px;width:51px;height:26px;border:1px solid #c0c0bf;border-bottom:none;border-radius:3px 3px 0 0;background:#ececeb"></div>
<div class="abs" style="left:1443px;top:135px;width:44px;height:31px;border:1px solid #c0c0bf;border-bottom:none;border-radius:3px 3px 0 0;background:#fff"></div>
<div class="abs" style="left:1451px;top:143px;font-size:12px">Layer</div>
<div class="abs" style="left:1494px;top:146px;font-size:12px">Render</div>
<div class="lay" style="top:173px"><b style="background:#840000"></b><u></u><svg style="position:absolute;left:23px;top:2px" width="13" height="12"><path d="M2 6.5l3.5 3.5l6-8" stroke="#2e3436" stroke-width="2.8" fill="none"/></svg><span>Top</span></div>
<div class="lay" style="top:196px"><b style="background:#008400"></b><u></u><svg style="position:absolute;left:23px;top:2px" width="13" height="12"><path d="M2 6.5l3.5 3.5l6-8" stroke="#2e3436" stroke-width="2.8" fill="none"/></svg><span>Bottom</span></div>
<div class="lay" style="top:219px"><b style="background:#840084"></b><u></u><svg style="position:absolute;left:23px;top:2px" width="13" height="12"><path d="M2 6.5l3.5 3.5l6-8" stroke="#2e3436" stroke-width="2.8" fill="none"/></svg><span>F.Adhes</span></div>
<div class="lay" style="top:242px"><b style="background:#000084"></b><u></u><svg style="position:absolute;left:23px;top:2px" width="13" height="12"><path d="M2 6.5l3.5 3.5l6-8" stroke="#2e3436" stroke-width="2.8" fill="none"/></svg><span>B.Adhes</span></div>
<div class="lay" style="top:265px"><b style="background:#840000"></b><u></u><svg style="position:absolute;left:23px;top:2px" width="13" height="12"><path d="M2 6.5l3.5 3.5l6-8" stroke="#2e3436" stroke-width="2.8" fill="none"/></svg><span>F.Paste</span></div>
<div class="lay" style="top:288px"><b style="background:#00c2c2"></b><u></u><svg style="position:absolute;left:23px;top:2px" width="13" height="12"><path d="M2 6.5l3.5 3.5l6-8" stroke="#2e3436" stroke-width="2.8" fill="none"/></svg><span>B.Paste</span></div>
<div class="lay" style="top:311px"><b style="background:#008484"></b><u></u><svg style="position:absolute;left:23px;top:2px" width="13" height="12"><path d="M2 6.5l3.5 3.5l6-8" stroke="#2e3436" stroke-width="2.8" fill="none"/></svg><span>F.SilkS</span></div>
<div class="lay" style="top:334px"><b style="background:#840084"></b><u></u><svg style="position:absolute;left:23px;top:2px" width="13" height="12"><path d="M2 6.5l3.5 3.5l6-8" stroke="#2e3436" stroke-width="2.8" fill="none"/></svg><span>B.SilkS</span></div>
<div class="lay" style="top:357px"><b style="background:#840084"></b><u></u><svg style="position:absolute;left:23px;top:2px" width="13" height="12"><path d="M2 6.5l3.5 3.5l6-8" stroke="#2e3436" stroke-width="2.8" fill="none"/></svg><span>F.Mask</span></div>
<div class="lay" style="top:380px"><b style="background:#848400"></b><u></u><svg style="position:absolute;left:23px;top:2px" width="13" height="12"><path d="M2 6.5l3.5 3.5l6-8" stroke="#2e3436" stroke-width="2.8" fill="none"/></svg><span>B.Mask</span></div>
<div class="lay" style="top:403px"><b style="background:#c2c2c2"></b><u></u><svg style="position:absolute;left:23px;top:2px" width="13" height="12"><path d="M2 6.5l3.5 3.5l6-8" stroke="#2e3436" stroke-width="2.8" fill="none"/></svg><span>Dwgs.User</span></div>
<div class="lay" style="top:426px"><b style="background:#000084"></b><u></u><svg style="position:absolute;left:23px;top:2px" width="13" height="12"><path d="M2 6.5l3.5 3.5l6-8" stroke="#2e3436" stroke-width="2.8" fill="none"/></svg><span>Cmts.User</span></div>
<div class="lay" style="top:449px"><b style="background:#008400"></b><u></u><svg style="position:absolute;left:23px;top:2px" width="13" height="12"><path d="M2 6.5l3.5 3.5l6-8" stroke="#2e3436" stroke-width="2.8" fill="none"/></svg><span>Eco1.User</span></div>
<div class="lay" style="top:472px"><b style="background:#c2c200"></b><u></u><svg style="position:absolute;left:23px;top:2px" width="13" height="12"><path d="M2 6.5l3.5 3.5l6-8" stroke="#2e3436" stroke-width="2.8" fill="none"/></svg><span>Eco2.User</span></div>
<div class="lay" style="top:495px"><b style="background:#c2c200"></b><u></u><svg style="position:absolute;left:23px;top:2px" width="13" height="12"><path d="M2 6.5l3.5 3.5l6-8" stroke="#2e3436" stroke-width="2.8" fill="none"/></svg><span>Edge.Cuts</span></div>
<div class="lay" style="top:518px"><b style="background:#c200c2"></b><u></u><svg style="position:absolute;left:23px;top:2px" width="13" height="12"><path d="M2 6.5l3.5 3.5l6-8" stroke="#2e3436" stroke-width="2.8" fill="none"/></svg><span>Margin</span></div>
<div class="lay" style="top:541px"><b style="background:#c2c2c2"></b><u></u><svg style="position:absolute;left:23px;top:2px" width="13" height="12"><path d="M2 6.5l3.5 3.5l6-8" stroke="#2e3436" stroke-width="2.8" fill="none"/></svg><span>F.CrtYd</span></div>
<div class="lay" style="top:564px"><b style="background:#848484"></b><u></u><svg style="position:absolute;left:23px;top:2px" width="13" height="12"><path d="M2 6.5l3.5 3.5l6-8" stroke="#2e3436" stroke-width="2.8" fill="none"/></svg><span>B.CrtYd</span></div>
<div class="lay" style="top:587px"><b style="background:#848484"></b><u></u><svg style="position:absolute;left:23px;top:2px" width="13" height="12"><path d="M2 6.5l3.5 3.5l6-8" stroke="#2e3436" stroke-width="2.8" fill="none"/></svg><span>F.Fab</span></div>
<div class="lay" style="top:610px"><b style="background:#000084"></b><u></u><svg style="position:absolute;left:23px;top:2px" width="13" height="12"><path d="M2 6.5l3.5 3.5l6-8" stroke="#2e3436" stroke-width="2.8" fill="none"/></svg><span>B.Fab</span></div>
<svg class="abs" style="left:1446px;top:175px" width="8" height="12"><path d="M0 0l7 6l-7 6z" fill="#3030e0"/></svg>
<div class="st" style="left:16px;top:833px;color:#1e5a1e">Pads</div>
<div class="st" style="left:89px;top:833px;color:#1e5a1e">Vias</div>
<div class="st" style="left:158px;top:833px;color:#1e5a1e">Track Segments</div>
<div class="st" style="left:310px;top:833px;color:#1e5a5a">Nodes</div>
<div class="st" style="left:395px;top:833px;color:#8b1a1a">Nets</div>
<div class="st" style="left:468px;top:833px;color:#1e1e8b">Unconnected</div>
<div class="st" style="left:16px;top:854px;color:#1e5a1e">172</div>
<div class="st" style="left:89px;top:854px;color:#1e5a1e">39</div>
<div class="st" style="left:158px;top:854px;color:#1e5a1e">565</div>
<div class="st" style="left:310px;top:854px;color:#1e5a5a">172</div>
<div class="st" style="left:395px;top:854px;color:#8b1a1a">44</div>
<div class="st" style="left:468px;top:854px;color:#1e1e8b">41</div>
<div class="st" style="left:682px;top:879px;color:#2e3436">Z 5,45</div>
<div class="st" style="left:759px;top:879px;color:#2e3436">X 173,990000&nbsp; Y 87,630000</div>
<div class="st" style="left:992px;top:879px;color:#2e3436">dx 173,990000&nbsp; dy 87,630000&nbsp; dist 194,812</div>
<div class="st" style="left:1352px;top:879px;color:#2e3436">mm</div>
</body></html>
